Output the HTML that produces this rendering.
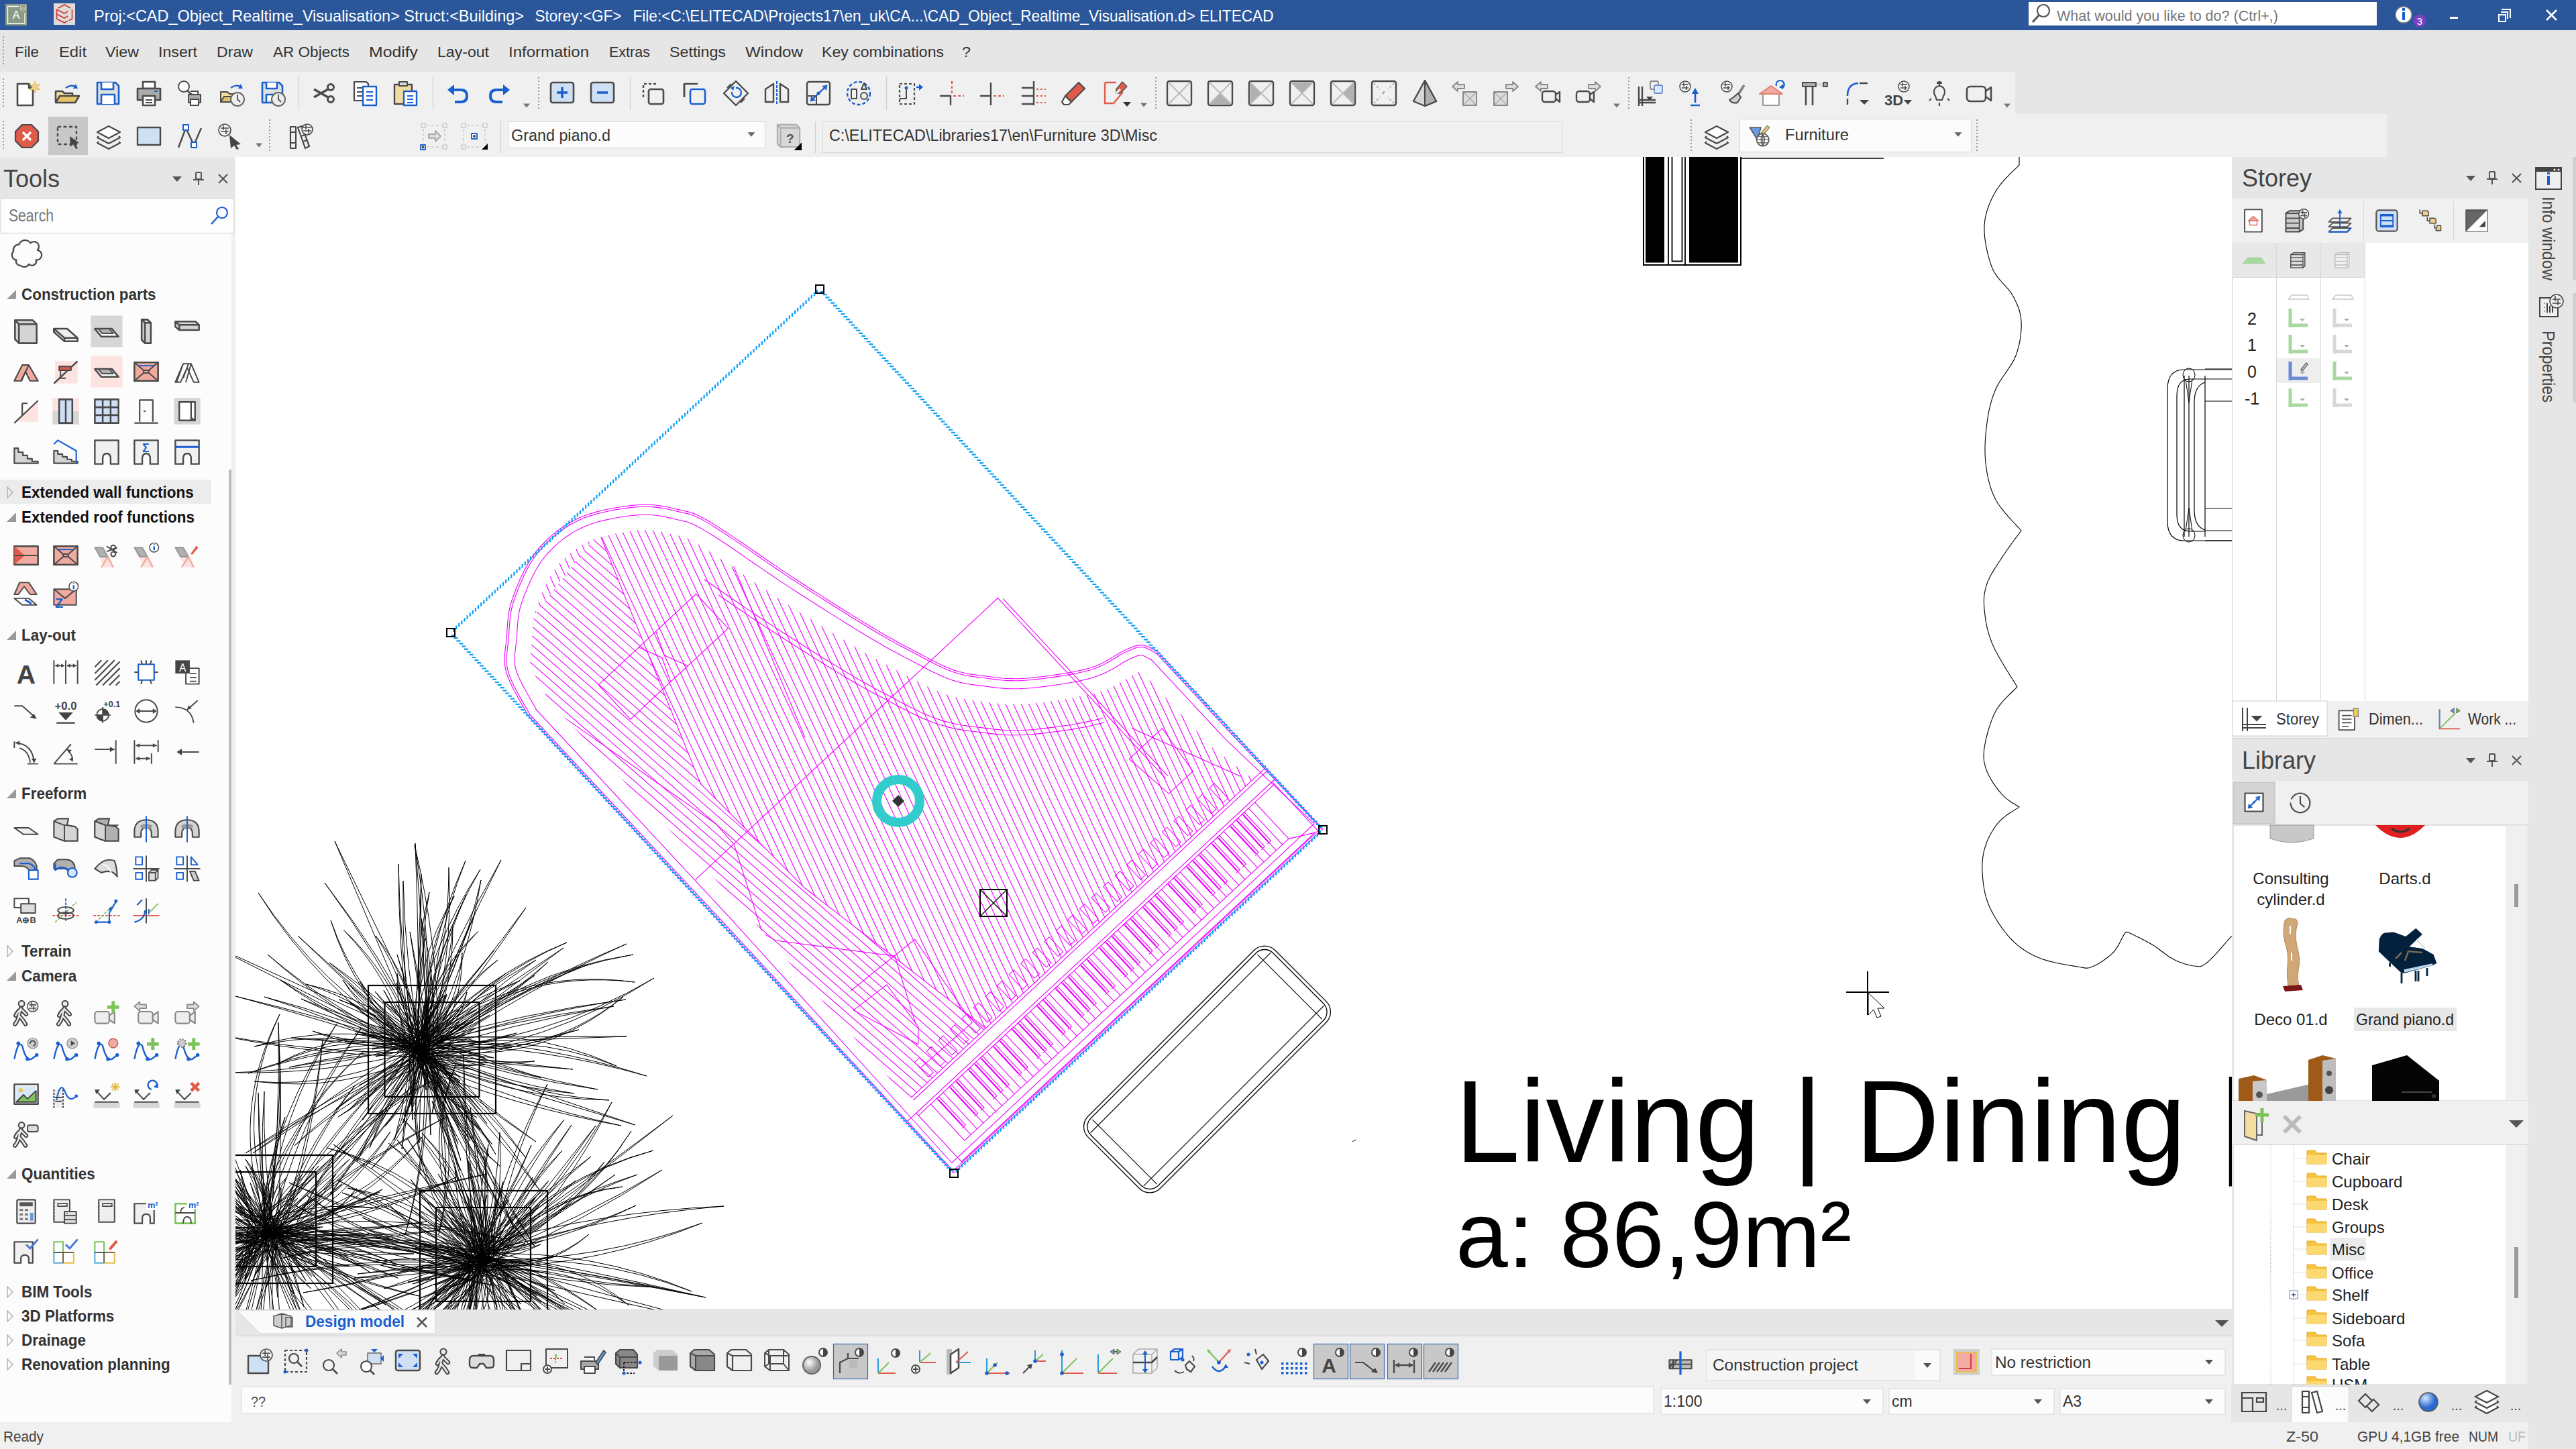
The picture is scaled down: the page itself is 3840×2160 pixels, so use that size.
<!DOCTYPE html>
<html><head><meta charset="utf-8"><title>ELITECAD</title>
<style>html,body{margin:0;padding:0;width:3840px;height:2160px;overflow:hidden;background:#f0f0f0}
svg{display:block;font-family:"Liberation Sans",sans-serif}</style></head>
<body><svg width="3840" height="2160" viewBox="0 0 3840 2160">
<rect x="0.0" y="0.0" width="3840.0" height="45.0" fill="#2b579a" />
<rect x="8.0" y="6.0" width="32.0" height="32.0" fill="#8a9a84" />
<path d="M28 9.5 H11.5 V35 H37 V19" fill="none" stroke="#fff" stroke-width="1.3"/>
<ellipse cx="34.5" cy="9" rx="4" ry="2" fill="none" stroke="#c8d0c0" stroke-width="1"/><path d="M30.5 9 V15 Q34.5 18 38.5 15 V9 M30.5 12 Q34.5 15 38.5 12" fill="none" stroke="#c8d0c0" stroke-width="1"/>
<text x="24.0" y="28.0" font-size="16.0" fill="#fff" text-anchor="middle" >A</text>
<rect x="80.0" y="5.0" width="32.0" height="32.0" fill="#dcdcdc" />
<path d="M87 12 L96 7 L105 12 M84.5 14 V28 L96 34 L101 31 M84.5 14 L96 20 L101 17 M84.5 21 L96 27 L101 24 M107.5 14 V28 L103 30.5" fill="none" stroke="#d9322a" stroke-width="1.6"/>
<text x="140.0" y="32.0" font-size="24.0" fill="#fff" textLength="641.0" lengthAdjust="spacingAndGlyphs" >Proj:&lt;CAD_Object_Realtime_Visualisation&gt; Struct:&lt;Building&gt;</text>
<text x="797.5" y="32.0" font-size="24.0" fill="#fff" textLength="129.0" lengthAdjust="spacingAndGlyphs" >Storey:&lt;GF&gt;</text>
<text x="943.5" y="32.0" font-size="24.0" fill="#fff" textLength="955.0" lengthAdjust="spacingAndGlyphs" >File:&lt;C:\ELITECAD\Projects17\en_uk\CA...\CAD_Object_Realtime_Visualisation.d&gt; ELITECAD</text>
<rect x="3024.0" y="3.0" width="519.0" height="35.0" fill="#fff" />
<circle cx="3046" cy="16" r="9" fill="none" stroke="#555" stroke-width="2.2"/>
<line x1="3039.0" y1="23.0" x2="3030.0" y2="33.0" stroke="#555" stroke-width="3" />
<text x="3066.0" y="31.0" font-size="22.0" fill="#777" textLength="330.0" lengthAdjust="spacingAndGlyphs" >What would you like to do? (Ctrl+,)</text>
<circle cx="3583" cy="22" r="12" fill="#fff" stroke="#888" stroke-width="1.5"/>
<rect x="3581.0" y="18.0" width="4.0" height="12.0" fill="#1a5fd0" />
<rect x="3581.0" y="12.0" width="4.0" height="4.0" fill="#1a5fd0" />
<circle cx="3607" cy="31" r="9.5" fill="#7b3fc4"/>
<text x="3607.0" y="37.0" font-size="15.0" fill="#fff" text-anchor="middle" >3</text>
<rect x="3652.0" y="25.0" width="12.0" height="3.0" fill="#fff" />
<path d="M3728 18 h10 v10 M3725 22 h10 v10 h-10 z M3729 14 h13 v13" fill="none" stroke="#fff" stroke-width="2"/>
<path d="M3796 15 L3811 30 M3811 15 L3796 30" stroke="#fff" stroke-width="2.5"/>
<rect x="0.0" y="45.0" width="3840.0" height="190.0" fill="#e6e6e6" />
<line x1="5" y1="54" x2="5" y2="96" stroke="#9a9a9a" stroke-width="2" stroke-dasharray="2 3"/>
<text x="22.0" y="85.0" font-size="22.0" fill="#333" textLength="36.0" lengthAdjust="spacingAndGlyphs" >File</text>
<text x="88.0" y="85.0" font-size="22.0" fill="#333" textLength="41.0" lengthAdjust="spacingAndGlyphs" >Edit</text>
<text x="157.0" y="85.0" font-size="22.0" fill="#333" textLength="50.0" lengthAdjust="spacingAndGlyphs" >View</text>
<text x="236.0" y="85.0" font-size="22.0" fill="#333" textLength="58.0" lengthAdjust="spacingAndGlyphs" >Insert</text>
<text x="323.0" y="85.0" font-size="22.0" fill="#333" textLength="54.0" lengthAdjust="spacingAndGlyphs" >Draw</text>
<text x="407.0" y="85.0" font-size="22.0" fill="#333" textLength="114.0" lengthAdjust="spacingAndGlyphs" >AR Objects</text>
<text x="550.0" y="85.0" font-size="22.0" fill="#333" textLength="73.0" lengthAdjust="spacingAndGlyphs" >Modify</text>
<text x="652.0" y="85.0" font-size="22.0" fill="#333" textLength="77.0" lengthAdjust="spacingAndGlyphs" >Lay-out</text>
<text x="758.0" y="85.0" font-size="22.0" fill="#333" textLength="120.0" lengthAdjust="spacingAndGlyphs" >Information</text>
<text x="908.0" y="85.0" font-size="22.0" fill="#333" textLength="61.0" lengthAdjust="spacingAndGlyphs" >Extras</text>
<text x="998.0" y="85.0" font-size="22.0" fill="#333" textLength="84.0" lengthAdjust="spacingAndGlyphs" >Settings</text>
<text x="1111.0" y="85.0" font-size="22.0" fill="#333" textLength="86.0" lengthAdjust="spacingAndGlyphs" >Window</text>
<text x="1225.0" y="85.0" font-size="22.0" fill="#333" textLength="182.0" lengthAdjust="spacingAndGlyphs" >Key combinations</text>
<text x="1434.0" y="85.0" font-size="22.0" fill="#333" textLength="13.0" lengthAdjust="spacingAndGlyphs" >?</text>
<rect x="0.0" y="107.0" width="3004.0" height="63.0" fill="#f0f0f0" />
<rect x="0.0" y="170.0" width="3558.0" height="65.0" fill="#f0f0f0" />
<line x1="0.0" y1="170.0" x2="3004.0" y2="170.0" stroke="#f0f0f0" stroke-width="1" />
<rect x="351.0" y="234.0" width="2976.0" height="1718.0" fill="#fff" />
<svg x="351" y="234" width="2976" height="1718" overflow="hidden"><g transform="translate(-351 -234)">
<path d="M2450 234 V395 H2595 V234" fill="#fff" stroke="#000" stroke-width="2"/>
<rect x="2453.0" y="234.0" width="28.0" height="157.5" fill="#000" />
<rect x="2518.0" y="234.0" width="73.0" height="157.5" fill="#000" />
<path d="M2487 234 V395 M2512 234 V395 M2492.5 234 V389.5 H2507.5 V234" fill="none" stroke="#000" stroke-width="1.8"/>
<line x1="2596.0" y1="236.0" x2="2808.0" y2="236.0" stroke="#000" stroke-width="1.5" />
<path d="M3010 234 L3010 246 L3007.2 248.9 L3003.3 252.7 L2998.6 257.2 L2993.6 262.2 L2988.3 267.7 L2983.3 273.4 L2978.8 279.2 L2975.0 285.0 L2971.8 290.8 L2968.8 296.8 L2966.0 303.1 L2963.6 309.5 L2961.5 316.1 L2959.8 322.9 L2958.6 329.9 L2958.0 337.0 L2958.0 344.5 L2958.5 352.5 L2959.6 360.8 L2961.1 369.2 L2962.9 377.6 L2965.1 385.6 L2967.4 393.2 L2970.0 400.0 L2973.0 406.1 L2976.6 411.6 L2980.7 416.7 L2984.9 421.5 L2989.2 426.1 L2993.3 430.6 L2996.9 435.2 L3000.0 440.0 L3002.6 444.8 L3004.9 449.5 L3007.0 454.2 L3008.9 458.8 L3010.4 463.5 L3011.6 468.4 L3012.5 473.6 L3013.0 479.0 L3013.2 484.8 L3013.0 490.9 L3012.5 497.3 L3011.7 503.8 L3010.5 510.4 L3009.0 517.0 L3007.2 523.6 L3005.0 530.0 L3002.2 536.3 L2998.6 542.6 L2994.6 548.8 L2990.3 555.1 L2986.0 561.3 L2981.8 567.5 L2978.1 573.8 L2975.0 580.0 L2972.5 586.2 L2970.3 592.3 L2968.4 598.3 L2966.8 604.4 L2965.3 610.5 L2964.1 616.8 L2963.0 623.3 L2962.0 630.0 L2961.1 637.1 L2960.3 644.4 L2959.7 652.0 L2959.2 659.7 L2959.0 667.4 L2959.0 675.1 L2959.4 682.7 L2960.0 690.0 L2960.9 697.2 L2962.0 704.3 L2963.4 711.4 L2965.0 718.4 L2966.9 725.3 L2969.2 732.0 L2971.9 738.6 L2975.0 745.0 L2978.9 751.5 L2983.8 758.2 L2989.2 764.9 L2994.9 771.4 L3000.5 777.5 L3005.6 782.9 L3009.9 787.5 L3013.0 791.0 L3010.8 794.0 L3007.9 798.0 L3004.3 802.7 L3000.4 808.0 L2996.4 813.6 L2992.3 819.3 L2988.5 824.8 L2985.0 830.0 L2981.8 835.0 L2978.5 840.0 L2975.2 845.0 L2972.0 850.1 L2969.0 855.1 L2966.3 860.1 L2963.9 865.1 L2962.0 870.0 L2960.5 874.8 L2959.3 879.3 L2958.4 883.8 L2957.8 888.2 L2957.5 892.8 L2957.4 897.6 L2957.6 902.6 L2958.0 908.0 L2958.6 913.7 L2959.3 919.7 L2960.2 925.9 L2961.4 932.4 L2963.0 939.0 L2964.9 945.8 L2967.2 952.8 L2970.0 960.0 L2973.7 967.9 L2978.4 976.7 L2983.7 985.9 L2989.2 995.2 L2994.7 1004.2 L2999.8 1012.2 L3004.0 1019.0 L3007.0 1024.0 L3004.4 1026.6 L3000.9 1030.0 L2996.7 1034.0 L2992.1 1038.6 L2987.3 1043.5 L2982.7 1048.8 L2978.5 1054.3 L2975.0 1060.0 L2972.0 1066.1 L2969.2 1072.9 L2966.6 1080.1 L2964.2 1087.6 L2962.2 1095.0 L2960.4 1102.2 L2959.0 1109.0 L2958.0 1115.0 L2957.4 1120.3 L2957.1 1125.2 L2957.1 1129.6 L2957.5 1133.8 L2958.2 1137.8 L2959.2 1141.7 L2960.4 1145.8 L2962.0 1150.0 L2964.0 1154.5 L2966.4 1159.1 L2969.1 1163.9 L2972.2 1168.6 L2975.4 1173.1 L2978.7 1177.4 L2981.9 1181.4 L2985.0 1185.0 L2988.2 1188.2 L2991.7 1191.1 L2995.3 1193.8 L2998.9 1196.2 L3002.4 1198.3 L3005.5 1200.2 L3008.1 1201.7 L3010.0 1203.0 L3007.6 1204.6 L3004.4 1206.6 L3000.5 1209.1 L2996.2 1211.8 L2991.8 1214.8 L2987.5 1218.1 L2983.5 1221.5 L2980.0 1225.0 L2976.9 1228.7 L2973.9 1232.7 L2971.1 1237.0 L2968.4 1241.4 L2966.0 1245.9 L2963.7 1250.6 L2961.7 1255.3 L2960.0 1260.0 L2958.6 1264.7 L2957.3 1269.4 L2956.4 1274.2 L2955.6 1279.1 L2955.1 1284.0 L2954.8 1289.2 L2954.8 1294.5 L2955.0 1300.0 L2955.4 1305.8 L2955.9 1311.8 L2956.6 1318.0 L2957.6 1324.4 L2958.9 1330.8 L2960.5 1337.3 L2962.5 1343.7 L2965.0 1350.0 L2968.0 1356.4 L2971.4 1363.0 L2975.3 1369.7 L2979.5 1376.4 L2984.0 1382.9 L2988.6 1389.0 L2993.3 1394.8 L2998.0 1400.0 L3002.7 1404.7 L3007.5 1408.9 L3012.4 1412.8 L3017.5 1416.3 L3022.8 1419.6 L3028.2 1422.6 L3034.0 1425.4 L3040.0 1428.0 L3046.6 1430.4 L3054.0 1432.6 L3061.8 1434.5 L3069.8 1436.2 L3077.5 1437.7 L3084.9 1439.0 L3091.4 1440.1 L3097.0 1441.0 L3101.4 1441.8 L3104.8 1442.4 L3107.4 1442.9 L3109.6 1443.1 L3111.6 1443.1 L3113.7 1442.8 L3116.1 1442.1 L3119.0 1441.0 L3122.5 1439.4 L3126.4 1437.4 L3130.6 1435.0 L3134.8 1432.2 L3139.0 1429.3 L3143.0 1426.2 L3146.7 1423.1 L3150.0 1420.0 L3152.9 1416.7 L3155.5 1412.9 L3157.9 1408.9 L3160.1 1404.8 L3162.0 1400.9 L3163.9 1397.3 L3165.5 1394.3 L3167.0 1392.0 L3168.3 1390.5 L3169.4 1389.6 L3170.3 1389.3 L3171.1 1389.2 L3171.7 1389.5 L3172.2 1389.8 L3172.6 1390.0 L3173.0 1390.0 L3175.7 1391.4 L3179.4 1393.1 L3183.7 1395.3 L3188.5 1397.6 L3193.6 1400.2 L3198.6 1402.8 L3203.5 1405.4 L3208.0 1408.0 L3212.2 1410.6 L3216.2 1413.5 L3220.3 1416.5 L3224.2 1419.5 L3228.2 1422.5 L3232.1 1425.2 L3236.1 1427.8 L3240.0 1430.0 L3244.0 1431.9 L3248.1 1433.7 L3252.2 1435.3 L3256.3 1436.7 L3260.3 1437.9 L3264.1 1438.8 L3267.7 1439.5 L3271.0 1440.0 L3273.8 1440.3 L3276.2 1440.6 L3278.2 1440.8 L3280.1 1440.6 L3282.1 1440.1 L3284.3 1439.1 L3286.8 1437.4 L3290.0 1435.0 L3294.0 1431.4 L3298.9 1426.5 L3304.2 1420.8 L3309.7 1414.7 L3315.0 1408.6 L3319.9 1403.0 L3324.0 1398.3 L3327.0 1395.0" fill="none" stroke="#000" stroke-width="1.1"/>
<path d="M3327 551 H3256 Q3231 551 3231 580 V777 Q3231 806 3256 806 H3327" fill="none" stroke="#000" stroke-width="1.2"/>
<path d="M3287 565 H3265 Q3245 565 3245 590 V767 Q3245 792 3265 792 H3287" fill="none" stroke="#000" stroke-width="1.2"/>
<line x1="3256.0" y1="560.0" x2="3256.0" y2="800.0" stroke="#000" stroke-width="1.2" />
<line x1="3263.0" y1="560.0" x2="3263.0" y2="800.0" stroke="#000" stroke-width="1.2" />
<line x1="3287.0" y1="560.0" x2="3287.0" y2="800.0" stroke="#000" stroke-width="1.2" />
<path d="M3287 570 Q3271 575 3271 600 V760 Q3271 785 3287 790" fill="none" stroke="#000" stroke-width="1.2"/>
<line x1="3287.0" y1="550.0" x2="3327.0" y2="550.0" stroke="#000" stroke-width="1.2" />
<line x1="3287.0" y1="565.0" x2="3327.0" y2="565.0" stroke="#000" stroke-width="1.2" />
<line x1="3287.0" y1="598.0" x2="3327.0" y2="598.0" stroke="#000" stroke-width="1.2" />
<line x1="3287.0" y1="758.0" x2="3327.0" y2="758.0" stroke="#000" stroke-width="1.2" />
<line x1="3287.0" y1="791.0" x2="3327.0" y2="791.0" stroke="#000" stroke-width="1.2" />
<line x1="3287.0" y1="806.0" x2="3327.0" y2="806.0" stroke="#000" stroke-width="1.2" />
<ellipse cx="3263" cy="559" rx="9" ry="10" fill="none" stroke="#000"/><ellipse cx="3263" cy="798" rx="9" ry="10" fill="none" stroke="#000"/>
<path d="M3258 565 L3263 600 L3268 565 M3258 792 L3263 757 L3268 792" fill="none" stroke="#000"/>
<line x1="2752.0" y1="1479.0" x2="2816.0" y2="1479.0" stroke="#000" stroke-width="2" />
<line x1="2784.0" y1="1448.0" x2="2784.0" y2="1513.0" stroke="#000" stroke-width="2" />
<path d="M2785 1480 L2809 1503 L2799 1503 L2804 1515 L2798 1517 L2793 1505 L2785 1513 Z" fill="#fff" stroke="#000" stroke-width="1"/>
<line x1="2016.0" y1="1702.0" x2="2021.0" y2="1699.0" stroke="#000" stroke-width="1" />
<g transform="translate(1799.5 1594) rotate(-45)" fill="none" stroke="#000" stroke-width="1.3"><rect x="-197" y="-76" width="394" height="152" rx="22"/><rect x="-192" y="-71" width="384" height="142" rx="18"/><path d="M-190 -56 H190 M-190 56 H190 M-174 -68 V68 M174 -68 V68" stroke-width="1.1"/></g>
<text x="2169.0" y="1732.0" font-size="174.0" fill="#000" >Living | Dining |</text>
<text x="2170.0" y="1889.0" font-size="140.0" fill="#000" textLength="590.0" lengthAdjust="spacingAndGlyphs" >a: 86,9m²</text>
<path d="M651 1566Q786 1474 934 1407Q784 1470 647 1558M626 1565Q654 1636 683 1706Q656 1635 631 1563M628 1547Q613 1484 592 1423Q611 1485 623 1549M613 1540Q581 1451 512 1386Q577 1453 606 1544M634 1560Q518 1526 418 1461Q516 1531 629 1571M624 1552Q607 1515 571 1492Q604 1517 619 1556M622 1579Q656 1594 686 1614Q661 1589 631 1568M629 1568Q617 1621 601 1674Q620 1622 634 1569M639 1562Q621 1441 677 1336Q614 1440 624 1559M612 1566Q702 1713 797 1858Q708 1710 624 1559M640 1546Q570 1400 499 1254Q562 1403 625 1552M624 1574Q698 1563 770 1540Q698 1559 623 1567M640 1570Q772 1452 944 1423Q771 1449 638 1565M616 1569Q617 1637 625 1704Q625 1637 631 1570M628 1563Q677 1418 747 1282Q670 1415 615 1557M614 1563Q606 1632 588 1699Q612 1634 627 1567M616 1563Q703 1638 799 1702Q705 1635 620 1558M626 1549Q535 1525 449 1489Q533 1530 622 1558M635 1552Q627 1527 616 1503Q620 1528 621 1555M638 1582Q661 1646 701 1701Q665 1644 647 1577M625 1551Q616 1464 560 1395Q609 1466 611 1557M647 1552Q682 1480 742 1431Q679 1478 641 1547M629 1563Q616 1628 574 1679Q620 1630 637 1567M631 1560Q530 1568 431 1591Q530 1572 632 1566M631 1576Q640 1710 604 1841Q642 1710 637 1576M637 1557Q686 1533 696 1479Q681 1530 628 1550M627 1574Q759 1638 908 1640Q761 1631 631 1561M628 1577Q522 1626 439 1708Q525 1631 635 1586M630 1579Q687 1733 792 1860Q691 1731 640 1574M628 1561Q511 1623 379 1612Q512 1629 631 1572M641 1568Q576 1537 520 1493Q575 1540 638 1573M626 1543Q562 1485 491 1435Q558 1489 618 1552M653 1543Q652 1401 618 1260Q644 1401 637 1544M640 1553Q676 1426 669 1293Q669 1425 627 1551M630 1560Q581 1546 529 1541Q580 1550 628 1569M613 1559Q578 1596 535 1618Q580 1598 616 1564M628 1549Q646 1457 713 1388Q642 1455 619 1545M624 1581Q745 1572 863 1535Q744 1567 623 1572M607 1572Q593 1593 576 1611Q597 1598 615 1582M610 1581Q610 1613 616 1646Q615 1614 620 1582M624 1558Q585 1553 548 1541Q584 1558 621 1569M646 1557Q651 1463 628 1369Q643 1463 631 1557M610 1566Q611 1618 615 1670Q615 1618 617 1567M638 1559Q675 1475 675 1381Q668 1473 624 1555M631 1547Q612 1520 590 1496Q606 1524 619 1554M637 1544Q650 1434 695 1334Q646 1433 630 1542M626 1549Q464 1477 303 1403Q461 1483 620 1561M629 1572Q651 1529 666 1483Q648 1528 624 1570M641 1556Q668 1557 694 1553Q667 1551 640 1545M615 1564Q720 1661 805 1775Q726 1656 626 1554M619 1569Q488 1637 366 1719Q491 1642 624 1579M631 1570Q695 1448 717 1312Q687 1446 617 1565M629 1545Q554 1521 511 1461Q551 1525 622 1553M625 1549Q647 1415 716 1296Q641 1413 613 1545M623 1565Q762 1442 946 1464Q761 1439 621 1559M633 1548Q643 1521 636 1492Q639 1521 624 1547M634 1573Q678 1650 729 1722Q685 1645 647 1564M619 1573Q692 1637 739 1721Q694 1636 622 1570M626 1565Q681 1546 730 1513Q680 1543 623 1558M626 1554Q488 1595 345 1599Q489 1602 627 1566M644 1581Q709 1704 766 1831Q715 1701 656 1575M629 1572Q604 1444 601 1313Q598 1444 618 1573M626 1566Q663 1539 705 1524Q659 1532 619 1552M618 1555Q476 1469 385 1331Q473 1472 612 1561M622 1568Q608 1605 583 1635Q610 1606 627 1570M639 1565Q751 1488 876 1438Q750 1486 636 1560M604 1558Q582 1521 549 1498Q580 1523 600 1564M637 1559Q612 1513 591 1465Q605 1516 622 1565M639 1553Q676 1544 716 1554Q676 1540 638 1545M631 1554Q657 1536 668 1507Q655 1535 626 1551M613 1574Q655 1591 703 1594Q657 1587 616 1566M625 1557Q572 1641 532 1732Q577 1644 634 1563M640 1549Q716 1454 784 1353Q712 1451 632 1543M615 1539Q596 1415 594 1288Q594 1415 610 1540M619 1555Q491 1554 370 1600Q492 1558 620 1561M618 1575Q636 1599 651 1624Q643 1596 632 1569M619 1564Q500 1508 399 1423Q498 1511 616 1569M628 1561Q637 1525 647 1490Q633 1524 619 1559M634 1561Q780 1512 933 1490Q780 1509 633 1554M622 1572Q624 1605 649 1631Q626 1604 626 1571M627 1554Q580 1538 530 1538Q579 1544 624 1567M622 1584Q575 1641 551 1711Q578 1643 628 1587M633 1565Q637 1526 639 1486Q634 1526 626 1564M637 1544Q686 1479 737 1416Q684 1478 633 1541M615 1569Q730 1618 856 1630Q732 1611 619 1556M623 1562Q624 1667 553 1743Q629 1669 633 1566M628 1542Q567 1423 484 1316Q564 1424 623 1545M615 1542Q598 1498 592 1451Q592 1500 602 1546M641 1583Q653 1620 644 1660Q658 1619 650 1581M626 1560Q668 1532 711 1505Q666 1528 621 1553M638 1574Q656 1600 686 1611Q659 1596 643 1567M647 1564Q670 1550 684 1523Q669 1548 645 1560M639 1565Q632 1411 619 1257Q625 1411 624 1566M639 1565Q738 1487 840 1413Q735 1482 631 1554M636 1574Q682 1559 724 1578Q683 1555 637 1566M626 1557Q554 1489 456 1467Q551 1495 620 1569M644 1562Q690 1501 689 1420Q684 1499 634 1557M613 1583Q558 1687 491 1782Q561 1689 619 1588M622 1565Q649 1541 674 1516Q645 1537 614 1557M643 1567Q764 1606 891 1624Q765 1601 645 1556M621 1580Q663 1652 687 1730Q666 1651 628 1578M643 1565Q679 1554 710 1532Q677 1549 640 1556M628 1560Q644 1520 666 1482Q639 1517 619 1555M621 1543Q565 1509 518 1465Q560 1515 611 1554M622 1564Q635 1594 656 1621Q641 1591 633 1559M630 1568Q605 1543 580 1517Q602 1546 624 1575M637 1568Q718 1512 797 1454Q715 1507 630 1558M613 1571Q660 1631 716 1685Q665 1628 624 1564M623 1554Q642 1631 711 1666Q644 1629 627 1551M623 1559Q628 1431 628 1303Q625 1431 617 1559M628 1578Q741 1584 854 1594Q742 1581 629 1571M627 1570Q685 1701 654 1840Q691 1700 639 1568M608 1569Q532 1717 408 1825Q537 1721 618 1576M647 1554Q619 1441 640 1330Q612 1441 633 1554M620 1569Q453 1570 289 1535Q453 1573 620 1575M635 1572Q699 1558 763 1561Q699 1552 635 1561M623 1561Q640 1626 642 1692Q643 1625 629 1560M608 1549Q534 1559 466 1537Q534 1564 607 1559M615 1567Q556 1607 501 1653Q558 1610 619 1573M621 1567Q574 1614 540 1670Q578 1617 628 1573M624 1567Q629 1620 602 1664Q631 1620 628 1568M629 1541Q569 1514 536 1463Q564 1519 618 1551M626 1579Q672 1593 723 1587Q672 1590 627 1574M613 1557Q493 1635 377 1719Q497 1640 620 1568M634 1566Q673 1606 700 1657Q675 1605 637 1563M633 1569Q713 1592 797 1582Q714 1588 634 1561M641 1585Q794 1631 947 1677Q796 1626 645 1574M629 1575Q622 1621 618 1668Q630 1622 645 1576M626 1562Q643 1505 643 1445Q639 1504 619 1561M632 1556Q666 1536 686 1503Q660 1531 621 1546M632 1568Q682 1619 726 1675Q684 1617 635 1565M648 1557Q740 1507 817 1434Q738 1503 643 1549M626 1567Q629 1596 635 1625Q634 1595 636 1565M650 1568Q728 1589 807 1607Q730 1582 654 1554M652 1558Q811 1560 964 1604Q811 1555 653 1550M612 1551Q565 1509 505 1490Q564 1511 609 1555M614 1587Q764 1649 926 1678Q766 1644 619 1576M632 1555Q518 1529 413 1586Q518 1535 633 1566M625 1567Q513 1517 394 1486Q511 1522 622 1577M647 1555Q790 1550 934 1545Q790 1546 647 1546M639 1556Q628 1472 611 1389Q625 1473 635 1557M619 1557Q605 1634 599 1713Q610 1635 629 1559M631 1564Q533 1488 493 1372Q530 1491 625 1569M634 1570Q781 1534 919 1589Q781 1526 635 1554M617 1559Q591 1543 564 1530Q588 1550 610 1573M624 1561Q712 1636 784 1726Q716 1632 632 1553M619 1568Q511 1680 443 1821Q514 1682 625 1572M648 1575Q693 1570 736 1577Q693 1563 649 1563M635 1549Q671 1455 708 1361Q667 1453 628 1546M631 1561Q533 1552 434 1547Q533 1555 631 1568M620 1573Q662 1670 746 1739Q666 1668 627 1568M637 1554Q628 1518 636 1484Q625 1518 631 1553M621 1561Q566 1604 519 1656Q569 1607 626 1567M628 1564Q684 1684 746 1801Q686 1683 632 1562M636 1551Q594 1517 559 1478Q590 1520 629 1557M634 1568Q539 1481 444 1395Q537 1483 630 1572M603 1559Q579 1536 556 1511Q577 1539 598 1565M635 1556Q596 1522 572 1476Q594 1523 631 1559M627 1561Q655 1532 674 1497Q650 1528 617 1553M640 1574Q653 1602 661 1633Q655 1601 644 1572M623 1565Q650 1657 686 1745Q656 1655 636 1561M631 1541Q641 1509 663 1483Q635 1507 619 1536M640 1562Q641 1416 694 1283Q635 1415 627 1559M612 1551Q587 1566 560 1575Q588 1571 614 1561M640 1559Q691 1499 754 1451Q687 1493 631 1548M620 1585Q677 1646 734 1706Q682 1642 631 1578M640 1559Q724 1456 845 1405Q722 1454 636 1553M639 1588Q662 1597 686 1605Q665 1593 645 1580M624 1561Q795 1597 929 1486Q794 1593 622 1554M624 1561Q489 1518 351 1485Q488 1522 622 1567M614 1574Q762 1525 915 1500Q761 1520 611 1564M636 1561Q680 1646 723 1732Q682 1645 639 1559M619 1571Q624 1485 633 1399Q620 1484 610 1570M647 1559Q716 1486 799 1431Q711 1480 638 1547M625 1556Q607 1604 615 1656Q613 1605 637 1558M632 1565Q667 1545 698 1520Q665 1543 629 1560M609 1553Q495 1526 379 1560Q495 1533 609 1567M621 1564Q588 1550 555 1564Q588 1557 622 1577M615 1555Q668 1603 717 1656Q671 1600 620 1549M633 1551Q698 1497 775 1462Q694 1492 626 1540M616 1555Q570 1622 504 1665Q572 1625 621 1562M626 1566Q580 1605 536 1648Q581 1607 630 1570M629 1556Q537 1711 388 1811Q543 1716 640 1566M617 1572Q633 1534 652 1497Q628 1532 606 1568M632 1576Q816 1559 975 1458Q814 1553 629 1564" fill="none" stroke="#000" stroke-width="1"/>
<circle cx="628" cy="1563" r="9" fill="#000"/>
<rect x="549.0" y="1469.0" width="190.0" height="191.0" fill="none" stroke="#000" stroke-width="2.2" />
<rect x="573.5" y="1494.0" width="141.0" height="141.0" fill="none" stroke="#000" stroke-width="2.2" />
<path d="M417 1859Q481 1835 544 1842Q482 1828 418 1844M383 1836Q315 1862 246 1883Q316 1866 386 1844M392 1836Q362 1820 331 1807Q360 1825 388 1844M406 1820Q346 1662 417 1512Q341 1661 396 1819M403 1832Q410 1803 435 1786Q404 1798 391 1823M396 1851Q333 1887 276 1931Q337 1892 404 1862M399 1830Q405 1804 402 1778Q397 1803 384 1828M415 1846Q582 1811 748 1846Q582 1804 415 1831M392 1829Q358 1793 321 1760Q353 1798 383 1838M405 1842Q571 1847 729 1895Q572 1841 407 1830M405 1862Q424 1894 439 1929Q428 1892 413 1858M396 1839Q559 1788 726 1750Q558 1784 394 1831M402 1835Q358 1806 310 1787Q355 1812 395 1846M398 1840Q369 2001 321 2157Q374 2002 408 1843M410 1841Q391 1734 394 1627Q386 1734 399 1841M385 1844Q310 1944 230 2040Q311 1946 388 1847M415 1847Q485 1833 532 1771Q484 1830 412 1842M374 1855Q359 1875 333 1876Q363 1882 382 1869M398 1830Q362 1763 323 1697Q356 1766 385 1837M392 1830Q272 1831 154 1812Q271 1834 391 1836M401 1825Q263 1798 123 1832Q263 1805 401 1838M385 1835Q297 1824 207 1827Q296 1829 384 1846M387 1851Q335 1887 274 1909Q336 1889 390 1855M400 1841Q331 1835 261 1825Q330 1840 399 1850M384 1846Q310 1824 234 1821Q310 1830 383 1856M404 1852Q409 1887 396 1921Q413 1887 411 1852M413 1838Q433 1875 456 1909Q435 1874 416 1836M382 1823Q340 1676 265 1543Q337 1677 377 1826M415 1851Q506 1873 593 1905Q508 1868 418 1841M391 1830Q311 1832 231 1835Q311 1838 390 1842M403 1826Q438 1782 475 1738Q437 1780 399 1824M403 1844Q440 1674 539 1532Q434 1671 392 1839M393 1819Q351 1795 313 1768Q348 1800 386 1827M401 1840Q441 1835 481 1829Q441 1830 400 1831M413 1832Q397 1783 366 1738Q390 1785 397 1837M413 1856Q464 1812 501 1750Q459 1806 403 1845M387 1842Q353 1877 311 1901Q358 1884 396 1855M398 1834Q357 1802 315 1772Q354 1806 391 1843M396 1828Q283 1933 178 2047Q285 1935 400 1833M377 1842Q278 1947 182 2056Q280 1949 380 1845M411 1841Q487 1855 552 1897Q489 1850 415 1832M406 1846Q414 1789 451 1751Q407 1785 394 1838M392 1845Q321 1845 250 1852Q321 1850 393 1853M386 1835Q317 1855 245 1855Q317 1860 387 1845M395 1844Q432 1975 504 2090Q439 1972 409 1838M388 1851Q348 1850 308 1850Q349 1852 389 1855M418 1838Q493 1897 575 1945Q496 1893 423 1829M406 1826Q507 1691 653 1605Q502 1686 397 1816M389 1834Q248 1892 134 1995Q252 1898 397 1847M409 1834Q403 1789 388 1745Q396 1790 395 1836M413 1841Q423 1683 415 1524Q418 1683 401 1840M389 1843Q426 1703 416 1560Q423 1703 382 1843M370 1827Q366 1940 299 2020Q371 1944 381 1833M390 1836Q322 1980 251 2123Q326 1982 398 1840M409 1841Q521 1757 601 1641Q519 1755 405 1836M385 1838Q286 1772 168 1767Q285 1775 383 1844M381 1837Q350 1905 306 1962Q354 1907 388 1842M407 1818Q373 1813 342 1803Q370 1817 402 1827M379 1850Q329 1926 269 1994Q333 1930 386 1856M394 1836Q270 1881 149 1936Q272 1886 399 1847M407 1862Q511 1874 617 1869Q511 1868 408 1850M393 1830Q370 1789 358 1744Q365 1791 384 1834M384 1834Q321 1995 240 2147Q323 1996 388 1836M381 1849Q305 1921 262 2018Q310 1925 390 1856M404 1853Q503 1914 578 2001Q507 1909 413 1843M391 1850Q342 1827 291 1829Q342 1834 390 1864M390 1837Q360 1849 329 1860Q360 1852 392 1842M393 1834Q413 1787 408 1737Q408 1786 385 1833M393 1844Q374 1931 350 2018Q377 1932 399 1845M387 1822Q426 1674 543 1566Q424 1672 382 1819M393 1823Q346 1746 285 1678Q342 1748 387 1828M397 1828Q377 1908 336 1979Q382 1911 408 1833M380 1850Q330 1848 290 1876Q332 1854 384 1862M395 1830Q322 1760 258 1682Q317 1764 386 1838M400 1844Q490 1821 570 1773Q488 1816 397 1835M403 1839Q477 1842 550 1840Q477 1835 403 1826M410 1840Q448 1860 489 1851Q448 1854 412 1827M399 1819Q416 1661 502 1526Q411 1659 388 1815M399 1857Q525 1908 639 1978Q529 1901 407 1844M394 1830Q352 1776 304 1727Q347 1780 383 1839M396 1839Q320 1931 286 2046Q324 1933 402 1842M392 1847Q440 1970 509 2084Q447 1967 406 1840M409 1828Q434 1886 453 1948Q436 1885 414 1826M410 1837Q506 1714 624 1612Q502 1709 402 1828M407 1837Q306 1723 191 1623Q301 1728 398 1846M374 1854Q365 1928 312 1974Q369 1930 382 1859M407 1842Q474 1855 534 1887Q475 1850 410 1833M401 1839Q526 1740 667 1664Q525 1737 398 1835M404 1834Q386 1799 373 1763Q383 1800 398 1836M386 1855Q319 1917 276 1997Q323 1920 395 1862M387 1842Q429 1814 470 1786Q426 1811 382 1835M397 1853Q290 1872 197 1924Q292 1878 402 1864M410 1857Q425 1878 450 1889Q428 1874 416 1850M411 1837Q366 1790 336 1735Q360 1794 400 1844M408 1847Q495 1902 580 1962Q496 1901 410 1843M416 1843Q518 1789 582 1687Q514 1784 407 1833M400 1818Q367 1801 328 1794Q364 1806 394 1827M412 1858Q448 1723 530 1617Q444 1721 405 1854M387 1851Q408 1875 423 1901Q412 1873 394 1848M387 1826Q312 1773 252 1704Q308 1778 378 1836M399 1848Q425 1890 464 1921Q427 1888 403 1844M395 1841Q434 1952 499 2051Q438 1951 402 1838M398 1836Q264 1855 129 1863Q265 1861 399 1847M407 1854Q459 1884 521 1887Q462 1877 413 1839M400 1866Q440 1952 521 2007Q445 1948 410 1858M403 1830Q429 1872 465 1903Q431 1869 407 1825M392 1830Q491 1845 585 1881Q492 1842 394 1825M401 1842Q428 1861 461 1873Q431 1856 407 1831M390 1841Q427 1851 452 1877Q428 1849 393 1838M410 1830Q312 1700 186 1596Q310 1703 405 1834M408 1833Q401 1869 380 1901Q404 1870 414 1835M404 1854Q458 1812 510 1765Q455 1806 397 1843M396 1834Q350 1794 313 1747Q349 1795 392 1837M402 1849Q435 1839 468 1826Q434 1831 399 1833M390 1842Q369 1938 311 2018Q373 1940 399 1846M395 1863Q435 1835 477 1830Q434 1830 394 1853M398 1844Q517 1841 636 1821Q517 1838 397 1839M402 1837Q567 1888 737 1916Q568 1885 404 1831M406 1828Q427 1809 444 1786Q422 1805 397 1820M397 1846Q521 1935 611 2057Q523 1932 401 1841M399 1838Q547 1821 680 1755Q546 1817 396 1831M406 1832Q339 1930 255 2013Q344 1933 415 1840M361 1838Q303 1862 242 1860Q304 1866 361 1845M414 1849Q534 1853 654 1834Q534 1848 414 1837M401 1837Q512 1896 614 1972Q515 1893 405 1830M395 1824Q387 1870 365 1909Q392 1872 405 1828M400 1851Q422 1815 419 1771Q417 1813 391 1848M403 1817Q399 1768 366 1728Q392 1771 387 1822M383 1841Q309 1984 218 2116Q314 1987 393 1847M383 1847Q367 1875 365 1909Q372 1877 393 1851M379 1833Q308 1873 229 1892Q309 1877 382 1841M402 1838Q387 1734 385 1629Q385 1734 397 1838M380 1832Q358 1819 335 1810Q356 1824 375 1842M407 1845Q473 1712 575 1608Q470 1710 401 1840M413 1837Q514 1854 616 1866Q515 1851 413 1831M391 1830Q472 1794 563 1801Q471 1790 389 1820M401 1842Q465 1790 521 1728Q460 1784 391 1830M397 1846Q401 1930 406 2014Q405 1930 407 1846M410 1855Q375 1999 310 2134Q377 2000 414 1856M400 1845Q421 1870 439 1898Q425 1868 408 1840M390 1837Q288 1914 176 1977Q289 1916 392 1841M403 1835Q399 1748 425 1665Q394 1747 392 1834M423 1832Q468 1696 481 1550Q465 1695 417 1830M393 1838Q294 1903 183 1866Q295 1907 394 1845M400 1839Q402 1786 374 1740Q400 1787 396 1840M400 1841Q539 1806 629 1695Q536 1801 394 1830M395 1854Q310 1921 206 1955Q313 1926 400 1863M377 1860Q317 1910 267 1971Q321 1914 385 1868M390 1826Q301 1841 212 1844Q302 1845 391 1835M392 1847Q392 1927 386 2007Q397 1928 401 1848M396 1854Q432 1824 464 1788Q431 1822 393 1849M393 1852Q503 1906 625 1932Q504 1903 395 1845M388 1831Q304 1761 243 1669Q302 1763 384 1835M371 1837Q230 1846 110 1924Q232 1853 375 1851M399 1840Q354 1780 332 1708Q347 1783 385 1847M390 1834Q419 1987 417 2142Q426 1987 404 1833M403 1822Q407 1785 428 1754Q400 1783 390 1817M407 1832Q497 1955 595 2072Q501 1952 415 1824M396 1847Q482 1814 566 1777Q481 1811 394 1842M415 1855Q501 1839 586 1848Q501 1836 415 1848M414 1848Q557 1883 701 1908Q557 1879 416 1840M409 1839Q344 1771 303 1689Q341 1773 403 1842M391 1833Q234 1776 89 1692Q231 1781 386 1844M409 1826Q316 1733 280 1611Q310 1736 396 1832M394 1842Q410 1887 414 1934Q417 1885 408 1839" fill="none" stroke="#000" stroke-width="1"/>
<circle cx="397" cy="1839" r="9" fill="#000"/>
<rect x="307.0" y="1722.0" width="189.0" height="191.0" fill="none" stroke="#000" stroke-width="2.2" />
<rect x="330.0" y="1747.0" width="141.0" height="141.0" fill="none" stroke="#000" stroke-width="2.2" />
<path d="M723 1885Q769 1821 818 1760Q763 1816 712 1876M737 1858Q727 1790 696 1726Q719 1791 722 1860M714 1890Q736 2000 801 2093Q743 1997 728 1885M707 1897Q768 1973 851 2029Q773 1968 718 1888M711 1877Q621 1919 528 1956Q623 1925 716 1889M705 1876Q668 2039 630 2202Q675 2041 720 1880M729 1877Q716 1791 728 1706Q710 1790 717 1876M711 1868Q666 1863 622 1853Q664 1867 709 1876M727 1909Q798 1943 850 1996Q802 1938 735 1900M726 1864Q698 1844 673 1820Q694 1846 720 1869M721 1870Q661 1781 592 1699Q655 1785 709 1878M723 1876Q771 1907 827 1924Q773 1904 725 1869M732 1890Q622 1817 503 1759Q620 1821 728 1898M726 1863Q707 1799 698 1733Q701 1800 713 1865M721 1869Q896 1813 1079 1798Q894 1806 718 1856M729 1887Q763 1887 797 1885Q763 1883 730 1877M706 1877Q691 2036 707 2196Q696 2036 715 1878M709 1861Q737 1843 755 1818Q732 1840 698 1855M726 1898Q632 1973 548 2057Q634 1975 730 1901M735 1871Q765 1827 798 1786Q759 1822 723 1861M722 1890Q806 2025 894 2158Q809 2023 726 1887M729 1884Q732 1836 720 1788Q728 1836 721 1884M716 1884Q845 1915 978 1919Q846 1911 717 1876M702 1866Q579 1905 452 1927Q579 1907 702 1870M720 1865Q633 1746 487 1711Q630 1751 713 1874M738 1894Q850 1883 938 1946Q852 1875 742 1880M728 1890Q893 1886 1047 1823Q892 1880 726 1878M712 1877Q737 1800 721 1723Q733 1800 704 1877M723 1877Q819 1950 934 1983Q820 1947 726 1870M722 1874Q622 1812 510 1778Q619 1819 715 1888M715 1893Q884 1932 1054 1970Q886 1925 719 1879M729 1854Q768 1815 807 1776Q766 1814 725 1851M717 1869Q569 1833 419 1876Q568 1838 717 1879M719 1870Q697 1983 695 2098Q700 1983 724 1870M709 1883Q704 1996 650 2094Q710 1998 722 1887M721 1874Q885 1898 1047 1933Q886 1895 723 1866M730 1898Q771 1916 807 1942Q775 1910 738 1886M735 1890Q774 1928 815 1964Q777 1924 743 1882M713 1884Q697 1909 669 1919Q700 1913 720 1893M733 1881Q786 1774 852 1677Q782 1772 726 1876M737 1889Q794 1926 852 1962Q797 1922 742 1881M735 1877Q737 1824 740 1772Q734 1824 729 1876M727 1883Q880 1964 1041 2026Q881 1960 730 1877M714 1885Q671 1891 628 1876Q670 1896 713 1896M722 1882Q689 1916 653 1948Q690 1917 726 1885M723 1870Q689 1753 600 1667Q683 1757 711 1877M735 1873Q835 1823 901 1732Q831 1818 727 1863M705 1863Q656 1813 612 1758Q652 1816 698 1869M728 1873Q769 1762 841 1669Q763 1759 717 1867M724 1895Q777 1882 829 1873Q776 1878 724 1888M723 1875Q621 1741 680 1585Q616 1742 713 1876M725 1879Q632 1964 541 2052Q637 1970 736 1890M715 1883Q622 1961 507 2003Q625 1966 721 1893M705 1880Q633 1872 560 1880Q633 1874 705 1885M743 1874Q771 1828 807 1789Q770 1826 739 1870M715 1866Q567 1864 438 1796Q565 1871 711 1881M703 1876Q674 1934 623 1970Q676 1936 707 1880M704 1879Q660 1899 615 1914Q661 1903 706 1886M707 1881Q638 1904 567 1886Q638 1907 707 1887M722 1874Q671 1863 619 1861Q670 1868 720 1885M738 1867Q865 1807 941 1686Q864 1805 735 1864M711 1885Q759 1905 800 1934Q761 1902 714 1880M741 1876Q775 1871 806 1855Q774 1867 738 1868M728 1871Q714 1826 726 1781Q711 1825 721 1871M722 1874Q688 1810 678 1739Q680 1812 707 1879M714 1880Q820 1823 917 1751Q819 1821 712 1876M716 1901Q842 1924 906 2024Q843 1922 718 1898M730 1868Q829 1756 974 1715Q828 1754 727 1864M723 1871Q647 1894 572 1921Q649 1901 726 1884M727 1879Q691 1869 655 1855Q689 1873 723 1889M721 1876Q767 1867 810 1849Q765 1861 717 1864M701 1864Q692 2036 729 2208Q699 2036 715 1863M722 1864Q704 1913 673 1953Q710 1917 735 1872M728 1868Q629 1896 528 1905Q630 1903 730 1882M718 1860Q683 1989 683 2124Q689 1990 730 1861M712 1887Q540 1868 374 1909Q541 1871 712 1893M734 1863Q803 1789 881 1724Q799 1785 726 1855M711 1884Q760 1902 801 1932Q762 1899 715 1877M727 1873Q669 1874 614 1860Q669 1879 725 1884M729 1874Q824 1903 905 1964Q825 1901 731 1869M720 1878Q766 1893 815 1898Q767 1891 721 1874M711 1889Q702 1917 691 1942Q709 1919 724 1895M730 1881Q667 1790 607 1697Q664 1792 724 1884M719 1904Q727 1927 741 1948Q734 1925 734 1899M721 1875Q687 1900 648 1916Q688 1903 725 1883M728 1869Q759 1870 783 1853Q758 1867 725 1863M713 1872Q702 1836 673 1815Q699 1839 705 1877M733 1859Q750 1775 745 1688Q742 1774 719 1857M731 1883Q693 1869 660 1846Q691 1873 727 1890M726 1896Q781 1923 828 1959Q785 1917 734 1885M709 1898Q668 1919 624 1936Q669 1922 712 1903M713 1878Q745 1856 779 1836Q744 1854 710 1873M710 1871Q785 1997 822 2138Q790 1995 722 1866M712 1881Q677 1833 631 1798Q674 1836 706 1887M735 1867Q758 1735 816 1616Q752 1733 723 1862M736 1865Q691 1753 644 1641Q683 1755 721 1870M729 1865Q719 1758 701 1651Q714 1758 720 1866M710 1884Q641 1989 565 2088Q647 1993 721 1893M721 1859Q667 1768 579 1704Q661 1773 709 1869M736 1884Q797 1899 842 1944Q798 1897 739 1879M726 1879Q827 1795 950 1751Q824 1790 720 1868M726 1877Q759 1816 794 1755Q756 1814 718 1873M722 1877Q887 1902 1052 1934Q888 1900 723 1873M707 1881Q631 1850 551 1834Q630 1856 704 1892M718 1887Q656 1914 612 1965Q659 1918 725 1895M716 1871Q685 1840 653 1810Q683 1842 713 1874M710 1871Q687 1893 663 1914Q689 1896 714 1876M701 1879Q649 1938 590 1989Q651 1941 706 1885M742 1868Q816 1783 928 1769Q815 1781 739 1863M716 1863Q713 1831 686 1809Q709 1833 708 1867M718 1867Q710 1824 697 1783Q705 1825 707 1869M709 1881Q662 1904 637 1952Q664 1906 713 1885M703 1877Q573 1867 448 1825Q571 1874 700 1893M719 1877Q576 1865 457 1782Q574 1869 716 1887M704 1877Q664 1895 622 1888Q665 1899 705 1886M746 1859Q743 1809 750 1761Q736 1807 732 1855M731 1877Q712 1831 667 1805Q706 1836 719 1886M705 1874Q567 1821 431 1763Q565 1825 701 1882M716 1877Q717 2008 768 2129Q722 2007 726 1875M726 1878Q629 1886 533 1899Q630 1889 727 1886M724 1884Q728 1940 703 1991Q733 1940 734 1886M725 1872Q681 1744 646 1614Q678 1745 718 1874M724 1857Q678 1819 628 1785Q675 1822 717 1863M700 1868Q626 2022 471 2069Q631 2028 709 1880M728 1866Q729 1818 748 1775Q726 1817 723 1865M729 1877Q763 1917 780 1967Q765 1915 734 1874M740 1864Q683 1863 627 1857Q682 1869 737 1878M729 1880Q885 1869 1031 1925Q885 1864 730 1869M730 1878Q708 1769 629 1689Q704 1772 721 1882M728 1880Q765 1838 804 1797Q761 1833 720 1871M719 1877Q634 1855 548 1838Q633 1861 716 1890M726 1880Q625 1790 618 1657Q621 1792 718 1884M713 1880Q621 1954 511 1993Q624 1958 718 1889M707 1870Q758 1792 792 1707Q756 1791 702 1868M726 1918Q773 1969 850 1983Q776 1966 732 1911M722 1894Q838 1962 964 2010Q841 1956 728 1883M704 1886Q591 1984 466 2063Q596 1990 713 1899M710 1868Q677 1901 642 1930Q682 1907 718 1881M721 1879Q629 1852 540 1815Q627 1857 718 1889M714 1861Q585 1837 454 1860Q585 1839 713 1866M697 1881Q610 1928 516 1959Q612 1933 701 1891M717 1868Q678 1940 638 2012Q684 1944 728 1875M714 1879Q729 1831 759 1788Q726 1829 709 1877M719 1875Q667 1838 614 1803Q664 1842 713 1883M732 1881Q850 1998 921 2149Q854 1995 740 1876M715 1870Q679 1912 662 1966Q684 1915 725 1877M718 1876Q863 1773 1003 1663Q861 1770 714 1871M708 1874Q654 2010 649 2158Q660 2012 720 1877M735 1866Q799 1816 858 1760Q793 1810 724 1854M729 1886Q755 1899 763 1928Q759 1896 738 1879M718 1867Q614 1778 497 1706Q609 1784 709 1879M728 1875Q720 1807 699 1742Q717 1807 721 1875M706 1854Q713 1817 693 1788Q710 1818 698 1857M729 1867Q844 1848 948 1797Q843 1845 727 1861M720 1890Q742 1927 750 1969Q749 1925 734 1886M704 1883Q687 1909 668 1932Q693 1914 716 1894M726 1881Q667 1897 608 1911Q669 1903 730 1893M729 1872Q774 1787 838 1715Q770 1784 720 1865M699 1889Q576 1837 446 1848Q575 1840 698 1895M725 1892Q747 1921 777 1944Q750 1919 730 1888M729 1898Q810 1790 888 1678Q805 1785 718 1889M724 1846Q713 1824 705 1802Q709 1825 714 1848M731 1891Q842 1784 912 1643Q836 1779 719 1881M714 1864Q686 1837 648 1822Q685 1839 711 1868M718 1871Q635 1789 518 1771Q631 1796 711 1885M712 1875Q742 1934 743 1998Q745 1934 718 1874M720 1872Q693 1808 653 1750Q690 1809 715 1875M733 1886Q813 1896 878 1840Q813 1893 731 1880M711 1859Q631 1847 577 1793Q629 1850 707 1864M738 1877Q868 1822 987 1744Q866 1817 734 1868M720 1872Q694 1723 691 1572Q690 1724 712 1873M731 1879Q796 2021 893 2142Q801 2018 740 1874M714 1882Q704 1918 700 1955Q709 1919 725 1885M708 1876Q646 1936 589 2000Q649 1939 713 1882M716 1873Q676 2006 630 2138Q679 2007 721 1874" fill="none" stroke="#000" stroke-width="1"/>
<circle cx="720" cy="1878" r="9" fill="#000"/>
<rect x="626.0" y="1775.0" width="190.0" height="200.0" fill="none" stroke="#000" stroke-width="2.2" />
<rect x="650.0" y="1800.0" width="141.0" height="140.0" fill="none" stroke="#000" stroke-width="2.2" />
<g transform="matrix(0.7320 -0.6814 0.6812 0.7321 672 943)" fill="none" stroke="#ee00ff" stroke-width="1.1">
<path d="M0.0 1100.0 L0.0 600.0 L0.0 170.0 L1.1 165.7 L2.5 160.0 L4.0 153.1 L5.8 145.5 L7.8 137.4 L9.9 129.1 L12.2 120.9 L14.7 113.1 L17.3 106.0 L20.0 100.0 L22.9 94.9 L26.0 90.3 L29.3 86.2 L32.8 82.4 L36.4 78.9 L40.2 75.5 L44.0 72.2 L48.0 69.0 L52.0 65.6 L56.0 62.0 L60.0 58.3 L63.9 54.5 L67.9 50.8 L71.9 47.1 L76.0 43.4 L80.3 39.7 L84.9 36.1 L89.9 32.7 L95.2 29.3 L101.0 26.0 L107.3 22.7 L114.2 19.3 L121.4 15.9 L129.0 12.5 L136.9 9.3 L144.9 6.3 L153.0 3.6 L161.1 1.2 L169.1 -0.7 L177.0 -2.0 L184.8 -2.9 L192.6 -3.4 L200.5 -3.7 L208.5 -3.5 L216.4 -3.1 L224.4 -2.2 L232.4 -1.0 L240.3 0.6 L248.2 2.6 L256.0 5.0 L263.9 7.9 L272.1 11.5 L280.4 15.6 L288.7 20.1 L296.9 24.9 L304.9 30.0 L312.6 35.1 L319.9 40.2 L326.8 45.2 L333.0 50.0 L338.6 54.7 L343.8 59.4 L348.5 64.2 L352.9 69.0 L356.9 73.9 L360.7 78.7 L364.2 83.6 L367.6 88.4 L370.8 93.2 L374.0 98.0 L376.9 102.3 L379.4 105.9 L381.6 109.1 L383.6 112.2 L385.4 115.4 L387.2 119.2 L389.1 123.7 L391.1 129.3 L393.4 136.3 L396.0 145.0 L398.9 155.6 L402.0 167.9 L405.3 181.7 L408.7 196.6 L412.2 212.2 L415.8 228.2 L419.3 244.4 L422.9 260.3 L426.5 275.6 L430.0 290.0 L433.5 304.0 L437.1 318.3 L440.8 332.6 L444.6 346.8 L448.2 360.8 L451.9 374.4 L455.4 387.5 L458.8 399.9 L462.0 411.5 L465.0 422.0 L467.7 431.4 L470.2 439.8 L472.5 447.4 L474.7 454.2 L476.8 460.5 L478.8 466.4 L480.7 472.2 L482.7 477.9 L484.8 483.8 L487.0 490.0 L489.2 496.4 L491.5 502.8 L493.7 509.2 L495.9 515.6 L498.1 521.8 L500.4 527.9 L502.7 533.8 L505.1 539.5 L507.5 544.9 L510.0 550.0 L512.5 554.7 L515.1 559.1 L517.6 563.1 L520.2 566.9 L522.8 570.5 L525.6 574.0 L528.4 577.6 L531.4 581.2 L534.6 585.0 L538.0 589.0 L541.5 593.2 L544.9 597.3 L548.4 601.5 L552.0 605.8 L555.8 610.1 L559.8 614.4 L564.2 618.9 L568.9 623.5 L574.2 628.2 L580.0 633.0 L586.6 638.2 L593.9 643.8 L601.9 649.6 L610.3 655.7 L619.0 661.7 L627.8 667.6 L636.4 673.2 L644.8 678.4 L652.7 683.1 L660.0 687.0 L666.8 690.2 L673.6 692.8 L680.1 695.0 L686.4 696.7 L692.5 698.1 L698.3 699.3 L703.8 700.4 L708.9 701.5 L713.7 702.7 L718.0 704.0 L721.8 705.3 L725.2 706.5 L728.1 707.6 L730.7 708.6 L733.0 709.6 L735.0 710.6 L736.9 711.7 L738.6 712.9 L740.3 714.3 L742.0 716.0 L743.6 718.0 L745.1 720.4 L746.3 723.1 L747.5 725.9 L748.5 728.8 L749.4 731.6 L750.2 734.2 L750.9 736.5 L751.5 738.5 L752.0 740.0 L752.0 900.0 L752.0 1100.0 Z"/>
<path d="M1.7 1097.5 L3.0 600.0 L3.0 170.0 L4.0 166.4 L5.4 160.6 L6.9 153.8 L8.7 146.2 L10.7 138.1 L12.8 129.8 L15.1 121.7 L17.5 114.0 L20.0 107.2 L22.7 101.4 L25.5 96.5 L28.4 92.1 L31.6 88.1 L35.0 84.5 L38.5 81.1 L42.2 77.8 L46.0 74.5 L49.9 71.3 L53.9 67.8 L58.0 64.2 L62.1 60.5 L66.0 56.7 L69.9 53.0 L73.9 49.3 L78.0 45.6 L82.2 42.1 L86.7 38.6 L91.5 35.1 L96.7 31.8 L102.4 28.6 L108.7 25.4 L115.5 22.0 L122.7 18.6 L130.2 15.3 L138.0 12.1 L145.9 9.1 L153.9 6.4 L161.9 4.1 L169.7 2.3 L177.4 1.0 L185.1 0.1 L192.8 -0.5 L200.6 -0.7 L208.4 -0.5 L216.2 -0.1 L224.0 0.8 L231.8 2.0 L239.6 3.5 L247.4 5.5 L255.0 7.8 L262.8 10.7 L270.8 14.2 L279.0 18.3 L287.2 22.7 L295.3 27.5 L303.3 32.5 L310.9 37.6 L318.2 42.6 L325.0 47.6 L331.1 52.3 L336.7 56.9 L341.7 61.6 L346.4 66.3 L350.6 71.0 L354.6 75.8 L358.3 80.5 L361.8 85.3 L365.1 90.1 L368.3 94.9 L371.5 99.7 L374.4 104.0 L377.0 107.6 L379.1 110.7 L381.0 113.7 L382.8 116.8 L384.5 120.4 L386.3 124.8 L388.3 130.3 L390.5 137.2 L393.1 145.8 L396.0 156.4 L399.1 168.6 L402.4 182.4 L405.8 197.2 L409.3 212.8 L412.8 228.9 L416.4 245.0 L420.0 260.9 L423.6 276.3 L427.1 290.7 L430.6 304.7 L434.2 319.0 L437.9 333.3 L441.7 347.6 L445.4 361.6 L449.0 375.2 L452.5 388.3 L455.9 400.7 L459.1 412.3 L462.1 422.8 L464.8 432.3 L467.3 440.7 L469.7 448.2 L471.8 455.1 L473.9 461.4 L475.9 467.4 L477.9 473.2 L479.9 478.9 L482.0 484.8 L484.2 491.0 L486.4 497.4 L488.6 503.8 L490.8 510.2 L493.1 516.6 L495.3 522.8 L497.6 529.0 L499.9 534.9 L502.3 540.7 L504.8 546.2 L507.3 551.4 L509.9 556.2 L512.5 560.6 L515.1 564.7 L517.7 568.6 L520.4 572.3 L523.2 575.9 L526.1 579.5 L529.1 583.1 L532.3 586.9 L535.7 590.9 L539.2 595.1 L542.6 599.2 L546.1 603.4 L549.7 607.7 L553.5 612.1 L557.6 616.5 L562.1 621.0 L566.9 625.7 L572.2 630.4 L578.1 635.3 L584.7 640.5 L592.1 646.2 L600.1 652.1 L608.6 658.1 L617.3 664.2 L626.1 670.1 L634.8 675.7 L643.2 681.0 L651.2 685.7 L658.6 689.7 L665.7 693.0 L672.5 695.7 L679.2 697.9 L685.7 699.6 L691.9 701.1 L697.7 702.3 L703.2 703.4 L708.3 704.4 L712.9 705.6 L717.1 706.9 L720.8 708.2 L724.2 709.4 L727.1 710.4 L729.6 711.4 L731.7 712.3 L733.6 713.2 L735.3 714.2 L736.8 715.3 L738.3 716.5 L739.8 718.0 L741.1 719.7 L742.4 721.8 L743.6 724.3 L744.7 727.0 L745.7 729.7 L746.5 732.4 L747.3 735.0 L748.0 737.4 L748.6 739.5 L749.0 740.0 L749.0 900.0 L751.2 1097.1 Z"/>
<path d="M8.3 1087.5 L15.0 600.0 L15.0 170.0 L15.7 169.3 L17.1 163.4 L18.6 156.5 L20.4 149.0 L22.3 141.0 L24.4 133.0 L26.6 125.1 L28.9 117.9 L31.1 111.7 L33.4 106.8 L35.6 102.8 L38.1 99.2 L40.7 95.9 L43.6 92.8 L46.7 89.8 L50.0 86.8 L53.7 83.7 L57.6 80.4 L61.8 76.9 L66.1 73.1 L70.3 69.2 L74.3 65.4 L78.1 61.7 L82.0 58.2 L85.8 54.7 L89.8 51.4 L93.9 48.2 L98.2 45.1 L102.9 42.1 L108.1 39.2 L114.1 36.1 L120.7 32.8 L127.7 29.6 L134.9 26.3 L142.4 23.3 L149.9 20.4 L157.5 17.9 L164.9 15.7 L172.1 14.0 L179.1 12.8 L186.2 12.0 L193.4 11.5 L200.6 11.3 L207.9 11.4 L215.2 11.9 L222.5 12.7 L229.7 13.8 L237.0 15.2 L244.1 17.1 L251.2 19.2 L258.3 21.9 L265.8 25.1 L273.5 28.9 L281.3 33.2 L289.1 37.8 L296.8 42.6 L304.2 47.5 L311.2 52.4 L317.8 57.2 L323.6 61.7 L328.8 66.0 L333.4 70.2 L337.7 74.5 L341.6 78.9 L345.2 83.3 L348.7 87.7 L352.0 92.3 L355.2 96.9 L358.4 101.6 L361.5 106.4 L364.6 110.8 L367.1 114.4 L369.1 117.4 L370.7 119.9 L372.1 122.4 L373.5 125.3 L375.1 129.1 L376.9 134.2 L379.1 140.8 L381.6 149.1 L384.4 159.4 L387.4 171.5 L390.7 185.1 L394.1 199.9 L397.5 215.5 L401.1 231.5 L404.7 247.7 L408.3 263.6 L411.9 279.0 L415.4 293.6 L419.0 307.7 L422.6 322.0 L426.3 336.3 L430.0 350.6 L433.8 364.7 L437.4 378.3 L440.9 391.5 L444.4 403.9 L447.6 415.5 L450.6 426.1 L453.3 435.6 L455.9 444.2 L458.2 451.8 L460.4 458.8 L462.5 465.2 L464.6 471.3 L466.6 477.1 L468.6 482.9 L470.7 488.8 L472.8 495.0 L475.1 501.3 L477.3 507.7 L479.5 514.2 L481.8 520.6 L484.0 527.0 L486.4 533.2 L488.8 539.4 L491.3 545.4 L493.9 551.3 L496.6 556.8 L499.4 562.0 L502.2 566.8 L505.0 571.3 L507.9 575.5 L510.8 579.5 L513.8 583.3 L516.8 587.1 L519.9 590.8 L523.2 594.7 L526.5 598.6 L529.9 602.7 L533.3 606.9 L536.9 611.2 L540.6 615.6 L544.6 620.1 L548.9 624.8 L553.6 629.6 L558.8 634.5 L564.4 639.5 L570.6 644.7 L577.4 650.0 L584.9 655.8 L593.1 661.8 L601.7 667.9 L610.5 674.1 L619.5 680.1 L628.4 685.9 L637.0 691.2 L645.3 696.1 L653.2 700.4 L660.9 704.0 L668.5 707.0 L675.8 709.3 L682.7 711.2 L689.3 712.8 L695.3 714.0 L700.8 715.1 L705.6 716.1 L709.7 717.1 L713.3 718.3 L716.9 719.5 L720.2 720.7 L722.9 721.6 L725.1 722.5 L726.7 723.2 L727.9 723.8 L728.7 724.3 L729.4 724.8 L730.2 725.4 L730.8 726.0 L731.3 726.6 L731.9 727.6 L732.6 729.2 L733.5 731.2 L734.3 733.5 L735.1 736.0 L735.8 738.4 L736.5 740.8 L737.2 743.2 L737.0 740.0 L737.0 900.0 L748.1 1085.5 Z"/>
<defs><clipPath id="sb"><path d="M21.0 1068.4 L38.0 600.0 L38.0 170.1 L38.0 174.8 L39.5 168.5 L41.1 161.7 L42.8 154.2 L44.6 146.6 L46.6 138.9 L48.6 131.7 L50.6 125.4 L52.4 120.4 L53.9 117.2 L55.2 115.0 L56.6 112.9 L58.2 110.9 L60.1 108.9 L62.4 106.6 L65.2 104.2 L68.5 101.3 L72.4 98.0 L76.8 94.3 L81.5 90.1 L86.0 86.0 L90.1 82.1 L93.9 78.5 L97.5 75.1 L100.9 72.1 L104.2 69.3 L107.6 66.7 L111.0 64.2 L114.7 61.9 L119.1 59.4 L124.5 56.6 L130.7 53.5 L137.2 50.5 L143.9 47.5 L150.8 44.7 L157.6 42.1 L164.3 39.8 L170.7 38.0 L176.7 36.6 L182.4 35.6 L188.3 34.9 L194.5 34.5 L200.8 34.3 L207.0 34.4 L213.3 34.8 L219.5 35.5 L225.7 36.4 L231.8 37.7 L237.9 39.2 L243.8 41.0 L249.7 43.2 L256.0 46.0 L262.9 49.3 L270.0 53.2 L277.2 57.4 L284.3 61.9 L291.2 66.5 L297.8 71.1 L304.0 75.6 L309.3 79.7 L313.7 83.3 L317.5 86.8 L320.9 90.3 L324.2 93.9 L327.3 97.7 L330.3 101.6 L333.3 105.6 L336.2 109.9 L339.2 114.3 L342.4 119.2 L345.6 123.8 L348.2 127.5 L350.0 130.1 L351.0 131.8 L351.7 133.0 L352.5 134.6 L353.6 137.3 L355.2 141.6 L357.1 147.6 L359.5 155.5 L362.2 165.2 L365.1 176.9 L368.3 190.3 L371.6 205.0 L375.1 220.5 L378.7 236.5 L382.3 252.7 L385.9 268.8 L389.5 284.4 L393.1 299.1 L396.7 313.3 L400.3 327.7 L404.1 342.1 L407.8 356.5 L411.5 370.6 L415.2 384.3 L418.8 397.5 L422.2 410.0 L425.4 421.7 L428.5 432.4 L431.3 442.1 L433.8 450.8 L436.2 458.6 L438.5 465.8 L440.7 472.5 L442.8 478.7 L444.8 484.7 L446.9 490.5 L449.0 496.5 L451.1 502.6 L453.3 508.9 L455.5 515.3 L457.8 521.7 L460.1 528.3 L462.4 534.9 L464.9 541.5 L467.5 548.0 L470.2 554.5 L473.1 561.0 L476.2 567.3 L479.3 573.2 L482.5 578.7 L485.8 583.9 L489.1 588.8 L492.4 593.3 L495.7 597.6 L499.0 601.7 L502.3 605.6 L505.6 609.5 L508.9 613.4 L512.2 617.4 L515.6 621.5 L519.2 625.9 L523.2 630.6 L527.5 635.5 L532.3 640.6 L537.5 645.9 L543.2 651.4 L549.4 657.0 L556.1 662.6 L563.3 668.2 L571.2 674.2 L579.6 680.4 L588.4 686.7 L597.5 693.1 L606.8 699.3 L616.0 705.3 L625.1 710.9 L634.0 716.1 L642.8 720.9 L651.8 725.1 L660.7 728.6 L669.2 731.4 L677.1 733.5 L684.3 735.2 L690.7 736.6 L696.2 737.7 L700.5 738.6 L703.6 739.3 L706.1 740.1 L709.3 741.2 L712.5 742.3 L714.9 743.2 L716.4 743.8 L717.1 744.1 L716.9 744.0 L716.2 743.6 L715.3 742.9 L714.6 742.3 L713.7 741.3 L712.4 739.6 L711.6 738.5 L711.6 738.5 L712.0 739.4 L712.5 740.9 L713.1 742.7 L713.7 744.9 L714.4 747.4 L715.4 750.4 L714.0 740.1 L714.0 900.0 L742.2 1063.3 Z"/></clipPath><clipPath id="sbv"><rect x="-50" y="-50" width="900" height="1025"/></clipPath></defs>
<g clip-path="url(#sbv)"><g clip-path="url(#sb)">
<path d="M1587.8 -159.0L969.7 1743.1M1577.8 -162.3L959.7 1739.8M1567.8 -165.5L949.8 1736.6M1557.8 -168.8L939.8 1733.3M1547.8 -172.0L929.8 1730.1M1537.8 -175.3L919.8 1726.9M1527.8 -178.5L909.8 1723.6M1517.9 -181.7L899.8 1720.4M1507.9 -185.0L889.8 1717.1M1497.9 -188.2L879.9 1713.9M1487.9 -191.5L869.9 1710.6M1477.9 -194.7L859.9 1707.4M1467.9 -198.0L849.9 1704.1M1457.9 -201.2L839.9 1700.9M1448.0 -204.5L829.9 1697.7M1438.0 -207.7L819.9 1694.4M1428.0 -211.0L810.0 1691.2M1418.0 -214.2L800.0 1687.9M1408.0 -217.4L790.0 1684.7M1398.0 -220.7L780.0 1681.4M1388.0 -223.9L770.0 1678.2M1378.1 -227.2L760.0 1674.9M1368.1 -230.4L750.0 1671.7M1358.1 -233.7L740.1 1668.4M1348.1 -236.9L730.1 1665.2M1338.1 -240.2L720.1 1662.0M1328.1 -243.4L710.1 1658.7M1318.1 -246.6L700.1 1655.5M1308.2 -249.9L690.1 1652.2M1298.2 -253.1L680.1 1649.0M1288.2 -256.4L670.1 1645.7M1278.2 -259.6L660.2 1642.5M1268.2 -262.9L650.2 1639.2M1258.2 -266.1L640.2 1636.0M1248.2 -269.4L630.2 1632.8M1238.3 -272.6L620.2 1629.5M1228.3 -275.8L610.2 1626.3M1218.3 -279.1L600.2 1623.0M1208.3 -282.3L590.3 1619.8M1198.3 -285.6L580.3 1616.5M1188.3 -288.8L570.3 1613.3M1178.3 -292.1L560.3 1610.0M1168.3 -295.3L550.3 1606.8M1158.4 -298.6L540.3 1603.6M1148.4 -301.8L530.3 1600.3M1138.4 -305.0L520.4 1597.1M1128.4 -308.3L510.4 1593.8M1118.4 -311.5L500.4 1590.6M1108.4 -314.8L490.4 1587.3M1098.4 -318.0L480.4 1584.1M1088.5 -321.3L470.4 1580.8M1078.5 -324.5L460.4 1577.6M1068.5 -327.8L450.5 1574.4M1058.5 -331.0L440.5 1571.1M1048.5 -334.2L430.5 1567.9M1038.5 -337.5L420.5 1564.6M1028.5 -340.7L410.5 1561.4M1018.6 -344.0L400.5 1558.1M1008.6 -347.2L390.5 1554.9M998.6 -350.5L380.6 1551.6M988.6 -353.7L370.6 1548.4M978.6 -357.0L360.6 1545.2M968.6 -360.2L350.6 1541.9M958.6 -363.5L340.6 1538.7M948.7 -366.7L330.6 1535.4M938.7 -369.9L320.6 1532.2M928.7 -373.2L310.6 1528.9M918.7 -376.4L300.7 1525.7M908.7 -379.7L290.7 1522.4M898.7 -382.9L280.7 1519.2M888.7 -386.2L270.7 1516.0M878.8 -389.4L260.7 1512.7M868.8 -392.7L250.7 1509.5M858.8 -395.9L240.7 1506.2M848.8 -399.1L230.8 1503.0M838.8 -402.4L220.8 1499.7M828.8 -405.6L210.8 1496.5M818.8 -408.9L200.8 1493.2M808.9 -412.1L190.8 1490.0M798.9 -415.4L180.8 1486.7M788.9 -418.6L170.8 1483.5M778.9 -421.9L160.9 1480.3M768.9 -425.1L150.9 1477.0M758.9 -428.3L140.9 1473.8M748.9 -431.6L130.9 1470.5M738.9 -434.8L120.9 1467.3M729.0 -438.1L110.9 1464.0M719.0 -441.3L100.9 1460.8M709.0 -444.6L91.0 1457.5M699.0 -447.8L81.0 1454.3M689.0 -451.1L71.0 1451.1M679.0 -454.3L61.0 1447.8M669.0 -457.5L51.0 1444.6M659.1 -460.8L41.0 1441.3M649.1 -464.0L31.0 1438.1M639.1 -467.3L21.1 1434.8M629.1 -470.5L11.1 1431.6M619.1 -473.8L1.1 1428.3M609.1 -477.0L-8.9 1425.1M599.1 -480.3L-18.9 1421.9M589.2 -483.5L-28.9 1418.6M579.2 -486.7L-38.9 1415.4M569.2 -490.0L-48.9 1412.1M559.2 -493.2L-58.8 1408.9M549.2 -496.5L-68.8 1405.6M539.2 -499.7L-78.8 1402.4M529.2 -503.0L-88.8 1399.1M519.3 -506.2L-98.8 1395.9M509.3 -509.5L-108.8 1392.7M499.3 -512.7L-118.8 1389.4M489.3 -516.0L-128.7 1386.2M479.3 -519.2L-138.7 1382.9M469.3 -522.4L-148.7 1379.7M459.3 -525.7L-158.7 1376.4M449.4 -528.9L-168.7 1373.2M439.4 -532.2L-178.7 1369.9M429.4 -535.4L-188.7 1366.7M419.4 -538.7L-198.6 1363.5M409.4 -541.9L-208.6 1360.2M399.4 -545.2L-218.6 1357.0M389.4 -548.4L-228.6 1353.7M379.4 -551.6L-238.6 1350.5M369.5 -554.9L-248.6 1347.2M359.5 -558.1L-258.6 1344.0M349.5 -561.4L-268.5 1340.7M339.5 -564.6L-278.5 1337.5M329.5 -567.9L-288.5 1334.2M319.5 -571.1L-298.5 1331.0M309.5 -574.4L-308.5 1327.8M299.6 -577.6L-318.5 1324.5M289.6 -580.8L-328.5 1321.3M279.6 -584.1L-338.4 1318.0M269.6 -587.3L-348.4 1314.8M259.6 -590.6L-358.4 1311.5M249.6 -593.8L-368.4 1308.3M239.6 -597.1L-378.4 1305.0M229.7 -600.3L-388.4 1301.8M219.7 -603.6L-398.4 1298.6M209.7 -606.8L-408.3 1295.3M199.7 -610.0L-418.3 1292.1M189.7 -613.3L-428.3 1288.8M179.7 -616.5L-438.3 1285.6M169.7 -619.8L-448.3 1282.3M159.8 -623.0L-458.3 1279.1M149.8 -626.3L-468.3 1275.8M139.8 -629.5L-478.3 1272.6M129.8 -632.8L-488.2 1269.4M119.8 -636.0L-498.2 1266.1M109.8 -639.2L-508.2 1262.9M99.8 -642.5L-518.2 1259.6M89.9 -645.7L-528.2 1256.4M79.9 -649.0L-538.2 1253.1M69.9 -652.2L-548.2 1249.9M59.9 -655.5L-558.1 1246.6M49.9 -658.7L-568.1 1243.4M39.9 -662.0L-578.1 1240.2M29.9 -665.2L-588.1 1236.9M19.9 -668.4L-598.1 1233.7M10.0 -671.7L-608.1 1230.4M-0.0 -674.9L-618.1 1227.2M-10.0 -678.2L-628.0 1223.9M-20.0 -681.4L-638.0 1220.7M-30.0 -684.7L-648.0 1217.4M-40.0 -687.9L-658.0 1214.2M-50.0 -691.2L-668.0 1211.0M-59.9 -694.4L-678.0 1207.7M-69.9 -697.7L-688.0 1204.5M-79.9 -700.9L-697.9 1201.2M-89.9 -704.1L-707.9 1198.0M-99.9 -707.4L-717.9 1194.7M-109.9 -710.6L-727.9 1191.5M-119.9 -713.9L-737.9 1188.2M-129.8 -717.1L-747.9 1185.0M-139.8 -720.4L-757.9 1181.7M-149.8 -723.6L-767.8 1178.5M-159.8 -726.9L-777.8 1175.3M-169.8 -730.1L-787.8 1172.0M-179.8 -733.3L-797.8 1168.8M-189.8 -736.6L-807.8 1165.5M-199.7 -739.8L-817.8 1162.3"/>
<path d="M20 80 L264 40 L119 419 L127 639 L182 975 L20 975 Z" fill="#fff" stroke="none"/>
<clipPath id="bs"><path d="M20 80 L264 40 L119 419 L127 639 L182 975 L20 975 Z"/></clipPath>
<g clip-path="url(#bs)"><path d="M880.9 -482.3L1089.9 1506.7M870.4 -481.2L1079.5 1507.8M860.0 -480.1L1069.0 1508.9M849.5 -479.0L1058.6 1510.0M839.1 -477.9L1048.2 1511.1M828.7 -476.8L1037.7 1512.2M818.2 -475.7L1027.3 1513.3M807.8 -474.6L1016.8 1514.4M797.3 -473.5L1006.4 1515.5M786.9 -472.4L995.9 1516.6M776.4 -471.4L985.5 1517.7M766.0 -470.3L975.1 1518.8M755.6 -469.2L964.6 1519.9M745.1 -468.1L954.2 1521.0M734.7 -467.0L943.7 1522.1M724.2 -465.9L933.3 1523.2M713.8 -464.8L922.8 1524.3M703.3 -463.7L912.4 1525.4M692.9 -462.6L902.0 1526.5M682.5 -461.5L891.5 1527.6M672.0 -460.4L881.1 1528.7M661.6 -459.3L870.6 1529.8M651.1 -458.2L860.2 1530.9M640.7 -457.1L849.7 1532.0M630.3 -456.0L839.3 1533.1M619.8 -454.9L828.9 1534.2M609.4 -453.8L818.4 1535.3M598.9 -452.7L808.0 1536.4M588.5 -451.6L797.5 1537.4M578.0 -450.5L787.1 1538.5M567.6 -449.4L776.7 1539.6M557.2 -448.3L766.2 1540.7M546.7 -447.2L755.8 1541.8M536.3 -446.1L745.3 1542.9M525.8 -445.0L734.9 1544.0M515.4 -443.9L724.4 1545.1M504.9 -442.8L714.0 1546.2M494.5 -441.7L703.6 1547.3M484.1 -440.6L693.1 1548.4M473.6 -439.5L682.7 1549.5M463.2 -438.4L672.2 1550.6M452.7 -437.3L661.8 1551.7M442.3 -436.2L651.3 1552.8M431.8 -435.1L640.9 1553.9M421.4 -434.0L630.5 1555.0M411.0 -432.9L620.0 1556.1M400.5 -431.8L609.6 1557.2M390.1 -430.7L599.1 1558.3M379.6 -429.6L588.7 1559.4M369.2 -428.5L578.2 1560.5M358.7 -427.4L567.8 1561.6M348.3 -426.4L557.4 1562.7M337.9 -425.3L546.9 1563.8M327.4 -424.2L536.5 1564.9M317.0 -423.1L526.0 1566.0M306.5 -422.0L515.6 1567.1M296.1 -420.9L505.1 1568.2M285.6 -419.8L494.7 1569.3M275.2 -418.7L484.3 1570.4M264.8 -417.6L473.8 1571.5M254.3 -416.5L463.4 1572.6M243.9 -415.4L452.9 1573.7M233.4 -414.3L442.5 1574.8M223.0 -413.2L432.1 1575.9M212.6 -412.1L421.6 1577.0M202.1 -411.0L411.2 1578.1M191.7 -409.9L400.7 1579.2M181.2 -408.8L390.3 1580.3M170.8 -407.7L379.8 1581.4M160.3 -406.6L369.4 1582.4M149.9 -405.5L359.0 1583.5M139.5 -404.4L348.5 1584.6M129.0 -403.3L338.1 1585.7M118.6 -402.2L327.6 1586.8M108.1 -401.1L317.2 1587.9M97.7 -400.0L306.7 1589.0M87.2 -398.9L296.3 1590.1M76.8 -397.8L285.9 1591.2M66.4 -396.7L275.4 1592.3M55.9 -395.6L265.0 1593.4M45.5 -394.5L254.5 1594.5M35.0 -393.4L244.1 1595.6M24.6 -392.3L233.6 1596.7M14.1 -391.2L223.2 1597.8M3.7 -390.1L212.8 1598.9M-6.7 -389.0L202.3 1600.0M-17.2 -387.9L191.9 1601.1M-27.6 -386.8L181.4 1602.2M-38.1 -385.7L171.0 1603.3M-48.5 -384.6L160.5 1604.4M-59.0 -383.5L150.1 1605.5M-69.4 -382.4L139.7 1606.6M-79.8 -381.4L129.2 1607.7M-90.3 -380.3L118.8 1608.8M-100.7 -379.2L108.3 1609.9M-111.2 -378.1L97.9 1611.0M-121.6 -377.0L87.4 1612.1M-132.1 -375.9L77.0 1613.2M-142.5 -374.8L66.6 1614.3M-152.9 -373.7L56.1 1615.4M-163.4 -372.6L45.7 1616.5M-173.8 -371.5L35.2 1617.6M-184.3 -370.4L24.8 1618.7M-194.7 -369.3L14.4 1619.8M-205.1 -368.2L3.9 1620.9M-215.6 -367.1L-6.5 1622.0M-226.0 -366.0L-17.0 1623.1M-236.5 -364.9L-27.4 1624.2M-246.9 -363.8L-37.9 1625.3M-257.4 -362.7L-48.3 1626.4M-267.8 -361.6L-58.7 1627.4M-278.2 -360.5L-69.2 1628.5M-288.7 -359.4L-79.6 1629.6M-299.1 -358.3L-90.1 1630.7M-309.6 -357.2L-100.5 1631.8M-320.0 -356.1L-111.0 1632.9M-330.5 -355.0L-121.4 1634.0M-340.9 -353.9L-131.8 1635.1M-351.3 -352.8L-142.3 1636.2M-361.8 -351.7L-152.7 1637.3M-372.2 -350.6L-163.2 1638.4M-382.7 -349.5L-173.6 1639.5M-393.1 -348.4L-184.1 1640.6M-403.6 -347.3L-194.5 1641.7M-414.0 -346.2L-204.9 1642.8M-424.4 -345.1L-215.4 1643.9M-434.9 -344.0L-225.8 1645.0M-445.3 -342.9L-236.3 1646.1M-455.8 -341.8L-246.7 1647.2M-466.2 -340.7L-257.2 1648.3M-476.7 -339.6L-267.6 1649.4M-487.1 -338.5L-278.0 1650.5M-497.5 -337.4L-288.5 1651.6M-508.0 -336.4L-298.9 1652.7M-518.4 -335.3L-309.4 1653.8M-528.9 -334.2L-319.8 1654.9M-539.3 -333.1L-330.3 1656.0M-549.7 -332.0L-340.7 1657.1M-560.2 -330.9L-351.1 1658.2M-570.6 -329.8L-361.6 1659.3M-581.1 -328.7L-372.0 1660.4M-591.5 -327.6L-382.5 1661.5M-602.0 -326.5L-392.9 1662.6M-612.4 -325.4L-403.3 1663.7M-622.8 -324.3L-413.8 1664.8M-633.3 -323.2L-424.2 1665.9M-643.7 -322.1L-434.7 1667.0M-654.2 -321.0L-445.1 1668.1M-664.6 -319.9L-455.6 1669.2M-675.1 -318.8L-466.0 1670.3M-685.5 -317.7L-476.4 1671.4M-695.9 -316.6L-486.9 1672.4M-706.4 -315.5L-497.3 1673.5M-716.8 -314.4L-507.8 1674.6M-727.3 -313.3L-518.2 1675.7M-737.7 -312.2L-528.7 1676.8M-748.2 -311.1L-539.1 1677.9M-758.6 -310.0L-549.5 1679.0M-769.0 -308.9L-560.0 1680.1M-779.5 -307.8L-570.4 1681.2"/></g>
<path d="M264 40 L119 419 L127 639 L182 975" />
<path d="M36 201 L95 478 L94 519 L35 644 L42 666 L156 804 L110 899"/>
</g></g>
<path d="M376 215 L280 474"/>
<path d="M330.3 199.2 L333.6 213.6 L337.0 229.0 L340.6 245.0 L344.2 261.2 L347.9 277.5 L351.6 293.4 L355.2 308.4 L358.9 322.9 L362.6 337.4 L366.3 351.9 L370.1 366.4 L373.8 380.6 L377.5 394.4 L381.1 407.7 L384.6 420.4 L387.9 432.2 L391.0 443.1 L393.8 453.1 L396.5 462.0 L399.0 470.2 L401.4 477.8 L403.7 484.7 L405.9 491.3 L408.0 497.5 L410.1 503.5 L412.2 509.4 L414.3 515.5 L416.5 521.6 L418.7 528.0 L420.9 534.6 L423.3 541.3 L425.8 548.3 L428.5 555.4 L431.3 562.6 L434.4 570.0 L437.8 577.6 L441.5 585.1 L445.3 592.2 L449.2 598.9 L453.2 605.3 L457.2 611.2 L461.2 616.7 L465.1 621.8 L468.8 626.4 L472.4 630.7 L475.8 634.7 L479.0 638.5 L482.2 642.3 L485.5 646.4 L489.4 651.0 L493.7 656.1 L498.6 661.6 L504.0 667.5 L510.1 673.7 L516.7 680.0 L524.0 686.5 L531.6 692.9 L539.5 699.1 L547.8 705.4 L556.7 711.9 L565.9 718.6 L575.5 725.2 L585.3 731.8 L595.1 738.2 L605.0 744.3 L614.8 750.1 L625.2 755.7"/>
<path d="M330.2 230.5 L333.8 246.5 L337.4 262.8 L341.1 279.0 L344.8 295.0 L348.4 310.1 L352.1 324.6 L355.8 339.1 L359.5 353.7 L363.3 368.1 L367.1 382.4 L370.8 396.2 L374.4 409.6 L377.8 422.2 L381.1 434.1 L384.2 445.0 L387.1 455.0 L389.8 464.1 L392.3 472.3 L394.7 479.9 L397.0 486.9 L399.2 493.5 L401.4 499.8 L403.5 505.8 L405.6 511.8 L407.7 517.8 L409.9 523.9 L412.1 530.3 L414.3 536.9 L416.7 543.7 L419.2 550.7 L421.9 557.9 L424.8 565.2 L428.0 572.8 L431.4 580.5 L435.2 588.3 L439.2 595.6 L443.2 602.5 L447.3 609.1 L451.5 615.2 L455.6 620.9 L459.6 626.1 L463.4 630.8 L467.0 635.2 L470.4 639.2 L473.7 643.0 L476.8 646.8 L480.1 650.8 L484.0 655.5 L488.4 660.6 L493.4 666.3 L498.9 672.3 L505.1 678.7 L512.0 685.2 L519.4 691.8 L527.2 698.3 L535.2 704.6 L543.6 711.0 L552.6 717.6 L561.9 724.3 L571.6 731.0 L581.4 737.7 L591.4 744.1 L601.4 750.3 L611.4 756.2 L622.0 761.9"/>
<path d="M30 975 H752 M30 980 H752 M20 997 H745 M20 1002 H745"/>
<path d="M45.0 1002V1076M57.7 1002V1076M70.4 1002V1076M83.1 1002V1076M95.8 1002V1076M108.5 1002V1076M121.2 1002V1076M133.8 1002V1076M146.5 1002V1076M159.2 1002V1076M171.9 1002V1076M184.6 1002V1076M197.3 1002V1076M210.0 1002V1076M222.7 1002V1076M235.4 1002V1076M248.1 1002V1076M260.8 1002V1076M273.5 1002V1076M286.2 1002V1076M298.8 1002V1076M311.5 1002V1076M324.2 1002V1076M336.9 1002V1076M349.6 1002V1076M362.3 1002V1076M375.0 1002V1076M387.7 1002V1076M400.4 1002V1076M413.1 1002V1076M425.8 1002V1076M438.5 1002V1076M451.2 1002V1076M463.8 1002V1076M476.5 1002V1076M489.2 1002V1076M501.9 1002V1076M514.6 1002V1076M527.3 1002V1076M540.0 1002V1076M552.7 1002V1076M565.4 1002V1076M578.1 1002V1076M590.8 1002V1076M603.5 1002V1076M616.2 1002V1076M628.8 1002V1076M641.5 1002V1076M654.2 1002V1076M666.9 1002V1076M679.6 1002V1076M692.3 1002V1076M705.0 1002V1076M45.0 1076H705.0"/>
<path d="M57.7 1004V1058M83.1 1004V1058M95.8 1004V1058M121.2 1004V1058M133.8 1004V1058M146.5 1004V1058M171.9 1004V1058M184.6 1004V1058M210.0 1004V1058M222.7 1004V1058M235.4 1004V1058M260.8 1004V1058M273.5 1004V1058M298.8 1004V1058M311.5 1004V1058M324.2 1004V1058M349.6 1004V1058M362.3 1004V1058M387.7 1004V1058M400.4 1004V1058M413.1 1004V1058M438.5 1004V1058M451.2 1004V1058M476.5 1004V1058M489.2 1004V1058M501.9 1004V1058M527.3 1004V1058M540.0 1004V1058M565.4 1004V1058M578.1 1004V1058M590.8 1004V1058M616.2 1004V1058M628.8 1004V1058M654.2 1004V1058M666.9 1004V1058M679.6 1004V1058" stroke-width="2.2"/>
<path d="M54.7 1002H61.7 V1060 H54.7M80.1 1002H87.1 V1060 H80.1M92.8 1002H99.8 V1060 H92.8M118.2 1002H125.2 V1060 H118.2M130.8 1002H137.8 V1060 H130.8M143.5 1002H150.5 V1060 H143.5M168.9 1002H175.9 V1060 H168.9M181.6 1002H188.6 V1060 H181.6M207.0 1002H214.0 V1060 H207.0M219.7 1002H226.7 V1060 H219.7M232.4 1002H239.4 V1060 H232.4M257.8 1002H264.8 V1060 H257.8M270.5 1002H277.5 V1060 H270.5M295.8 1002H302.8 V1060 H295.8M308.5 1002H315.5 V1060 H308.5M321.2 1002H328.2 V1060 H321.2M346.6 1002H353.6 V1060 H346.6M359.3 1002H366.3 V1060 H359.3M384.7 1002H391.7 V1060 H384.7M397.4 1002H404.4 V1060 H397.4M410.1 1002H417.1 V1060 H410.1M435.5 1002H442.5 V1060 H435.5M448.2 1002H455.2 V1060 H448.2M473.5 1002H480.5 V1060 H473.5M486.2 1002H493.2 V1060 H486.2M498.9 1002H505.9 V1060 H498.9M524.3 1002H531.3 V1060 H524.3M537.0 1002H544.0 V1060 H537.0M562.4 1002H569.4 V1060 H562.4M575.1 1002H582.1 V1060 H575.1M587.8 1002H594.8 V1060 H587.8M613.2 1002H620.2 V1060 H613.2M625.8 1002H632.8 V1060 H625.8M651.2 1002H658.2 V1060 H651.2M663.9 1002H670.9 V1060 H663.9M676.6 1002H683.6 V1060 H676.6"/>
<path d="M70.0 940 h10 v30 h-10 zM94.0 940 h10 v30 h-10 zM118.0 940 h10 v30 h-10 zM142.0 940 h10 v30 h-10 zM166.0 940 h10 v30 h-10 zM190.0 940 h10 v30 h-10 zM214.0 940 h10 v30 h-10 zM238.0 940 h10 v30 h-10 zM262.0 940 h10 v30 h-10 zM286.0 940 h10 v30 h-10 zM310.0 940 h10 v30 h-10 zM334.0 940 h10 v30 h-10 zM358.0 940 h10 v30 h-10 zM382.0 940 h10 v30 h-10 zM406.0 940 h10 v30 h-10 zM430.0 940 h10 v30 h-10 zM454.0 940 h10 v30 h-10 zM478.0 940 h10 v30 h-10 zM502.0 940 h10 v30 h-10 zM526.0 940 h10 v30 h-10 zM550.0 940 h10 v30 h-10 zM574.0 940 h10 v30 h-10 zM598.0 940 h10 v30 h-10 zM622.0 940 h10 v30 h-10 zM646.0 940 h10 v30 h-10 zM670.0 940 h10 v30 h-10 z" stroke-width="1"/>
<path d="M0 997 H20 V1100 M752 997 H745 V1100 M705 1076 L740 1096 M20 1096 H740"/>
<path d="M16 518 H632 V885 M637 524 V885"/>
<path d="M108 207 H307 V277 H108 Z M190 207 L205 242 L190 277 M225 207 L210 242 L225 277"/>
<path d="M612 827 H679 L669 905 H620 Z M646 796 L716 959"/>
<path d="M56 821 L118 827 L110 905 L92 924 Z M73 797 L195 806 L173 955 L72 952"/>
</g>
<path d="M676.1 936.4v5.5M680.2 932.6v5.5M684.3 928.8v5.5M688.4 925.0v5.5M692.5 921.1v5.5M696.6 917.3v5.5M700.7 913.5v5.5M704.8 909.7v5.5M708.9 905.9v5.5M713.0 902.0v5.5M717.1 898.2v5.5M721.3 894.4v5.5M725.4 890.6v5.5M729.5 886.8v5.5M733.6 882.9v5.5M737.7 879.1v5.5M741.8 875.3v5.5M745.9 871.5v5.5M750.0 867.7v5.5M754.1 863.8v5.5M758.2 860.0v5.5M762.3 856.2v5.5M766.4 852.4v5.5M770.5 848.5v5.5M774.6 844.7v5.5M778.7 840.9v5.5M782.8 837.1v5.5M786.9 833.3v5.5M791.0 829.4v5.5M795.1 825.6v5.5M799.2 821.8v5.5M803.3 818.0v5.5M807.4 814.2v5.5M811.6 810.3v5.5M815.7 806.5v5.5M819.8 802.7v5.5M823.9 798.9v5.5M828.0 795.1v5.5M832.1 791.2v5.5M836.2 787.4v5.5M840.3 783.6v5.5M844.4 779.8v5.5M848.5 776.0v5.5M852.6 772.1v5.5M856.7 768.3v5.5M860.8 764.5v5.5M864.9 760.7v5.5M869.0 756.8v5.5M873.1 753.0v5.5M877.2 749.2v5.5M881.3 745.4v5.5M885.4 741.6v5.5M889.5 737.7v5.5M893.6 733.9v5.5M897.7 730.1v5.5M901.9 726.3v5.5M906.0 722.5v5.5M910.1 718.6v5.5M914.2 714.8v5.5M918.3 711.0v5.5M922.4 707.2v5.5M926.5 703.4v5.5M930.6 699.5v5.5M934.7 695.7v5.5M938.8 691.9v5.5M942.9 688.1v5.5M947.0 684.2v5.5M951.1 680.4v5.5M955.2 676.6v5.5M959.3 672.8v5.5M963.4 669.0v5.5M967.5 665.1v5.5M971.6 661.3v5.5M975.7 657.5v5.5M979.8 653.7v5.5M983.9 649.9v5.5M988.0 646.0v5.5M992.1 642.2v5.5M996.3 638.4v5.5M1000.4 634.6v5.5M1004.5 630.8v5.5M1008.6 626.9v5.5M1012.7 623.1v5.5M1016.8 619.3v5.5M1020.9 615.5v5.5M1025.0 611.7v5.5M1029.1 607.8v5.5M1033.2 604.0v5.5M1037.3 600.2v5.5M1041.4 596.4v5.5M1045.5 592.5v5.5M1049.6 588.7v5.5M1053.7 584.9v5.5M1057.8 581.1v5.5M1061.9 577.3v5.5M1066.0 573.4v5.5M1070.1 569.6v5.5M1074.2 565.8v5.5M1078.3 562.0v5.5M1082.4 558.2v5.5M1086.6 554.3v5.5M1090.7 550.5v5.5M1094.8 546.7v5.5M1098.9 542.9v5.5M1103.0 539.1v5.5M1107.1 535.2v5.5M1111.2 531.4v5.5M1115.3 527.6v5.5M1119.4 523.8v5.5M1123.5 520.0v5.5M1127.6 516.1v5.5M1131.7 512.3v5.5M1135.8 508.5v5.5M1139.9 504.7v5.5M1144.0 500.8v5.5M1148.1 497.0v5.5M1152.2 493.2v5.5M1156.3 489.4v5.5M1160.4 485.6v5.5M1164.5 481.7v5.5M1168.6 477.9v5.5M1172.7 474.1v5.5M1176.9 470.3v5.5M1181.0 466.5v5.5M1185.1 462.6v5.5M1189.2 458.8v5.5M1193.3 455.0v5.5M1197.4 451.2v5.5M1201.5 447.4v5.5M1205.6 443.5v5.5M1209.7 439.7v5.5M1213.8 435.9v5.5M1217.9 432.1v5.5M1222.8 435.1h6M1226.7 439.2h6M1230.5 443.3h6M1234.3 447.4h6M1238.1 451.6h6M1242.0 455.7h6M1245.8 459.8h6M1249.6 463.9h6M1253.4 468.0h6M1257.3 472.1h6M1261.1 476.2h6M1264.9 480.3h6M1268.7 484.5h6M1272.6 488.6h6M1276.4 492.7h6M1280.2 496.8h6M1284.1 500.9h6M1287.9 505.0h6M1291.7 509.1h6M1295.5 513.2h6M1299.4 517.4h6M1303.2 521.5h6M1307.0 525.6h6M1310.8 529.7h6M1314.7 533.8h6M1318.5 537.9h6M1322.3 542.0h6M1326.1 546.1h6M1330.0 550.3h6M1333.8 554.4h6M1337.6 558.5h6M1341.4 562.6h6M1345.3 566.7h6M1349.1 570.8h6M1352.9 574.9h6M1356.8 579.0h6M1360.6 583.2h6M1364.4 587.3h6M1368.2 591.4h6M1372.1 595.5h6M1375.9 599.6h6M1379.7 603.7h6M1383.5 607.8h6M1387.4 611.9h6M1391.2 616.1h6M1395.0 620.2h6M1398.8 624.3h6M1402.7 628.4h6M1406.5 632.5h6M1410.3 636.6h6M1414.2 640.7h6M1418.0 644.8h6M1421.8 648.9h6M1425.6 653.1h6M1429.5 657.2h6M1433.3 661.3h6M1437.1 665.4h6M1440.9 669.5h6M1444.8 673.6h6M1448.6 677.7h6M1452.4 681.8h6M1456.2 686.0h6M1460.1 690.1h6M1463.9 694.2h6M1467.7 698.3h6M1471.6 702.4h6M1475.4 706.5h6M1479.2 710.6h6M1483.0 714.7h6M1486.9 718.9h6M1490.7 723.0h6M1494.5 727.1h6M1498.3 731.2h6M1502.2 735.3h6M1506.0 739.4h6M1509.8 743.5h6M1513.6 747.6h6M1517.5 751.8h6M1521.3 755.9h6M1525.1 760.0h6M1528.9 764.1h6M1532.8 768.2h6M1536.6 772.3h6M1540.4 776.4h6M1544.3 780.5h6M1548.1 784.7h6M1551.9 788.8h6M1555.7 792.9h6M1559.6 797.0h6M1563.4 801.1h6M1567.2 805.2h6M1571.0 809.3h6M1574.9 813.4h6M1578.7 817.6h6M1582.5 821.7h6M1586.3 825.8h6M1590.2 829.9h6M1594.0 834.0h6M1597.8 838.1h6M1601.7 842.2h6M1605.5 846.3h6M1609.3 850.4h6M1613.1 854.6h6M1617.0 858.7h6M1620.8 862.8h6M1624.6 866.9h6M1628.4 871.0h6M1632.3 875.1h6M1636.1 879.2h6M1639.9 883.3h6M1643.7 887.5h6M1647.6 891.6h6M1651.4 895.7h6M1655.2 899.8h6M1659.1 903.9h6M1662.9 908.0h6M1666.7 912.1h6M1670.5 916.2h6M1674.4 920.4h6M1678.2 924.5h6M1682.0 928.6h6M1685.8 932.7h6M1689.7 936.8h6M1693.5 940.9h6M1697.3 945.0h6M1701.1 949.1h6M1705.0 953.3h6M1708.8 957.4h6M1712.6 961.5h6M1716.4 965.6h6M1720.3 969.7h6M1724.1 973.8h6M1727.9 977.9h6M1731.8 982.0h6M1735.6 986.2h6M1739.4 990.3h6M1743.2 994.4h6M1747.1 998.5h6M1750.9 1002.6h6M1754.7 1006.7h6M1758.5 1010.8h6M1762.4 1014.9h6M1766.2 1019.1h6M1770.0 1023.2h6M1773.8 1027.3h6M1777.7 1031.4h6M1781.5 1035.5h6M1785.3 1039.6h6M1789.2 1043.7h6M1793.0 1047.8h6M1796.8 1051.9h6M1800.6 1056.1h6M1804.5 1060.2h6M1808.3 1064.3h6M1812.1 1068.4h6M1815.9 1072.5h6M1819.8 1076.6h6M1823.6 1080.7h6M1827.4 1084.8h6M1831.2 1089.0h6M1835.1 1093.1h6M1838.9 1097.2h6M1842.7 1101.3h6M1846.6 1105.4h6M1850.4 1109.5h6M1854.2 1113.6h6M1858.0 1117.7h6M1861.9 1121.9h6M1865.7 1126.0h6M1869.5 1130.1h6M1873.3 1134.2h6M1877.2 1138.3h6M1881.0 1142.4h6M1884.8 1146.5h6M1888.6 1150.6h6M1892.5 1154.8h6M1896.3 1158.9h6M1900.1 1163.0h6M1903.9 1167.1h6M1907.8 1171.2h6M1911.6 1175.3h6M1915.4 1179.4h6M1919.3 1183.5h6M1923.1 1187.7h6M1926.9 1191.8h6M1930.7 1195.9h6M1934.6 1200.0h6M1938.4 1204.1h6M1942.2 1208.2h6M1946.0 1212.3h6M1949.9 1216.4h6M1953.7 1220.6h6M1957.5 1224.7h6M1961.3 1228.8h6M1965.2 1232.9h6M1967.9 1238.1v5.5M1963.8 1241.9v5.5M1959.7 1245.7v5.5M1955.6 1249.5v5.5M1951.5 1253.4v5.5M1947.4 1257.2v5.5M1943.3 1261.0v5.5M1939.2 1264.8v5.5M1935.1 1268.6v5.5M1931.0 1272.5v5.5M1926.9 1276.3v5.5M1922.7 1280.1v5.5M1918.6 1283.9v5.5M1914.5 1287.7v5.5M1910.4 1291.6v5.5M1906.3 1295.4v5.5M1902.2 1299.2v5.5M1898.1 1303.0v5.5M1894.0 1306.8v5.5M1889.9 1310.7v5.5M1885.8 1314.5v5.5M1881.7 1318.3v5.5M1877.6 1322.1v5.5M1873.5 1326.0v5.5M1869.4 1329.8v5.5M1865.3 1333.6v5.5M1861.2 1337.4v5.5M1857.1 1341.2v5.5M1853.0 1345.1v5.5M1848.9 1348.9v5.5M1844.8 1352.7v5.5M1840.7 1356.5v5.5M1836.6 1360.3v5.5M1832.4 1364.2v5.5M1828.3 1368.0v5.5M1824.2 1371.8v5.5M1820.1 1375.6v5.5M1816.0 1379.4v5.5M1811.9 1383.3v5.5M1807.8 1387.1v5.5M1803.7 1390.9v5.5M1799.6 1394.7v5.5M1795.5 1398.5v5.5M1791.4 1402.4v5.5M1787.3 1406.2v5.5M1783.2 1410.0v5.5M1779.1 1413.8v5.5M1775.0 1417.7v5.5M1770.9 1421.5v5.5M1766.8 1425.3v5.5M1762.7 1429.1v5.5M1758.6 1432.9v5.5M1754.5 1436.8v5.5M1750.4 1440.6v5.5M1746.3 1444.4v5.5M1742.1 1448.2v5.5M1738.0 1452.0v5.5M1733.9 1455.9v5.5M1729.8 1459.7v5.5M1725.7 1463.5v5.5M1721.6 1467.3v5.5M1717.5 1471.1v5.5M1713.4 1475.0v5.5M1709.3 1478.8v5.5M1705.2 1482.6v5.5M1701.1 1486.4v5.5M1697.0 1490.2v5.5M1692.9 1494.1v5.5M1688.8 1497.9v5.5M1684.7 1501.7v5.5M1680.6 1505.5v5.5M1676.5 1509.4v5.5M1672.4 1513.2v5.5M1668.3 1517.0v5.5M1664.2 1520.8v5.5M1660.1 1524.6v5.5M1656.0 1528.5v5.5M1651.9 1532.3v5.5M1647.7 1536.1v5.5M1643.6 1539.9v5.5M1639.5 1543.7v5.5M1635.4 1547.6v5.5M1631.3 1551.4v5.5M1627.2 1555.2v5.5M1623.1 1559.0v5.5M1619.0 1562.8v5.5M1614.9 1566.7v5.5M1610.8 1570.5v5.5M1606.7 1574.3v5.5M1602.6 1578.1v5.5M1598.5 1582.0v5.5M1594.4 1585.8v5.5M1590.3 1589.6v5.5M1586.2 1593.4v5.5M1582.1 1597.2v5.5M1578.0 1601.1v5.5M1573.9 1604.9v5.5M1569.8 1608.7v5.5M1565.7 1612.5v5.5M1561.6 1616.3v5.5M1557.4 1620.2v5.5M1553.3 1624.0v5.5M1549.2 1627.8v5.5M1545.1 1631.6v5.5M1541.0 1635.4v5.5M1536.9 1639.3v5.5M1532.8 1643.1v5.5M1528.7 1646.9v5.5M1524.6 1650.7v5.5M1520.5 1654.5v5.5M1516.4 1658.4v5.5M1512.3 1662.2v5.5M1508.2 1666.0v5.5M1504.1 1669.8v5.5M1500.0 1673.7v5.5M1495.9 1677.5v5.5M1491.8 1681.3v5.5M1487.7 1685.1v5.5M1483.6 1688.9v5.5M1479.5 1692.8v5.5M1475.4 1696.6v5.5M1471.3 1700.4v5.5M1467.1 1704.2v5.5M1463.0 1708.0v5.5M1458.9 1711.9v5.5M1454.8 1715.7v5.5M1450.7 1719.5v5.5M1446.6 1723.3v5.5M1442.5 1727.1v5.5M1438.4 1731.0v5.5M1434.3 1734.8v5.5M1430.2 1738.6v5.5M1426.1 1742.4v5.5M1415.2 1744.9h6M1411.3 1740.8h6M1407.5 1736.7h6M1403.7 1732.6h6M1399.9 1728.4h6M1396.0 1724.3h6M1392.2 1720.2h6M1388.4 1716.1h6M1384.6 1712.0h6M1380.7 1707.9h6M1376.9 1703.8h6M1373.1 1699.7h6M1369.3 1695.5h6M1365.4 1691.4h6M1361.6 1687.3h6M1357.8 1683.2h6M1353.9 1679.1h6M1350.1 1675.0h6M1346.3 1670.9h6M1342.5 1666.8h6M1338.6 1662.6h6M1334.8 1658.5h6M1331.0 1654.4h6M1327.2 1650.3h6M1323.3 1646.2h6M1319.5 1642.1h6M1315.7 1638.0h6M1311.9 1633.9h6M1308.0 1629.7h6M1304.2 1625.6h6M1300.4 1621.5h6M1296.6 1617.4h6M1292.7 1613.3h6M1288.9 1609.2h6M1285.1 1605.1h6M1281.2 1601.0h6M1277.4 1596.8h6M1273.6 1592.7h6M1269.8 1588.6h6M1265.9 1584.5h6M1262.1 1580.4h6M1258.3 1576.3h6M1254.5 1572.2h6M1250.6 1568.1h6M1246.8 1563.9h6M1243.0 1559.8h6M1239.2 1555.7h6M1235.3 1551.6h6M1231.5 1547.5h6M1227.7 1543.4h6M1223.8 1539.3h6M1220.0 1535.2h6M1216.2 1531.1h6M1212.4 1526.9h6M1208.5 1522.8h6M1204.7 1518.7h6M1200.9 1514.6h6M1197.1 1510.5h6M1193.2 1506.4h6M1189.4 1502.3h6M1185.6 1498.2h6M1181.8 1494.0h6M1177.9 1489.9h6M1174.1 1485.8h6M1170.3 1481.7h6M1166.4 1477.6h6M1162.6 1473.5h6M1158.8 1469.4h6M1155.0 1465.3h6M1151.1 1461.1h6M1147.3 1457.0h6M1143.5 1452.9h6M1139.7 1448.8h6M1135.8 1444.7h6M1132.0 1440.6h6M1128.2 1436.5h6M1124.4 1432.4h6M1120.5 1428.2h6M1116.7 1424.1h6M1112.9 1420.0h6M1109.1 1415.9h6M1105.2 1411.8h6M1101.4 1407.7h6M1097.6 1403.6h6M1093.7 1399.5h6M1089.9 1395.3h6M1086.1 1391.2h6M1082.3 1387.1h6M1078.4 1383.0h6M1074.6 1378.9h6M1070.8 1374.8h6M1067.0 1370.7h6M1063.1 1366.6h6M1059.3 1362.4h6M1055.5 1358.3h6M1051.7 1354.2h6M1047.8 1350.1h6M1044.0 1346.0h6M1040.2 1341.9h6M1036.3 1337.8h6M1032.5 1333.7h6M1028.7 1329.6h6M1024.9 1325.4h6M1021.0 1321.3h6M1017.2 1317.2h6M1013.4 1313.1h6M1009.6 1309.0h6M1005.7 1304.9h6M1001.9 1300.8h6M998.1 1296.7h6M994.3 1292.5h6M990.4 1288.4h6M986.6 1284.3h6M982.8 1280.2h6M978.9 1276.1h6M975.1 1272.0h6M971.3 1267.9h6M967.5 1263.8h6M963.6 1259.6h6M959.8 1255.5h6M956.0 1251.4h6M952.2 1247.3h6M948.3 1243.2h6M944.5 1239.1h6M940.7 1235.0h6M936.9 1230.9h6M933.0 1226.7h6M929.2 1222.6h6M925.4 1218.5h6M921.6 1214.4h6M917.7 1210.3h6M913.9 1206.2h6M910.1 1202.1h6M906.2 1198.0h6M902.4 1193.8h6M898.6 1189.7h6M894.8 1185.6h6M890.9 1181.5h6M887.1 1177.4h6M883.3 1173.3h6M879.5 1169.2h6M875.6 1165.1h6M871.8 1160.9h6M868.0 1156.8h6M864.2 1152.7h6M860.3 1148.6h6M856.5 1144.5h6M852.7 1140.4h6M848.8 1136.3h6M845.0 1132.2h6M841.2 1128.1h6M837.4 1123.9h6M833.5 1119.8h6M829.7 1115.7h6M825.9 1111.6h6M822.1 1107.5h6M818.2 1103.4h6M814.4 1099.3h6M810.6 1095.2h6M806.8 1091.0h6M802.9 1086.9h6M799.1 1082.8h6M795.3 1078.7h6M791.4 1074.6h6M787.6 1070.5h6M783.8 1066.4h6M780.0 1062.3h6M776.1 1058.1h6M772.3 1054.0h6M768.5 1049.9h6M764.7 1045.8h6M760.8 1041.7h6M757.0 1037.6h6M753.2 1033.5h6M749.4 1029.4h6M745.5 1025.2h6M741.7 1021.1h6M737.9 1017.0h6M734.1 1012.9h6M730.2 1008.8h6M726.4 1004.7h6M722.6 1000.6h6M718.7 996.5h6M714.9 992.3h6M711.1 988.2h6M707.3 984.1h6M703.4 980.0h6M699.6 975.9h6M695.8 971.8h6M692.0 967.7h6M688.1 963.6h6M684.3 959.4h6M680.5 955.3h6M676.7 951.2h6M672.8 947.1h6" fill="none" stroke="#08a0fa" stroke-width="2.2"/>
<rect x="666.0" y="937.0" width="12.0" height="12.0" fill="none" stroke="#000" stroke-width="2" />
<rect x="1216.0" y="425.0" width="12.0" height="12.0" fill="none" stroke="#000" stroke-width="2" />
<rect x="1966.0" y="1231.0" width="12.0" height="12.0" fill="none" stroke="#000" stroke-width="2" />
<rect x="1416.0" y="1743.0" width="12.0" height="12.0" fill="none" stroke="#000" stroke-width="2" />
<circle cx="1339" cy="1194" r="32" fill="none" stroke="#33cccc" stroke-width="14"/>
<path d="M1339 1185 L1348 1194 L1339 1203 L1330 1194 Z" fill="#333"/>
<rect x="1461" y="1326" width="40" height="40" fill="none" stroke="#000" stroke-width="2"/><path d="M1461 1326 L1501 1366 M1501 1326 L1461 1366" stroke="#000" stroke-width="1.3"/>
</g></svg>
<rect x="0.0" y="235.0" width="351.0" height="1885.0" fill="#fcfcfc" />
<rect x="345.0" y="234.0" width="6.0" height="1886.0" fill="#f0f0f0" />
<rect x="0.0" y="235.0" width="350.0" height="60.0" fill="#e6e6e6" />
<text x="5.0" y="279.0" font-size="36.0" fill="#444" >Tools</text>
<path d="M257 263 h14 l-7 8 z" fill="#555"/>
<path d="M292 257 h8 M292 257 v10 h8 v-10 M288 268 h16 M296 268 v8" fill="none" stroke="#555" stroke-width="2"/>
<path d="M326 260 l13 13 M339 260 l-13 13" stroke="#555" stroke-width="2.2"/>
<rect x="1.0" y="295.5" width="348.0" height="52.0" fill="#fdfdfd" stroke="#d8d8d8" stroke-width="1.2" />
<text x="13.0" y="330.0" font-size="25.0" fill="#777" textLength="67.0" lengthAdjust="spacingAndGlyphs" >Search</text>
<circle cx="331" cy="317" r="8" fill="none" stroke="#1a5fd0" stroke-width="2.2"/><line x1="325" y1="323" x2="315" y2="334" stroke="#1a5fd0" stroke-width="2.5"/>
<rect x="341.0" y="700.0" width="4.0" height="1364.0" fill="#bdbdbd" />
<rect x="0.0" y="715.0" width="315.0" height="36.0" fill="#ececec" />
<path d="M10 446 L24 432 L24 446 Z" fill="#999"/>
<text x="32.0" y="447.0" font-size="23.0" fill="#333" font-weight="bold" textLength="200.6" lengthAdjust="spacingAndGlyphs" >Construction parts</text>
<path d="M11 726 L19 734 L11 742 Z" fill="none" stroke="#aaa" stroke-width="1.3"/>
<text x="32.0" y="742.0" font-size="23.0" fill="#111" font-weight="bold" textLength="256.7" lengthAdjust="spacingAndGlyphs" >Extended wall functions</text>
<path d="M10 778 L24 764 L24 778 Z" fill="#999"/>
<text x="32.0" y="779.0" font-size="23.0" fill="#111" font-weight="bold" textLength="257.9" lengthAdjust="spacingAndGlyphs" >Extended roof functions</text>
<path d="M10 954 L24 940 L24 954 Z" fill="#999"/>
<text x="32.0" y="955.0" font-size="23.0" fill="#333" font-weight="bold" textLength="81.0" lengthAdjust="spacingAndGlyphs" >Lay-out</text>
<path d="M10 1190 L24 1176 L24 1190 Z" fill="#999"/>
<text x="32.0" y="1191.0" font-size="23.0" fill="#333" font-weight="bold" textLength="97.2" lengthAdjust="spacingAndGlyphs" >Freeform</text>
<path d="M11 1410 L19 1418 L11 1426 Z" fill="none" stroke="#aaa" stroke-width="1.3"/>
<text x="32.0" y="1426.0" font-size="23.0" fill="#333" font-weight="bold" textLength="74.4" lengthAdjust="spacingAndGlyphs" >Terrain</text>
<path d="M10 1462 L24 1448 L24 1462 Z" fill="#999"/>
<text x="32.0" y="1463.0" font-size="23.0" fill="#333" font-weight="bold" textLength="82.3" lengthAdjust="spacingAndGlyphs" >Camera</text>
<path d="M10 1757 L24 1743 L24 1757 Z" fill="#999"/>
<text x="32.0" y="1758.0" font-size="23.0" fill="#333" font-weight="bold" textLength="109.6" lengthAdjust="spacingAndGlyphs" >Quantities</text>
<path d="M11 1918 L19 1926 L11 1934 Z" fill="none" stroke="#aaa" stroke-width="1.3"/>
<text x="32.0" y="1934.0" font-size="23.0" fill="#333" font-weight="bold" textLength="105.5" lengthAdjust="spacingAndGlyphs" >BIM Tools</text>
<path d="M11 1954 L19 1962 L11 1970 Z" fill="none" stroke="#aaa" stroke-width="1.3"/>
<text x="32.0" y="1970.0" font-size="23.0" fill="#333" font-weight="bold" textLength="138.3" lengthAdjust="spacingAndGlyphs" >3D Platforms</text>
<path d="M11 1990 L19 1998 L11 2006 Z" fill="none" stroke="#aaa" stroke-width="1.3"/>
<text x="32.0" y="2006.0" font-size="23.0" fill="#333" font-weight="bold" textLength="96.0" lengthAdjust="spacingAndGlyphs" >Drainage</text>
<path d="M11 2026 L19 2034 L11 2042 Z" fill="none" stroke="#aaa" stroke-width="1.3"/>
<text x="32.0" y="2042.0" font-size="23.0" fill="#333" font-weight="bold" textLength="221.7" lengthAdjust="spacingAndGlyphs" >Renovation planning</text>
<rect x="351.0" y="1952.0" width="2976.0" height="168.0" fill="#f0f0f0" />
<rect x="351.0" y="1952.0" width="2976.0" height="40.0" fill="#e6e6e6" />
<line x1="351.0" y1="1952.5" x2="3327.0" y2="1952.5" stroke="#cfcfcf" stroke-width="1" />
<line x1="351.0" y1="1991.5" x2="3327.0" y2="1991.5" stroke="#cfcfcf" stroke-width="1" />
<path d="M353 1953 L388 1988 L649 1988 L649 1953 Z" fill="#fafafa" stroke="#cfcfcf" stroke-width="1"/>
<path d="M408 1962 l12 -4 l14 4 v14 l-14 4 l-12 -4 z M420 1958 v22 M426 1964 h10 v14 h-10 z" fill="#ccc" stroke="#555" stroke-width="1.5"/>
<text x="455.0" y="1978.0" font-size="24.0" fill="#1a5fd0" font-weight="bold" textLength="148.0" lengthAdjust="spacingAndGlyphs" >Design model</text>
<path d="M622 1964 l14 14 M636 1964 l-14 14" stroke="#555" stroke-width="2.5"/>
<path d="M3302 1968 h20 l-10 10 z" fill="#555"/>
<rect x="360.0" y="2067.0" width="2105.0" height="40.0" fill="#fcfcfc" stroke="#d8d8d8" stroke-width="1" />
<text x="374.0" y="2097.0" font-size="22.0" fill="#555" textLength="22.0" lengthAdjust="spacingAndGlyphs" >??</text>
<rect x="2544.0" y="2012.0" width="348.0" height="46.0" fill="#f5f5f5" stroke="#d8d8d8" stroke-width="1" />
<text x="2553.0" y="2043.0" font-size="23.0" fill="#333" textLength="217.0" lengthAdjust="spacingAndGlyphs" >Construction project</text>
<path d="M2862 2032 h12 l-6 7 z" fill="#555"/>
<rect x="2855.0" y="2013.0" width="36.0" height="44.0" fill="#fafafa" />
<path d="M2867 2032 h12 l-6 7 z" fill="#555"/>
<rect x="2969.0" y="2011.0" width="348.0" height="39.0" fill="#fcfcfc" stroke="#d8d8d8" stroke-width="1" />
<text x="2974.0" y="2038.5" font-size="23.0" fill="#333" textLength="143.0" lengthAdjust="spacingAndGlyphs" >No restriction</text>
<path d="M3287 2027 h12 l-6 7 z" fill="#555"/>
<rect x="2476.0" y="2070.0" width="331.0" height="38.0" fill="#fcfcfc" stroke="#d8d8d8" stroke-width="1" />
<text x="2480.0" y="2097.0" font-size="23.0" fill="#333" >1:100</text>
<path d="M2777 2086 h12 l-6 7 z" fill="#555"/>
<rect x="2816.0" y="2070.0" width="246.0" height="38.0" fill="#fcfcfc" stroke="#d8d8d8" stroke-width="1" />
<text x="2820.0" y="2097.0" font-size="23.0" fill="#333" >cm</text>
<path d="M3032 2086 h12 l-6 7 z" fill="#555"/>
<rect x="3071.0" y="2070.0" width="246.0" height="38.0" fill="#fcfcfc" stroke="#d8d8d8" stroke-width="1" />
<text x="3075.0" y="2097.0" font-size="23.0" fill="#333" >A3</text>
<path d="M3287 2086 h12 l-6 7 z" fill="#555"/>
<rect x="3327.0" y="234.0" width="442.0" height="866.0" fill="#fff" />
<line x1="3327.5" y1="234.0" x2="3327.5" y2="2120.0" stroke="#cfcfcf" stroke-width="1" />
<rect x="3327.0" y="234.0" width="442.0" height="62.0" fill="#e6e6e6" />
<text x="3342.0" y="278.0" font-size="36.0" fill="#444" >Storey</text>
<path d="M3676 262 h14 l-7 8 z" fill="#555"/>
<path d="M3711 256 h8 M3711 256 v10 h8 v-10 M3707 267 h16 M3715 267 v8" fill="none" stroke="#555" stroke-width="2"/>
<path d="M3745 259 l13 13 M3758 259 l-13 13" stroke="#555" stroke-width="2.2"/>
<rect x="3327.0" y="296.0" width="442.0" height="66.0" fill="#f0f0f0" />
<rect x="3327.0" y="362.0" width="198.0" height="51.0" fill="#e8e8e8" />
<line x1="3393.5" y1="362.0" x2="3393.5" y2="1045.0" stroke="#d8d8d8" stroke-width="1" />
<line x1="3459.5" y1="362.0" x2="3459.5" y2="1045.0" stroke="#d8d8d8" stroke-width="1" />
<line x1="3525.5" y1="362.0" x2="3525.5" y2="1045.0" stroke="#d8d8d8" stroke-width="1" />
<line x1="3327.0" y1="413.5" x2="3525.0" y2="413.5" stroke="#d8d8d8" stroke-width="1" />
<rect x="3394.0" y="534.0" width="64.0" height="37.0" fill="#eeeeee" />
<text x="3357.0" y="484.0" font-size="25.0" fill="#222" text-anchor="middle" >2</text>
<text x="3357.0" y="523.0" font-size="25.0" fill="#222" text-anchor="middle" >1</text>
<text x="3357.0" y="563.0" font-size="25.0" fill="#222" text-anchor="middle" >0</text>
<text x="3357.0" y="603.0" font-size="25.0" fill="#222" text-anchor="middle" >-1</text>
<rect x="3327.0" y="1045.0" width="442.0" height="55.0" fill="#f0f0f0" />
<rect x="3328.0" y="1045.0" width="141.0" height="52.0" fill="#fff" stroke="#d0d0d0" stroke-width="1" />
<text x="3393.0" y="1080.0" font-size="24.0" fill="#333" textLength="64.0" lengthAdjust="spacingAndGlyphs" >Storey</text>
<text x="3531.0" y="1080.0" font-size="24.0" fill="#333" textLength="81.0" lengthAdjust="spacingAndGlyphs" >Dimen...</text>
<text x="3679.0" y="1080.0" font-size="24.0" fill="#333" textLength="72.0" lengthAdjust="spacingAndGlyphs" >Work ...</text>
<rect x="3327.0" y="1100.0" width="442.0" height="1020.0" fill="#f0f0f0" />
<line x1="3327.0" y1="1100.5" x2="3769.0" y2="1100.5" stroke="#d0d0d0" stroke-width="1" />
<rect x="3327.0" y="1102.0" width="442.0" height="62.0" fill="#e6e6e6" />
<text x="3342.0" y="1146.0" font-size="36.0" fill="#444" >Library</text>
<path d="M3676 1130 h14 l-7 8 z" fill="#555"/>
<path d="M3711 1124 h8 M3711 1124 v10 h8 v-10 M3707 1135 h16 M3715 1135 v8" fill="none" stroke="#555" stroke-width="2"/>
<path d="M3745 1127 l13 13 M3758 1127 l-13 13" stroke="#555" stroke-width="2.2"/>
<rect x="3329.0" y="1166.0" width="62.0" height="62.0" fill="#d4d4d4" stroke="#bdbdbd" stroke-width="1" />
<rect x="3329.0" y="1230.0" width="439.0" height="411.0" fill="#fff" stroke="#c8c8c8" stroke-width="1" />
<rect x="3735.0" y="1231.0" width="33.0" height="409.0" fill="#f0f0f0" />
<rect x="3748.0" y="1318.0" width="6.0" height="34.0" fill="#9a9a9a" />
<text x="3415.0" y="1318.0" font-size="24.0" fill="#222" text-anchor="middle" >Consulting</text>
<text x="3415.0" y="1349.0" font-size="24.0" fill="#222" text-anchor="middle" >cylinder.d</text>
<text x="3585.0" y="1318.0" font-size="24.0" fill="#222" text-anchor="middle" >Darts.d</text>
<text x="3415.0" y="1528.0" font-size="24.0" fill="#222" text-anchor="middle" >Deco 01.d</text>
<rect x="3509.0" y="1502.0" width="153.0" height="35.0" fill="#e8e8e8" />
<text x="3585.0" y="1528.0" font-size="24.0" fill="#222" text-anchor="middle" textLength="146.0" lengthAdjust="spacingAndGlyphs" >Grand piano.d</text>
<rect x="3329.0" y="1641.0" width="439.0" height="65.0" fill="#f0f0f0" />
<path d="M3740 1670 h22 l-11 11 z" fill="#555"/>
<rect x="3329.0" y="1706.0" width="439.0" height="358.0" fill="#fff" stroke="#c8c8c8" stroke-width="1" />
<rect x="3735.0" y="1707.0" width="33.0" height="356.0" fill="#f0f0f0" />
<rect x="3748.0" y="1859.0" width="6.0" height="76.0" fill="#9a9a9a" />
<line x1="3385" y1="1706" x2="3385" y2="2064" stroke="#999" stroke-dasharray="1 2"/>
<line x1="3419" y1="1706" x2="3419" y2="2064" stroke="#999" stroke-dasharray="1 2"/>
<rect x="3473.0" y="1845.0" width="54.0" height="34.0" fill="#ebebeb" />
<svg x="3329" y="1706" width="439" height="358" overflow="hidden"><g transform="translate(-3329 -1706)">
<line x1="3419" y1="1727" x2="3439" y2="1727" stroke="#999" stroke-dasharray="1 2"/>
<path d="M3439 1715 h12 l3 4 h14 v16 h-29 z" fill="#f8c440" stroke="#e0a820" stroke-width="1"/>
<rect x="3439" y="1722" width="29" height="13" fill="#fcd870"/>
<text x="3476.0" y="1736.0" font-size="24.0" fill="#222" >Chair</text>
<line x1="3419" y1="1761" x2="3439" y2="1761" stroke="#999" stroke-dasharray="1 2"/>
<path d="M3439 1749 h12 l3 4 h14 v16 h-29 z" fill="#f8c440" stroke="#e0a820" stroke-width="1"/>
<rect x="3439" y="1756" width="29" height="13" fill="#fcd870"/>
<text x="3476.0" y="1770.0" font-size="24.0" fill="#222" >Cupboard</text>
<line x1="3419" y1="1795" x2="3439" y2="1795" stroke="#999" stroke-dasharray="1 2"/>
<path d="M3439 1783 h12 l3 4 h14 v16 h-29 z" fill="#f8c440" stroke="#e0a820" stroke-width="1"/>
<rect x="3439" y="1790" width="29" height="13" fill="#fcd870"/>
<text x="3476.0" y="1804.0" font-size="24.0" fill="#222" >Desk</text>
<line x1="3419" y1="1829" x2="3439" y2="1829" stroke="#999" stroke-dasharray="1 2"/>
<path d="M3439 1817 h12 l3 4 h14 v16 h-29 z" fill="#f8c440" stroke="#e0a820" stroke-width="1"/>
<rect x="3439" y="1824" width="29" height="13" fill="#fcd870"/>
<text x="3476.0" y="1838.0" font-size="24.0" fill="#222" >Groups</text>
<line x1="3419" y1="1862" x2="3439" y2="1862" stroke="#999" stroke-dasharray="1 2"/>
<path d="M3439 1850 h12 l3 4 h14 v16 h-29 z" fill="#f8c440" stroke="#e0a820" stroke-width="1"/>
<rect x="3439" y="1857" width="29" height="13" fill="#fcd870"/>
<text x="3476.0" y="1871.0" font-size="24.0" fill="#222" >Misc</text>
<line x1="3419" y1="1897" x2="3439" y2="1897" stroke="#999" stroke-dasharray="1 2"/>
<path d="M3439 1885 h12 l3 4 h14 v16 h-29 z" fill="#f8c440" stroke="#e0a820" stroke-width="1"/>
<rect x="3439" y="1892" width="29" height="13" fill="#fcd870"/>
<text x="3476.0" y="1906.0" font-size="24.0" fill="#222" >Office</text>
<line x1="3419" y1="1930" x2="3439" y2="1930" stroke="#999" stroke-dasharray="1 2"/>
<path d="M3439 1918 h12 l3 4 h14 v16 h-29 z" fill="#f8c440" stroke="#e0a820" stroke-width="1"/>
<rect x="3439" y="1925" width="29" height="13" fill="#fcd870"/>
<text x="3476.0" y="1939.0" font-size="24.0" fill="#222" >Shelf</text>
<line x1="3419" y1="1965" x2="3439" y2="1965" stroke="#999" stroke-dasharray="1 2"/>
<path d="M3439 1953 h12 l3 4 h14 v16 h-29 z" fill="#f8c440" stroke="#e0a820" stroke-width="1"/>
<rect x="3439" y="1960" width="29" height="13" fill="#fcd870"/>
<text x="3476.0" y="1974.0" font-size="24.0" fill="#222" >Sideboard</text>
<line x1="3419" y1="1998" x2="3439" y2="1998" stroke="#999" stroke-dasharray="1 2"/>
<path d="M3439 1986 h12 l3 4 h14 v16 h-29 z" fill="#f8c440" stroke="#e0a820" stroke-width="1"/>
<rect x="3439" y="1993" width="29" height="13" fill="#fcd870"/>
<text x="3476.0" y="2007.0" font-size="24.0" fill="#222" >Sofa</text>
<line x1="3419" y1="2033" x2="3439" y2="2033" stroke="#999" stroke-dasharray="1 2"/>
<path d="M3439 2021 h12 l3 4 h14 v16 h-29 z" fill="#f8c440" stroke="#e0a820" stroke-width="1"/>
<rect x="3439" y="2028" width="29" height="13" fill="#fcd870"/>
<text x="3476.0" y="2042.0" font-size="24.0" fill="#222" >Table</text>
<line x1="3419" y1="2064" x2="3439" y2="2064" stroke="#999" stroke-dasharray="1 2"/>
<path d="M3439 2052 h12 l3 4 h14 v16 h-29 z" fill="#f8c440" stroke="#e0a820" stroke-width="1"/>
<rect x="3439" y="2059" width="29" height="13" fill="#fcd870"/>
<text x="3476.0" y="2073.0" font-size="24.0" fill="#222" >USM</text>
</g></svg>
<rect x="3413.0" y="1924.0" width="12.0" height="12.0" fill="#fff" stroke="#7a8cae" stroke-width="1" />
<path d="M3416 1930 h6 M3419 1927 v6" stroke="#1a3f8a" stroke-width="1.3"/>
<rect x="3326.0" y="2064.0" width="443.0" height="56.0" fill="#e6e6e6" />
<rect x="3415.5" y="2066.5" width="86.0" height="54.0" fill="#fcfcfc" stroke="#d0d0d0" stroke-width="1" />
<text x="3401.0" y="2102.0" font-size="20.0" fill="#444" text-anchor="middle" >...</text>
<text x="3489.0" y="2102.0" font-size="20.0" fill="#444" text-anchor="middle" >...</text>
<text x="3575.0" y="2102.0" font-size="20.0" fill="#444" text-anchor="middle" >...</text>
<text x="3662.0" y="2102.0" font-size="20.0" fill="#444" text-anchor="middle" >...</text>
<text x="3750.0" y="2102.0" font-size="20.0" fill="#444" text-anchor="middle" >...</text>
<rect x="3769.0" y="234.0" width="71.0" height="1926.0" fill="#e6e6e6" />
<rect x="3835.0" y="234.0" width="5.0" height="183.0" fill="#d0d0d0" />
<rect x="3835.0" y="437.0" width="5.0" height="163.0" fill="#d0d0d0" />
<rect x="3780.0" y="250.0" width="38.0" height="32.0" fill="#eee" stroke="#444" stroke-width="2" />
<rect x="3780.0" y="250.0" width="38.0" height="6.0" fill="#444" />
<circle cx="3808" cy="253" r="1.5" fill="#fff"/><circle cx="3814" cy="253" r="1.5" fill="#fff"/>
<rect x="3797.0" y="262.0" width="4.0" height="14.0" fill="#1a5fd0" />
<rect x="3797.0" y="257.0" width="4.0" height="3.0" fill="#1a5fd0" />
<text x="3790" y="293" font-size="26" fill="#444" transform="rotate(90 3790 293)" textLength="125" lengthAdjust="spacingAndGlyphs">Info window</text>
<rect x="3786.0" y="444.0" width="27.0" height="28.0" fill="#eee" stroke="#444" stroke-width="2" />
<path d="M3792 452 h1 M3792 458 h1 M3792 464 h1 M3797 452 v14 M3801 456 v10 M3805 456 v10" stroke="#444" stroke-width="2"/>
<circle cx="3811" cy="449" r="10" fill="#eee" stroke="#444" stroke-width="1.5"/><path d="M3805 446 h12 M3805 452 h12 M3809 441 v8 M3813 447 v8" stroke="#444" stroke-width="1.5"/>
<text x="3790" y="493" font-size="26" fill="#444" transform="rotate(90 3790 493)" textLength="107" lengthAdjust="spacingAndGlyphs">Properties</text>
<rect x="0.0" y="2120.0" width="3769.0" height="40.0" fill="#f0f0f0" />
<text x="5.0" y="2149.0" font-size="22.0" fill="#444" textLength="60.0" lengthAdjust="spacingAndGlyphs" >Ready</text>
<text x="3432.0" y="2149.0" font-size="22.0" fill="#444" text-anchor="middle" textLength="48.0" lengthAdjust="spacingAndGlyphs" >Z-50</text>
<text x="3514.0" y="2149.0" font-size="22.0" fill="#444" textLength="152.0" lengthAdjust="spacingAndGlyphs" >GPU 4,1GB free</text>
<text x="3680.0" y="2149.0" font-size="22.0" fill="#444" textLength="44.0" lengthAdjust="spacingAndGlyphs" >NUM</text>
<text x="3739.0" y="2149.0" font-size="22.0" fill="#bbb" textLength="26.0" lengthAdjust="spacingAndGlyphs" >UF</text>
<line x1="5.0" y1="117.0" x2="5.0" y2="162.0" stroke="#9a9a9a" stroke-width="2" stroke-dasharray="2 3"/>
<line x1="5.0" y1="180.0" x2="5.0" y2="225.0" stroke="#9a9a9a" stroke-width="2" stroke-dasharray="2 3"/>
<rect x="72.0" y="174.0" width="59.0" height="57.0" fill="#c8c8c8" />
<g transform="translate(21.0 119.0) scale(1.000)" fill="none" stroke="#4a4a4a" stroke-width="2.6" stroke-linejoin="round"><path d="M5 6 H22 L28 12 V38 H5 Z M22 6 V12 H28" fill="#fff"/><path d="M31 2 L33 8 L39 6 L35 11 L39 15 L33 14 L31 20 L29 14 L23 15 L27 11 L23 6 L29 8 Z" fill="#efd08a" stroke="#e0c060" stroke-width="1"/></g>
<g transform="translate(80.0 119.0) scale(1.000)" fill="none" stroke="#4a4a4a" stroke-width="2.6" stroke-linejoin="round"><path d="M3 17 H13 L16 20 H28 V32 H3 Z" fill="#f5dda0"/><path d="M3 34 L9 24 H38 L32 34 Z" fill="#e8c468"/><path d="M18 12 Q26 6 34 11" stroke="#1a5fd0" stroke-width="2.4"/><path d="M33 6 L36 13 L29 13 Z" fill="#1a5fd0" stroke="none"/></g>
<g transform="translate(141.0 119.0) scale(1.000)" fill="none" stroke="#4a4a4a" stroke-width="2.6" stroke-linejoin="round"><path d="M4 4 H31 L36 9 V36 H4 Z" fill="#e0e0e0" stroke="#1a5fd0"/><path d="M10 4 V14 H28 V4" stroke="#1a5fd0" fill="#fff"/><path d="M10 36 V22 H30 V36" fill="#fff" stroke="#1a5fd0"/></g>
<g transform="translate(202.0 119.0) scale(1.000)" fill="none" stroke="#4a4a4a" stroke-width="2.6" stroke-linejoin="round"><path d="M11 3 H29 V13 H11 Z" fill="#fff"/><path d="M3 13 H37 V30 H3 Z" fill="#aaa" rx="3"/><path d="M11 24 H29 V38 H11 Z" fill="#fff"/><path d="M15 30 H25 M15 34 H25" stroke-width="2"/><path d="M28 17 H33" stroke="#1a5fd0" stroke-width="2"/></g>
<g transform="translate(263.0 119.0) scale(1.000)" fill="none" stroke="#4a4a4a" stroke-width="2.6" stroke-linejoin="round"><circle cx="11" cy="10" r="8" fill="#fff" stroke-width="2"/><path d="M16 16 L24 23" stroke-width="2.6"/><path d="M18 22 H36 V34 H18 Z" fill="#aaa" stroke-width="2"/><path d="M21 17 H32 V22 M21 29 H33 V38 H21 Z" fill="#fff" stroke-width="2"/></g>
<g transform="translate(326.0 119.0) scale(1.000)" fill="none" stroke="#4a4a4a" stroke-width="2.6" stroke-linejoin="round"><path d="M3 18 H13 L16 21 H26 V33 H3 Z" fill="#f5dda0" stroke-width="2"/><path d="M3 33 L8 25 H28 L24 33 Z" fill="#e8c468" stroke-width="2"/><path d="M18 12 Q26 6 34 11" stroke="#1a5fd0" stroke-width="2.2"/><path d="M33 6 L36 13 L29 13 Z" fill="#1a5fd0" stroke="none"/><circle cx="28" cy="29" r="10" fill="#eee" stroke="#666" stroke-width="2"/><path d="M28 22 V29 L32 33" stroke="#555" stroke-width="2"/></g>
<g transform="translate(387.0 119.0) scale(1.000)" fill="none" stroke="#4a4a4a" stroke-width="2.6" stroke-linejoin="round"><path d="M4 4 H29 L34 9 V34 H4 Z" fill="#e0e0e0" stroke="#1a5fd0"/><path d="M10 4 V13 H26 V4" stroke="#1a5fd0" fill="#fff"/><path d="M10 34 V22 H24" fill="#fff" stroke="#1a5fd0"/><circle cx="28" cy="29" r="10" fill="#eee" stroke="#666" stroke-width="2"/><path d="M28 22 V29 L32 33" stroke="#555" stroke-width="2"/></g>
<g transform="translate(463.0 119.0) scale(1.000)" fill="none" stroke="#4a4a4a" stroke-width="2.6" stroke-linejoin="round"><circle cx="30" cy="11" r="4.5" stroke-width="3"/><circle cx="30" cy="29" r="4.5" stroke-width="3"/><path d="M5 14 L26 26 M5 26 L26 14" stroke-width="3.5"/></g>
<g transform="translate(525.0 119.0) scale(1.000)" fill="none" stroke="#4a4a4a" stroke-width="2.6" stroke-linejoin="round"><path d="M3 3 H21 L24 6 V31 H3 Z" fill="#fff" stroke-width="2.2"/><path d="M7 12 H15 M7 18 H15 M7 24 H15" stroke-width="2"/><path d="M16 10 H36 V38 H16 Z" fill="#fff" stroke="#1a5fd0" stroke-width="2.4"/><path d="M21 18 H31 M21 24 H31 M21 30 H31" stroke="#1a5fd0" stroke-width="2"/></g>
<g transform="translate(585.0 119.0) scale(1.000)" fill="none" stroke="#4a4a4a" stroke-width="2.6" stroke-linejoin="round"><path d="M3 7 H29 V36 H3 Z" fill="#f0dca0" stroke-width="2.4"/><path d="M10 3 H22 V9 H10 Z" fill="#ddd" stroke-width="2"/><path d="M17 17 H36 V38 H17 Z" fill="#fff" stroke="#1a5fd0" stroke-width="2.4"/><path d="M22 24 H31 M22 29 H31 M22 34 H31" stroke="#1a5fd0" stroke-width="2"/></g>
<g transform="translate(664.0 119.0) scale(1.000)" fill="none" stroke="#4a4a4a" stroke-width="2.6" stroke-linejoin="round"><path d="M11 15 H23 Q32 15 32 24 Q32 33 23 33 H14" stroke="#1a5fd0" stroke-width="4"/><path d="M3 15 L13 7 V23 Z" fill="#1a5fd0" stroke="none"/></g>
<g transform="translate(723.0 119.0) scale(1.000)" fill="none" stroke="#4a4a4a" stroke-width="2.6" stroke-linejoin="round"><path d="M29 15 H17 Q8 15 8 24 Q8 33 17 33 H26" stroke="#1a5fd0" stroke-width="4"/><path d="M37 15 L27 7 V23 Z" fill="#1a5fd0" stroke="none"/></g>
<g transform="translate(818.0 119.0) scale(1.000)" fill="none" stroke="#4a4a4a" stroke-width="2.6" stroke-linejoin="round"><rect x="3" y="4" width="34" height="30" rx="3" fill="#cfe0f5"/><path d="M20 11 V27 M12 19 H28" stroke="#1a5fd0" stroke-width="3.5"/></g>
<g transform="translate(878.0 119.0) scale(1.000)" fill="none" stroke="#4a4a4a" stroke-width="2.6" stroke-linejoin="round"><rect x="3" y="4" width="34" height="30" rx="3" fill="#cfe0f5"/><path d="M12 19 H28" stroke="#1a5fd0" stroke-width="3.5"/></g>
<g transform="translate(955.0 119.0) scale(1.000)" fill="none" stroke="#4a4a4a" stroke-width="2.6" stroke-linejoin="round"><path d="M4 26 V6 H24" stroke-dasharray="4 3" stroke-width="2.4"/><rect x="12" y="14" width="22" height="22" rx="3" fill="none"/></g>
<g transform="translate(1016.0 119.0) scale(1.000)" fill="none" stroke="#4a4a4a" stroke-width="2.6" stroke-linejoin="round"><path d="M4 26 V6 H24" stroke-width="2.4"/><path d="M4 26 Q4 6 4 6"/><rect x="13" y="14" width="22" height="22" rx="3" stroke="#1a5fd0"/></g>
<g transform="translate(1077.0 119.0) scale(1.000)" fill="none" stroke="#4a4a4a" stroke-width="2.6" stroke-linejoin="round"><path d="M20 2 L38 20 L20 38 L2 20 Z" stroke-width="2.4"/><path d="M7 12 L13 6 M27 34 L33 28" stroke-width="2"/><path d="M14 18 A7 7 0 1 0 20 12" stroke="#1a5fd0" stroke-width="2.4"/><path d="M12 12 L18 9 L16 16 Z" fill="#1a5fd0" stroke="none"/></g>
<g transform="translate(1138.0 119.0) scale(1.000)" fill="none" stroke="#4a4a4a" stroke-width="2.6" stroke-linejoin="round"><path d="M3 33 V14 L15 6 V33 Z M25 33 V6 L37 14 V33 Z" stroke-width="2.4"/><path d="M20 2 V38" stroke="#1a5fd0" stroke-width="2" stroke-dasharray="4 2"/></g>
<g transform="translate(1200.0 119.0) scale(1.000)" fill="none" stroke="#4a4a4a" stroke-width="2.6" stroke-linejoin="round"><rect x="3" y="3" width="34" height="34" rx="3" stroke-width="2.4"/><path d="M3 24 H17 V37" stroke-width="2"/><path d="M8 32 L33 8" stroke="#1a5fd0" stroke-width="2.4"/><path d="M33 8 L25 9 L32 16 Z M8 32 L9 24 L16 31 Z" fill="#1a5fd0" stroke="none"/><circle cx="20" cy="20" r="2.5" fill="#1a5fd0" stroke="none"/></g>
<g transform="translate(1260.0 119.0) scale(1.000)" fill="none" stroke="#4a4a4a" stroke-width="2.6" stroke-linejoin="round"><circle cx="20" cy="20" r="17" stroke="#1a5fd0" stroke-width="2.4" stroke-dasharray="5 3"/><rect x="9" y="14" width="8" height="14" stroke-width="2"/><path d="M24 14 L28 5 L32 14 Z" stroke-width="2"/><circle cx="28" cy="24" r="5" stroke-width="2"/></g>
<g transform="translate(1337.0 119.0) scale(1.000)" fill="none" stroke="#4a4a4a" stroke-width="2.6" stroke-linejoin="round"><rect x="4" y="6" width="22" height="30" stroke-dasharray="4 3" stroke-width="2.2"/><path d="M4 28 H14 V12" stroke-width="2"/><circle cx="14" cy="12" r="2.5" fill="#1a5fd0" stroke="none"/><path d="M29 11 H36" stroke="#1a5fd0" stroke-width="2.4"/><path d="M39 11 L33 6 V16 Z" fill="#1a5fd0" stroke="none"/></g>
<g transform="translate(1399.0 119.0) scale(1.000)" fill="none" stroke="#4a4a4a" stroke-width="2.6" stroke-linejoin="round"><path d="M2 24 H18 V38" stroke-width="2.4"/><path d="M22 24 H38 M20 2 V20" stroke="#e05a4a" stroke-width="2" stroke-dasharray="4 3"/></g>
<g transform="translate(1459.0 119.0) scale(1.000)" fill="none" stroke="#4a4a4a" stroke-width="2.6" stroke-linejoin="round"><path d="M2 24 H18 M18 4 V38" stroke-width="2.4"/><path d="M22 24 H38" stroke="#e05a4a" stroke-width="2" stroke-dasharray="4 3"/></g>
<g transform="translate(1521.0 119.0) scale(1.000)" fill="none" stroke="#4a4a4a" stroke-width="2.6" stroke-linejoin="round"><path d="M2 12 H20 M2 24 H20 M2 36 H20 M20 2 V38" stroke-width="2.4"/><path d="M24 14 H38 M24 24 H38 M24 34 H38" stroke="#e05a4a" stroke-width="2" stroke-dasharray="3 3"/></g>
<g transform="translate(1580.0 119.0) scale(1.000)" fill="none" stroke="#4a4a4a" stroke-width="2.6" stroke-linejoin="round"><path d="M28 4 L37 13 L17 33 L8 24 Z" fill="#e05a4a" stroke-width="2.2"/><path d="M8 24 L17 33 L13 37 L6 37 L3 33 Z" fill="#fff" stroke-width="2.2"/></g>
<g transform="translate(1644.0 119.0) scale(1.000)" fill="none" stroke="#4a4a4a" stroke-width="2.6" stroke-linejoin="round"><path d="M3 4 H20 M3 4 V35 H16 L30 18" stroke="#e05a4a" stroke-width="2.4"/><path d="M29 3 L36 10 L26 20 L20 20 L20 14 Z" fill="#e05a4a" stroke="#555" stroke-width="1.5"/><path d="M20 20 L26 14" stroke="#fff"/></g>
<g transform="translate(1738.0 119.0) scale(1.000)" fill="none" stroke="#4a4a4a" stroke-width="2.6" stroke-linejoin="round"><rect x="2" y="2" width="36" height="36" rx="3" stroke-width="2.4"/><path d="M4 4 L36 36 M36 4 L4 36" stroke="#bbb" stroke-width="2"/></g>
<g transform="translate(1799.0 119.0) scale(1.000)" fill="none" stroke="#4a4a4a" stroke-width="2.6" stroke-linejoin="round"><rect x="2" y="2" width="36" height="36" rx="3" stroke-width="2.4"/><path d="M20 20 L36 36 H4 Z" fill="#b0b0b0" stroke="none"/><path d="M4 4 L36 36 M36 4 L4 36" stroke="#bbb" stroke-width="2"/></g>
<g transform="translate(1860.0 119.0) scale(1.000)" fill="none" stroke="#4a4a4a" stroke-width="2.6" stroke-linejoin="round"><rect x="2" y="2" width="36" height="36" rx="3" stroke-width="2.4"/><path d="M20 20 L4 36 V4 Z" fill="#b0b0b0" stroke="none"/><path d="M4 4 L36 36 M36 4 L4 36" stroke="#bbb" stroke-width="2"/></g>
<g transform="translate(1921.0 119.0) scale(1.000)" fill="none" stroke="#4a4a4a" stroke-width="2.6" stroke-linejoin="round"><rect x="2" y="2" width="36" height="36" rx="3" stroke-width="2.4"/><path d="M20 20 L4 4 H36 Z" fill="#b0b0b0" stroke="none"/><path d="M4 4 L36 36 M36 4 L4 36" stroke="#bbb" stroke-width="2"/></g>
<g transform="translate(1982.0 119.0) scale(1.000)" fill="none" stroke="#4a4a4a" stroke-width="2.6" stroke-linejoin="round"><rect x="2" y="2" width="36" height="36" rx="3" stroke-width="2.4"/><path d="M20 20 L36 4 V36 Z" fill="#b0b0b0" stroke="none"/><path d="M4 4 L36 36 M36 4 L4 36" stroke="#bbb" stroke-width="2"/></g>
<g transform="translate(2043.0 119.0) scale(1.000)" fill="none" stroke="#4a4a4a" stroke-width="2.6" stroke-linejoin="round"><rect x="2" y="2" width="36" height="36" rx="3" stroke-width="2.4"/><path d="M5 5 L14 14 M35 5 L26 14 M5 35 L14 26 M35 35 L26 26 M17 20 H23 M20 17 V23" stroke="#aaa" stroke-width="2" stroke-dasharray="3 3"/></g>
<g transform="translate(2104.0 119.0) scale(1.000)" fill="none" stroke="#4a4a4a" stroke-width="2.6" stroke-linejoin="round"><path d="M20 1 L37 32 L20 39 L3 32 Z" fill="#d8d8d8" stroke-width="2.4"/><path d="M20 1 V39 M20 1 L37 32 L20 39 Z" fill="#b0b0b0" stroke-width="2.2"/></g>
<g transform="translate(2163.0 119.0) scale(1.000)" fill="none" stroke="#4a4a4a" stroke-width="2.6" stroke-linejoin="round"><path d="M2 10 L10 3 V7 H20 V13 H10 V17 Z" fill="#ddd" stroke="#888" stroke-width="1.8"/><rect x="18" y="18" width="20" height="20" fill="#ddd" stroke="#888" stroke-width="2"/><path d="M19 19 L37 37 M37 19 L19 37" stroke="#aaa" stroke-width="1.5"/></g>
<g transform="translate(2225.0 119.0) scale(1.000)" fill="none" stroke="#4a4a4a" stroke-width="2.6" stroke-linejoin="round"><path d="M38 10 L30 3 V7 H20 V13 H30 V17 Z" fill="#ddd" stroke="#888" stroke-width="1.8"/><rect x="2" y="18" width="20" height="20" fill="#ddd" stroke="#888" stroke-width="2"/><path d="M3 19 L21 37 M21 19 L3 37" stroke="#aaa" stroke-width="1.5"/></g>
<g transform="translate(2287.0 119.0) scale(1.000)" fill="none" stroke="#4a4a4a" stroke-width="2.6" stroke-linejoin="round"><path d="M2 10 L10 3 V7 H20 V13 H10 V17 Z" fill="#ddd" stroke="#888" stroke-width="1.8"/><rect x="12" y="17" width="20" height="16" rx="4" stroke-width="2.4"/><path d="M32 22 L38 18 V33 L32 28" stroke-width="2.4"/></g>
<g transform="translate(2348.0 119.0) scale(1.000)" fill="none" stroke="#4a4a4a" stroke-width="2.6" stroke-linejoin="round"><path d="M38 10 L30 3 V7 H20 V13 H30 V17 Z" fill="#ddd" stroke="#888" stroke-width="1.8"/><rect x="2" y="17" width="20" height="16" rx="4" stroke-width="2.4"/><path d="M22 22 L28 18 V33 L22 28" stroke-width="2.4"/></g>
<g transform="translate(2440.0 119.0) scale(1.000)" fill="none" stroke="#4a4a4a" stroke-width="2.6" stroke-linejoin="round"><path d="M3 10 V39 M8 10 V39 M3 30 H28 M3 34 H28" stroke-width="2.4"/><path d="M14 25 H24 L19 31 Z" fill="#444" stroke="none"/><rect x="20" y="2" width="12" height="12" rx="2" fill="#eee" stroke="#888" stroke-width="1.8"/><rect x="26" y="8" width="12" height="12" rx="2" fill="#dde8f8" stroke="#6a8fd0" stroke-width="1.8"/></g>
<g transform="translate(2500.0 119.0) scale(1.000)" fill="none" stroke="#4a4a4a" stroke-width="2.6" stroke-linejoin="round"><circle cx="12" cy="10" r="8" stroke-width="1.5"/><path d="M7 7 H17 M7 12 H17 M10 4 V10 M14 9 V15" stroke-width="1.5"/><path d="M27 16 V34 M20 38 H34" stroke="#1a5fd0" stroke-width="2.6"/><path d="M27 12 L22 21 H32 Z" fill="#1a5fd0" stroke="none"/></g>
<g transform="translate(2564.0 119.0) scale(1.000)" fill="none" stroke="#4a4a4a" stroke-width="2.6" stroke-linejoin="round"><circle cx="10" cy="10" r="8" stroke-width="1.5"/><path d="M5 7 H15 M5 12 H15 M8 4 V10 M12 9 V15" stroke-width="1.5"/><path d="M36 8 L27 22" stroke="#888" stroke-width="4"/><path d="M20 26 L27 20 L31 26 L26 34 Q18 36 14 30 Z" fill="#ccc" stroke-width="2"/></g>
<g transform="translate(2621.0 119.0) scale(1.000)" fill="none" stroke="#4a4a4a" stroke-width="2.6" stroke-linejoin="round"><path d="M7 20 V38 H31 V20" fill="#fff" stroke="#999" stroke-width="2"/><path d="M2 21 L19 9 L36 21 Z" fill="#f0aaa0" stroke="#e08070" stroke-width="2"/><path d="M27 9 A6 6 0 1 1 36 12" stroke="#1a5fd0" stroke-width="2.2"/><path d="M38 6 L37 14 L31 11 Z" fill="#1a5fd0" stroke="none"/></g>
<g transform="translate(2685.0 119.0) scale(1.000)" fill="none" stroke="#4a4a4a" stroke-width="2.6" stroke-linejoin="round"><rect x="2" y="4" width="20" height="6" fill="#aaa" stroke-width="2"/><path d="M7 10 V38 M17 10 V38" stroke-width="2.6"/><rect x="24" y="5" width="8" height="4" fill="#ddd" stroke="none"/><rect x="33" y="4" width="6" height="6" fill="#aaa" stroke-width="1.8"/></g>
<g transform="translate(2748.0 119.0) scale(1.000)" fill="none" stroke="#4a4a4a" stroke-width="2.6" stroke-linejoin="round"><path d="M6 24 Q6 6 22 5" stroke="#1a5fd0" stroke-width="2.6"/><path d="M24 5 H36 M6 28 V37" stroke-width="2.4"/><path d="M24 30 H38 L31 37 Z" fill="#444" stroke="none"/></g>
<g transform="translate(2810.0 119.0) scale(1.000)" fill="none" stroke="#4a4a4a" stroke-width="2.6" stroke-linejoin="round"><circle cx="28" cy="10" r="8" stroke-width="1.5"/><path d="M23 7 H33 M23 12 H33 M26 4 V10 M30 9 V15" stroke-width="1.5"/><text x="-1" y="38" font-size="22" font-weight="bold" fill="#444" stroke="none">3D</text><path d="M28 30 H40 L34 37 Z" fill="#444" stroke="none"/></g>
<g transform="translate(2871.0 119.0) scale(1.000)" fill="none" stroke="#4a4a4a" stroke-width="2.6" stroke-linejoin="round"><path d="M16 6 A4 4 0 0 1 24 6 Z" fill="#444" stroke="none"/><path d="M20 6 V10 M14 24 A8 9 0 1 1 26 24 L24 30 H16 Z" stroke-width="2.2"/><path d="M8 28 L5 31 M32 28 L35 31 M20 34 V39" stroke-width="2.2"/></g>
<g transform="translate(2930.0 119.0) scale(1.000)" fill="none" stroke="#4a4a4a" stroke-width="2.6" stroke-linejoin="round"><rect x="2" y="10" width="28" height="22" rx="5" stroke-width="2.6"/><path d="M30 17 L38 11 V31 L30 25" stroke-width="2.6"/></g>
<g transform="translate(20.0 183.0) scale(1.000)" fill="none" stroke="#4a4a4a" stroke-width="2.6" stroke-linejoin="round"><path d="M13 3 H27 L37 13 V27 L27 37 H13 L3 27 V13 Z" fill="#e05a4a" stroke-width="2.2"/><path d="M14 14 L26 26 M26 14 L14 26" stroke="#fff" stroke-width="3.5"/></g>
<g transform="translate(82.0 183.0) scale(1.000)" fill="none" stroke="#4a4a4a" stroke-width="2.6" stroke-linejoin="round"><rect x="4" y="6" width="28" height="26" stroke-dasharray="5 3.5" stroke-width="2.4"/><path d="M22 20 L36 30 L30 31 L34 38 L31 39 L27 32 L23 36 Z" fill="#444" stroke="none"/></g>
<g transform="translate(142.0 183.0) scale(1.000)" fill="none" stroke="#4a4a4a" stroke-width="2.6" stroke-linejoin="round"><path d="M3 14 L20 5 L37 14 L20 23 Z" fill="#fff" stroke-width="2.2"/><path d="M5 20 L3 22 L20 31 L37 22 L35 20 M5 28 L3 30 L20 39 L37 30 L35 28" stroke-width="2.2"/></g>
<g transform="translate(202.0 183.0) scale(1.000)" fill="none" stroke="#4a4a4a" stroke-width="2.6" stroke-linejoin="round"><rect x="3" y="7" width="34" height="26" fill="#cfe0f5" stroke-width="2.4"/></g>
<g transform="translate(263.0 183.0) scale(1.000)" fill="none" stroke="#4a4a4a" stroke-width="2.6" stroke-linejoin="round"><path d="M3 37 L14 8 L26 33 L37 8" stroke-width="2.4"/><rect x="10" y="3" width="8" height="8" stroke="#1a5fd0" stroke-width="2" fill="#fff"/><rect x="22" y="29" width="8" height="8" stroke="#1a5fd0" stroke-width="2" fill="#fff"/></g>
<g transform="translate(323.0 183.0) scale(1.000)" fill="none" stroke="#4a4a4a" stroke-width="2.6" stroke-linejoin="round"><circle cx="12" cy="11" r="9" stroke-width="1.6"/><path d="M6 8 H18 M6 13 H18 M10 4 V11 M14 10 V17" stroke-width="1.6"/><path d="M19 18 L36 32 L29 33 L33 39 L30 40 L26 34 L21 38 Z" fill="#444" stroke="none"/></g>
<g transform="translate(429.0 183.0) scale(1.000)" fill="none" stroke="#4a4a4a" stroke-width="2.6" stroke-linejoin="round"><path d="M4 6 H12 V38 H4 Z M4 14 H12 M4 30 H12" stroke-width="2.2"/><path d="M15 7 L21 5 L32 35 L26 38 Z M20 20 L25 18 M23 28 L28 26" stroke-width="2.2"/><circle cx="29" cy="10" r="8" fill="#f0f0f0" stroke-width="1.6"/><path d="M23 7 H35 M23 12 H35 M27 3 V10 M31 9 V16" stroke-width="1.6"/></g>
<g transform="translate(627.0 183.0) scale(1.000)" fill="none" stroke="#4a4a4a" stroke-width="2.6" stroke-linejoin="round"><g stroke="#ccc" stroke-width="1.6"><rect x="1" y="1" width="6" height="6"/><rect x="33" y="1" width="6" height="6"/><rect x="33" y="33" width="6" height="6"/><path d="M9 4 H31 M4 9 V31 M36 9 V31 M9 36 H31" stroke-dasharray="4 3"/></g><path d="M12 17 H22 V12 L30 20 L22 28 V23 H12 Z" fill="#ddd" stroke="#999" stroke-width="1.6"/><rect x="0" y="33" width="7" height="7" fill="#fff" stroke="#1a5fd0" stroke-width="1.8"/><circle cx="3.5" cy="36.5" r="2" fill="#444" stroke="none"/></g>
<g transform="translate(687.0 183.0) scale(1.000)" fill="none" stroke="#4a4a4a" stroke-width="2.6" stroke-linejoin="round"><g stroke="#ccc" stroke-width="1.6"><rect x="1" y="1" width="6" height="6"/><rect x="33" y="1" width="6" height="6"/><rect x="1" y="33" width="6" height="6"/><path d="M9 4 H31 M4 9 V31 M36 9 V31 M9 36 H31" stroke-dasharray="4 3"/></g><rect x="16" y="16" width="8" height="8" fill="#fff" stroke="#1a5fd0" stroke-width="1.8"/><circle cx="20" cy="20" r="2" fill="#444" stroke="none"/><path d="M31 40 L40 31 V40 Z" fill="#000" stroke="none"/></g>
<g transform="translate(2539.0 183.0) scale(1.000)" fill="none" stroke="#4a4a4a" stroke-width="2.6" stroke-linejoin="round"><path d="M3 14 L20 5 L37 14 L20 23 Z" fill="#fff" stroke-width="2.2"/><path d="M5 20 L3 22 L20 31 L37 22 L35 20 M5 28 L3 30 L20 39 L37 30 L35 28" stroke-width="2.2"/></g>
<g transform="translate(1157.0 184.0) scale(0.950)" fill="none" stroke="#4a4a4a" stroke-width="2.6" stroke-linejoin="round"><path d="M2 2 H32 L37 7 V37 H7 L2 32 Z" fill="#d8d8d8" stroke="#adadad" stroke-width="2.2"/><path d="M2 2 L7 7 H37 M7 7 V37" stroke="#adadad" stroke-width="2.2"/><text x="22" y="30" font-size="20" font-weight="bold" fill="#555" stroke="none" text-anchor="middle">?</text><path d="M28 42 L40 30 V42 Z" fill="#000" stroke="none"/></g>
<line x1="445.5" y1="114.0" x2="445.5" y2="164.0" stroke="#d0d0d0" stroke-width="1.2" />
<line x1="645.5" y1="114.0" x2="645.5" y2="164.0" stroke="#d0d0d0" stroke-width="1.2" />
<line x1="939.5" y1="114.0" x2="939.5" y2="164.0" stroke="#d0d0d0" stroke-width="1.2" />
<line x1="1321.5" y1="114.0" x2="1321.5" y2="164.0" stroke="#d0d0d0" stroke-width="1.2" />
<line x1="803.0" y1="115.0" x2="803.0" y2="163.0" stroke="#9a9a9a" stroke-width="2" stroke-dasharray="2 3"/>
<line x1="1723.0" y1="115.0" x2="1723.0" y2="163.0" stroke="#9a9a9a" stroke-width="2" stroke-dasharray="2 3"/>
<line x1="2428.0" y1="115.0" x2="2428.0" y2="163.0" stroke="#9a9a9a" stroke-width="2" stroke-dasharray="2 3"/>
<line x1="402.0" y1="178.0" x2="402.0" y2="226.0" stroke="#9a9a9a" stroke-width="2" stroke-dasharray="2 3"/>
<line x1="2521.0" y1="178.0" x2="2521.0" y2="226.0" stroke="#9a9a9a" stroke-width="2" stroke-dasharray="2 3"/>
<line x1="2947.0" y1="178.0" x2="2947.0" y2="226.0" stroke="#9a9a9a" stroke-width="2" stroke-dasharray="2 3"/>
<line x1="746.5" y1="181.0" x2="746.5" y2="228.0" stroke="#d0d0d0" stroke-width="1.2" />
<line x1="1215.5" y1="181.0" x2="1215.5" y2="228.0" stroke="#d0d0d0" stroke-width="1.2" />
<path d="M780.0 154.5 h10.0 l-5.0 6.0 z" fill="#777"/>
<path d="M1700.0 153.5 h10.0 l-5.0 6.0 z" fill="#777"/>
<path d="M2405.0 154.5 h10.0 l-5.0 6.0 z" fill="#777"/>
<path d="M2987.0 154.5 h10.0 l-5.0 6.0 z" fill="#777"/>
<path d="M381.0 213.5 h10.0 l-5.0 6.0 z" fill="#777"/>
<path d="M1674 152 h12 l-6 7 z" fill="#333"/>
<rect x="757.5" y="181.5" width="383.0" height="39.0" fill="#fcfcfc" stroke="#d8d8d8" stroke-width="1" />
<text x="762.0" y="210.0" font-size="23.0" fill="#333" textLength="148.0" lengthAdjust="spacingAndGlyphs" >Grand piano.d</text>
<path d="M1114.5 197.2 h11.0 l-5.5 6.6 z" fill="#666"/>
<rect x="1226.5" y="181.5" width="1102.0" height="46.0" fill="#f0f0f0" stroke="#d8d8d8" stroke-width="1" />
<text x="1236.0" y="210.0" font-size="23.0" fill="#333" textLength="489.0" lengthAdjust="spacingAndGlyphs" >C:\ELITECAD\Libraries17\en\Furniture 3D\Misc</text>
<rect x="2593.5" y="177.5" width="345.0" height="49.0" fill="#fcfcfc" stroke="#d8d8d8" stroke-width="1" />
<g transform="translate(2606.6 182.6) scale(0.920)" fill="none" stroke="#4a4a4a" stroke-width="2.6" stroke-linejoin="round"><path d="M2 8 H20 L14 28 Z" fill="#6a9ae0" stroke="#555" stroke-width="1.8"/><path d="M18 20 L30 5 L34 8 L22 22 Z" fill="#f0c860" stroke="#888" stroke-width="1.5"/><circle cx="23" cy="28" r="10" fill="#fff" stroke="#555" stroke-width="1.8"/><path d="M13 28 H33 M23 18 V38 M15 23 H31 M15 33 H31 M23 18 Q17 28 23 38 Q29 28 23 18" stroke="#555" stroke-width="1.3"/></g>
<text x="2661.0" y="209.0" font-size="23.0" fill="#333" textLength="95.0" lengthAdjust="spacingAndGlyphs" >Furniture</text>
<path d="M2913.5 197.2 h11.0 l-5.5 6.6 z" fill="#666"/>
<g transform="translate(18.0 356.0) scale(1.050)" fill="none" stroke="#4a4a4a" stroke-width="2.6" stroke-linejoin="round"><path d="M6 30 A7 7 0 0 1 2 18 A8 8 0 0 1 10 8 A9 9 0 0 1 26 6 A7 7 0 0 1 36 16 A7 7 0 0 1 34 30 A6 6 0 0 1 24 36 A8 8 0 0 1 12 38 A6 6 0 0 1 6 30 Z" stroke-width="2.2"/></g>
<g transform="translate(19.4 474.4) scale(0.980)" fill="none" stroke="#4a4a4a" stroke-width="2.6" stroke-linejoin="round"><path d="M3 3 H30 L36 9 V38 H9 L3 32 Z" fill="#d4d4d4"/><path d="M3 3 L9 9 H36 M9 9 V38" /></g>
<g transform="translate(78.4 474.4) scale(0.980)" fill="none" stroke="#4a4a4a" stroke-width="2.6" stroke-linejoin="round"><path d="M2 16 H22 L38 30 V35 H18 L2 21 Z" fill="#eee"/><path d="M2 16 V21 M18 30 V35 M2 16 L18 30 H38" /></g>
<g transform="translate(139.4 474.4) scale(0.980)" fill="none" stroke="#4a4a4a" stroke-width="2.6" stroke-linejoin="round"><rect x="-4" y="-4" width="48" height="48" fill="#d6d6d6" stroke="none"/><path d="M2 16 H28 L38 28 H12 Z" fill="#fff"/><path d="M7 16 H24 L30 23 H13 Z" fill="#b0b0b0" stroke-width="2"/></g>
<g transform="translate(198.4 474.4) scale(0.980)" fill="none" stroke="#4a4a4a" stroke-width="2.6" stroke-linejoin="round"><path d="M13 2 H22 L27 7 V38 H18 L13 33 Z" fill="#d4d4d4"/><path d="M13 2 L18 7 H27 M18 7 V38"/></g>
<g transform="translate(259.4 474.4) scale(0.980)" fill="none" stroke="#4a4a4a" stroke-width="2.6" stroke-linejoin="round"><path d="M2 5 H33 L38 10 V18 H8 L2 13 Z" fill="#d4d4d4"/><path d="M2 5 L8 10 H38 M8 10 V18"/></g>
<g transform="translate(19.4 534.4) scale(0.980)" fill="none" stroke="#4a4a4a" stroke-width="2.6" stroke-linejoin="round"><path d="M2 34 L14 10 H24 L38 34 H26 L19 20 L13 34 Z" fill="#f0aaa0" stroke-width="2.2"/><path d="M24 10 L12 34" stroke-width="2"/></g>
<g transform="translate(78.4 534.4) scale(0.980)" fill="none" stroke="#4a4a4a" stroke-width="2.6" stroke-linejoin="round"><rect x="4" y="4" width="34" height="34" fill="#fde3e0" stroke="none"/><path d="M2 38 L38 4"/><path d="M10 12 H28 V18 H10 Z" fill="#e05a4a" stroke-width="2"/><path d="M12 18 V30 H20" stroke-width="2"/></g>
<g transform="translate(139.4 534.4) scale(0.980)" fill="none" stroke="#4a4a4a" stroke-width="2.6" stroke-linejoin="round"><rect x="-4" y="-4" width="48" height="48" fill="#fde3e0" stroke="none"/><path d="M2 16 H28 L38 28 H12 Z" fill="#fff"/><path d="M7 16 H24 L30 23 H13 Z" fill="#b0b0b0" stroke-width="2"/></g>
<g transform="translate(198.4 534.4) scale(0.980)" fill="none" stroke="#4a4a4a" stroke-width="2.6" stroke-linejoin="round"><rect x="2" y="6" width="36" height="28" fill="#f0aaa0"/><path d="M2 6 L16 18 H24 L38 6 M2 34 L16 22 H24 L38 34 M16 18 V22 M24 18 V22" stroke-width="2"/><path d="M8 11 H32" stroke="#1a5fd0" stroke-width="2"/></g>
<g transform="translate(259.4 534.4) scale(0.980)" fill="none" stroke="#4a4a4a" stroke-width="2.6" stroke-linejoin="round"><path d="M2 36 L14 8 H26 L38 36 H30 L20 14 L10 36 Z M14 8 L4 36 M26 8 L18 36 M22 8 L14 30" stroke-width="2"/></g>
<g transform="translate(19.4 593.4) scale(0.980)" fill="none" stroke="#4a4a4a" stroke-width="2.6" stroke-linejoin="round"><path d="M5 36 L38 3 V36 Z" fill="#fde3e0" stroke="none"/><path d="M2 38 L38 4 M14 8 V26 M14 8 H22" stroke-width="2.2"/></g>
<g transform="translate(78.4 593.4) scale(0.980)" fill="none" stroke="#4a4a4a" stroke-width="2.6" stroke-linejoin="round"><rect x="0" y="0" width="40" height="40" fill="#fde3e0" stroke="none"/><rect x="0" y="20" width="40" height="20" fill="#d6d6d6" stroke="none"/><rect x="10" y="2" width="20" height="36" fill="#cfe0f5"/><path d="M20 2 V38"/></g>
<g transform="translate(139.4 593.4) scale(0.980)" fill="none" stroke="#4a4a4a" stroke-width="2.6" stroke-linejoin="round"><rect x="2" y="2" width="36" height="36" fill="#cfe0f5"/><path d="M14 2 V38 M26 2 V38 M2 14 H38 M2 26 H38"/></g>
<g transform="translate(198.4 593.4) scale(0.980)" fill="none" stroke="#4a4a4a" stroke-width="2.6" stroke-linejoin="round"><path d="M10 36 V3 H30 V36 M2 38 H38" stroke-width="2.2"/><path d="M16 20 H19" stroke-width="2"/></g>
<g transform="translate(259.4 593.4) scale(0.980)" fill="none" stroke="#4a4a4a" stroke-width="2.6" stroke-linejoin="round"><rect x="0" y="0" width="40" height="40" fill="#d6d6d6" stroke="none"/><path d="M8 6 H32 V34 H8 Z M26 6 V34 M26 30 L32 34" fill="#fff" stroke-width="2.4"/></g>
<g transform="translate(19.4 654.4) scale(0.980)" fill="none" stroke="#4a4a4a" stroke-width="2.6" stroke-linejoin="round"><path d="M2 36 V14 H8 V20 H15 V25 H22 V30 H29 V34 H38 V37 H2 Z" fill="#d4d4d4" stroke-width="2.2"/></g>
<g transform="translate(78.4 654.4) scale(0.980)" fill="none" stroke="#4a4a4a" stroke-width="2.6" stroke-linejoin="round"><path d="M2 37 V18 H8 V23 H15 V27 H22 V31 H29 V34 H38 V37 Z" fill="#d4d4d4" stroke-width="2.2"/><path d="M2 8 L8 2 L36 18 V36" stroke="#1a5fd0" stroke-width="2.2"/></g>
<g transform="translate(139.4 654.4) scale(0.980)" fill="none" stroke="#4a4a4a" stroke-width="2.6" stroke-linejoin="round"><path d="M2 2 H38 V38 H26 V30 Q26 22 20 22 Q14 22 14 30 V38 H2 Z" fill="#f0f0f0" stroke-width="2.4"/></g>
<g transform="translate(198.4 654.4) scale(0.980)" fill="none" stroke="#4a4a4a" stroke-width="2.6" stroke-linejoin="round"><path d="M2 2 H38 V38 H26 V30 Q26 22 20 22 Q14 22 14 30 V38 H2 Z" fill="#f0f0f0" stroke-width="2.4"/><text x="14" y="20" font-size="18" font-weight="bold" fill="#1a5fd0" stroke="none">&#931;</text></g>
<g transform="translate(259.4 654.4) scale(0.980)" fill="none" stroke="#4a4a4a" stroke-width="2.6" stroke-linejoin="round"><path d="M2 2 H38 V38 H26 V30 Q26 22 20 22 Q14 22 14 30 V38 H2 Z" fill="#f0f0f0" stroke-width="2.4"/><path d="M2 12 H38" stroke="#1a5fd0" stroke-width="3"/></g>
<g transform="translate(19.4 808.4) scale(0.980)" fill="none" stroke="#4a4a4a" stroke-width="2.6" stroke-linejoin="round"><rect x="2" y="6" width="36" height="28" fill="#f0aaa0"/><path d="M2 6 L18 20 L2 34 Z" fill="#e05a4a" stroke="none"/><path d="M2 20 H38" stroke-width="2"/></g>
<g transform="translate(78.4 808.4) scale(0.980)" fill="none" stroke="#4a4a4a" stroke-width="2.6" stroke-linejoin="round"><rect x="2" y="6" width="36" height="28" fill="#f0aaa0"/><path d="M2 6 L16 18 H24 L38 6 M2 34 L16 22 H24 L38 34 M16 18 V22 M24 18 V22" stroke-width="2"/><path d="M8 11 H32" stroke="#1a5fd0" stroke-width="2"/></g>
<g transform="translate(139.4 808.4) scale(0.980)" fill="none" stroke="#4a4a4a" stroke-width="2.6" stroke-linejoin="round"><path d="M8 20 H22 L30 38 H16 Z" fill="#fde3e0" stroke="none"/><path d="M2 8 H14 L22 22 H10 Z" fill="#b0b0b0" stroke="#999" stroke-width="2"/><path d="M12 38 L22 22 L30 38 M22 22 L12 38" stroke="#f0aaa0" stroke-width="2.4"/><circle cx="30" cy="8" r="3.5" stroke-width="2"/><circle cx="30" cy="18" r="3.5" stroke-width="2"/><path d="M20 6 L36 16 M20 14 L36 8" stroke-width="2"/></g>
<g transform="translate(198.4 808.4) scale(0.980)" fill="none" stroke="#4a4a4a" stroke-width="2.6" stroke-linejoin="round"><path d="M8 20 H22 L30 38 H16 Z" fill="#fde3e0" stroke="none"/><path d="M2 8 H14 L22 22 H10 Z" fill="#b0b0b0" stroke="#999" stroke-width="2"/><path d="M12 38 L22 22 L30 38 M22 22 L12 38" stroke="#f0aaa0" stroke-width="2.4"/><circle cx="32" cy="8" r="7" fill="#fff" stroke-width="1.5"/><path d="M32 6 V12 M32 3 V4" stroke="#1a5fd0" stroke-width="2.4"/></g>
<g transform="translate(259.4 808.4) scale(0.980)" fill="none" stroke="#4a4a4a" stroke-width="2.6" stroke-linejoin="round"><path d="M8 20 H22 L30 38 H16 Z" fill="#fde3e0" stroke="none"/><path d="M2 8 H14 L22 22 H10 Z" fill="#b0b0b0" stroke="#999" stroke-width="2"/><path d="M12 38 L22 22 L30 38 M22 22 L12 38" stroke="#f0aaa0" stroke-width="2.4"/><path d="M24 18 L34 4 L38 8 L28 20 Z" fill="#e05a4a" stroke="#fff" stroke-width="1.5"/></g>
<g transform="translate(19.4 866.4) scale(0.980)" fill="none" stroke="#4a4a4a" stroke-width="2.6" stroke-linejoin="round"><path d="M10 2 H24 L36 20 H26 L17 8 L8 20 H2 Z" fill="#f0aaa0" stroke-width="2"/><path d="M2 26 H24 L36 36 H14 Z" stroke-width="2"/><path d="M18 28 L28 34" stroke="#1a5fd0" stroke-width="3"/></g>
<g transform="translate(78.4 866.4) scale(0.980)" fill="none" stroke="#4a4a4a" stroke-width="2.6" stroke-linejoin="round"><rect x="2" y="12" width="34" height="24" fill="#f0aaa0" stroke-width="2"/><path d="M2 12 L19 26 L36 12" stroke-width="2"/><text x="4" y="40" font-size="20" font-weight="bold" fill="#1a5fd0" stroke="none">Z</text><circle cx="32" cy="8" r="7" fill="#fff" stroke-width="1.5"/><path d="M32 6 V12 M32 3 V4" stroke="#1a5fd0" stroke-width="2.4"/></g>
<g transform="translate(19.4 982.4) scale(0.980)" fill="none" stroke="#4a4a4a" stroke-width="2.6" stroke-linejoin="round"><text x="20" y="37" font-size="40" font-weight="bold" fill="#444" stroke="none" text-anchor="middle">A</text></g>
<g transform="translate(78.4 982.4) scale(0.980)" fill="none" stroke="#4a4a4a" stroke-width="2.6" stroke-linejoin="round"><path d="M2 2 V38 M20 2 V38 M38 2 V38 M4 10 H18 M22 10 H36" stroke-width="2"/><path d="M4 10 l5 -3 v6 z M18 10 l-5 -3 v6 z M22 10 l5 -3 v6 z M36 10 l-5 -3 v6 z" fill="#444" stroke="none"/></g>
<g transform="translate(139.4 982.4) scale(0.980)" fill="none" stroke="#4a4a4a" stroke-width="2.6" stroke-linejoin="round"><g stroke-width="2.2"><path d="M2 12 L12 2 M2 22 L22 2 M2 32 L32 2 M4 40 L40 4 M14 40 L40 14 M24 40 L40 24 M34 40 L40 34"/></g></g>
<g transform="translate(198.4 982.4) scale(0.980)" fill="none" stroke="#4a4a4a" stroke-width="2.6" stroke-linejoin="round"><rect x="8" y="8" width="24" height="24" fill="#fff" stroke="#1a5fd0" stroke-width="2.2"/><path d="M2 20 H8 M32 20 H38 M12 2 L14 8 M20 2 V8 M28 2 L26 8 M12 38 L14 32 M28 38 L26 32" stroke-width="2"/></g>
<g transform="translate(259.4 982.4) scale(0.980)" fill="none" stroke="#4a4a4a" stroke-width="2.6" stroke-linejoin="round"><rect x="18" y="14" width="20" height="24" fill="#fff" stroke-width="2"/><path d="M24 22 H34 M24 28 H34 M24 34 H34" stroke-width="1.8"/><rect x="2" y="2" width="22" height="20" fill="#444" stroke="none"/><text x="13" y="19" font-size="16" fill="#fff" stroke="none" text-anchor="middle">A</text></g>
<g transform="translate(19.4 1040.4) scale(0.980)" fill="none" stroke="#4a4a4a" stroke-width="2.6" stroke-linejoin="round"><path d="M2 12 H14 L32 28" stroke-width="2"/><path d="M36 32 L26 30 L32 24 Z" fill="#444" stroke="none"/></g>
<g transform="translate(78.4 1040.4) scale(0.980)" fill="none" stroke="#4a4a4a" stroke-width="2.6" stroke-linejoin="round"><text x="20" y="18" font-size="17" font-weight="bold" fill="#444" stroke="none" text-anchor="middle">+0.0</text><path d="M9 22 H31 L20 34 Z" fill="#444" stroke="none"/><path d="M6 38 H34" stroke-width="2.4"/></g>
<g transform="translate(139.4 1040.4) scale(0.980)" fill="none" stroke="#4a4a4a" stroke-width="2.6" stroke-linejoin="round"><text x="28" y="14" font-size="13" font-weight="bold" fill="#444" stroke="none" text-anchor="middle">+0.1</text><circle cx="14" cy="26" r="9" stroke-width="2"/><path d="M14 26 V17 A9 9 0 0 1 23 26 Z M14 26 V35 A9 9 0 0 1 5 26 Z" fill="#444" stroke="none"/><path d="M2 26 H26 M14 14 V38" stroke-width="1.8"/></g>
<g transform="translate(198.4 1040.4) scale(0.980)" fill="none" stroke="#4a4a4a" stroke-width="2.6" stroke-linejoin="round"><circle cx="20" cy="20" r="17" stroke-width="2"/><path d="M6 20 H34" stroke-width="2"/><path d="M4 20 l6 -4 v8 z M36 20 l-6 -4 v8 z" fill="#444" stroke="none"/></g>
<g transform="translate(259.4 1040.4) scale(0.980)" fill="none" stroke="#4a4a4a" stroke-width="2.6" stroke-linejoin="round"><path d="M2 14 Q26 14 30 38 M20 18 L36 4" stroke-width="2"/><path d="M20 18 l2 -7 l5 5 z" fill="#444" stroke="none"/></g>
<g transform="translate(19.4 1101.4) scale(0.980)" fill="none" stroke="#4a4a4a" stroke-width="2.6" stroke-linejoin="round"><path d="M2 4 V14 M4 6 Q30 8 32 36 M10 14 Q24 18 26 36 M22 38 H38" stroke-width="2"/><path d="M4 6 l6 -3 v7 z M32 36 l-4 -6 h8 z" fill="#444" stroke="none"/></g>
<g transform="translate(78.4 1101.4) scale(0.980)" fill="none" stroke="#4a4a4a" stroke-width="2.6" stroke-linejoin="round"><path d="M2 38 L28 8 M2 38 H38 M22 16 Q32 26 30 34" stroke-width="2"/><path d="M22 16 l7 1 l-4 5 z M30 34 l-5 -3 l6 -3 z" fill="#444" stroke="none"/></g>
<g transform="translate(139.4 1101.4) scale(0.980)" fill="none" stroke="#4a4a4a" stroke-width="2.6" stroke-linejoin="round"><path d="M2 16 H32 M34 2 V38" stroke-width="2"/><path d="M32 16 l-7 -4 v8 z" fill="#444" stroke="none"/></g>
<g transform="translate(198.4 1101.4) scale(0.980)" fill="none" stroke="#4a4a4a" stroke-width="2.6" stroke-linejoin="round"><path d="M2 2 V38 M38 2 V20 M28 22 V38 M4 10 H36 M4 30 H26" stroke-width="2"/><path d="M4 10 l6 -3 v6 z M36 10 l-6 -3 v6 z M4 30 l6 -3 v6 z M26 30 l-6 -3 v6 z" fill="#444" stroke="none"/></g>
<g transform="translate(259.4 1101.4) scale(0.980)" fill="none" stroke="#4a4a4a" stroke-width="2.6" stroke-linejoin="round"><path d="M8 20 H38" stroke-width="2"/><path d="M4 20 l8 -5 v10 z" fill="#444" stroke="none"/></g>
<g transform="translate(19.4 1216.4) scale(0.980)" fill="none" stroke="#4a4a4a" stroke-width="2.6" stroke-linejoin="round"><path d="M2 18 H24 L38 28 H16 Z" fill="#eee" stroke-width="2"/></g>
<g transform="translate(78.4 1216.4) scale(0.980)" fill="none" stroke="#4a4a4a" stroke-width="2.6" stroke-linejoin="round"><path d="M2 8 L8 4 H24 L22 14 L34 16 L38 20 V38 H18 L2 32 Z" fill="#d4d4d4" stroke-width="2.2"/><path d="M2 8 L18 14 V38 M18 14 H24" stroke-width="2"/></g>
<g transform="translate(139.4 1216.4) scale(0.980)" fill="none" stroke="#4a4a4a" stroke-width="2.6" stroke-linejoin="round"><path d="M2 8 L8 4 H24 L22 14 L34 16 L38 20 V38 H18 L2 32 Z" fill="#b0b0b0" stroke-width="2.2"/><path d="M2 8 L18 14 V38 M18 14 H38" stroke-width="2"/><path d="M2 8 L18 14 V38 L2 32 Z" fill="#d4d4d4" stroke-width="2"/></g>
<g transform="translate(198.4 1216.4) scale(0.980)" fill="none" stroke="#4a4a4a" stroke-width="2.6" stroke-linejoin="round"><path d="M2 24 Q2 6 20 6 Q38 6 38 24 V32 H28 V26 Q28 18 20 18 Q12 18 12 26 V32 H2 Z" fill="#d4d4d4" stroke-width="2.2"/><ellipse cx="20" cy="16" rx="9" ry="4" fill="#999" stroke="none"/><path d="M20 0 V40" stroke="#1a5fd0" stroke-width="2"/></g>
<g transform="translate(259.4 1216.4) scale(0.980)" fill="none" stroke="#4a4a4a" stroke-width="2.6" stroke-linejoin="round"><path d="M2 24 Q2 6 20 6 Q38 6 38 24 V32 H28 V26 Q28 18 20 18 Q12 18 12 26 V32 H2 Z" fill="#d4d4d4" stroke-width="2.2"/><ellipse cx="20" cy="16" rx="9" ry="4" fill="#999" stroke="none"/><path d="M20 0 V40" stroke="#1a5fd0" stroke-width="2"/></g>
<g transform="translate(19.4 1275.4) scale(0.980)" fill="none" stroke="#4a4a4a" stroke-width="2.6" stroke-linejoin="round"><path d="M2 8 L10 4 H26 Q34 8 36 16 V30 H24 V22 Q20 16 12 16 H2 Z" fill="#b0b0b0" stroke-width="2"/><path d="M10 12 H24 Q32 14 34 22 H26" stroke="#1a5fd0" stroke-width="2.4"/><rect x="24" y="22" width="14" height="14" fill="#fff" stroke="#1a5fd0" stroke-width="2.2"/></g>
<g transform="translate(78.4 1275.4) scale(0.980)" fill="none" stroke="#4a4a4a" stroke-width="2.6" stroke-linejoin="round"><path d="M2 12 L8 6 H20 Q32 6 34 18 L26 28 Q24 18 12 20 H2 Z" fill="#b0b0b0" stroke-width="2"/><path d="M4 12 V22 Q14 14 24 22" stroke="#1a5fd0" stroke-width="2.4"/><circle cx="30" cy="26" r="7" fill="#d8e4f8" stroke="#1a5fd0" stroke-width="2.2"/></g>
<g transform="translate(139.4 1275.4) scale(0.980)" fill="none" stroke="#4a4a4a" stroke-width="2.6" stroke-linejoin="round"><path d="M2 20 Q16 2 32 8 Q36 20 36 32 Q28 20 12 26 Z" fill="#ddd" stroke-width="2.2"/><path d="M14 14 Q24 14 28 30" stroke="#fff" stroke-width="2"/></g>
<g transform="translate(198.4 1275.4) scale(0.980)" fill="none" stroke="#4a4a4a" stroke-width="2.6" stroke-linejoin="round"><path d="M20 0 V40 M0 20 H40" stroke-width="2"/><rect x="4" y="2" width="10" height="12" stroke="#1a5fd0" stroke-width="2"/><rect x="4" y="26" width="10" height="10" stroke="#1a5fd0" stroke-width="2"/><path d="M24 26 H34 V38 H24 Z M24 26 L28 22 H38 V34 L34 38 M34 26 L38 22" fill="#ddd" stroke-width="1.8"/></g>
<g transform="translate(259.4 1275.4) scale(0.980)" fill="none" stroke="#4a4a4a" stroke-width="2.6" stroke-linejoin="round"><path d="M20 0 V40 M0 20 H40" stroke-width="2"/><rect x="4" y="2" width="10" height="12" stroke="#1a5fd0" stroke-width="2"/><rect x="4" y="26" width="10" height="10" stroke="#1a5fd0" stroke-width="2"/><path d="M26 2 L36 14 H26 Z" stroke="#1a5fd0" stroke-width="2"/><path d="M24 24 H32 L38 38 H30 Z" fill="#ccc" stroke-width="2"/></g>
<g transform="translate(19.4 1337.4) scale(0.980)" fill="none" stroke="#4a4a4a" stroke-width="2.6" stroke-linejoin="round"><rect x="2" y="2" width="22" height="14" fill="#fff" stroke-width="2"/><rect x="12" y="10" width="22" height="14" fill="#ddd" stroke-width="2"/><text x="20" y="39" font-size="13" font-weight="bold" fill="#444" stroke="none" text-anchor="middle">A&#8853;B</text></g>
<g transform="translate(78.4 1337.4) scale(0.980)" fill="none" stroke="#4a4a4a" stroke-width="2.6" stroke-linejoin="round"><path d="M0 28 H40" stroke="#e05a4a" stroke-width="1.8" stroke-dasharray="4 2"/><path d="M4 38 L36 8" stroke="#7cc35a" stroke-width="1.8" stroke-dasharray="4 2"/><path d="M20 2 V38" stroke="#1a5fd0" stroke-width="1.8" stroke-dasharray="4 2"/><ellipse cx="20" cy="20" rx="12" ry="5" stroke-width="2"/><ellipse cx="20" cy="28" rx="12" ry="5" stroke-width="2"/></g>
<g transform="translate(139.4 1337.4) scale(0.980)" fill="none" stroke="#4a4a4a" stroke-width="2.6" stroke-linejoin="round"><path d="M0 28 H40" stroke="#e05a4a" stroke-width="1.8" stroke-dasharray="4 2"/><path d="M4 38 L36 6" stroke="#7cc35a" stroke-width="1.8" stroke-dasharray="4 2"/><path d="M2 38 H24 M24 38 V24 M24 24 L36 4" stroke="#1a5fd0" stroke-width="2.2"/><circle cx="4" cy="38" r="2.5" fill="#1a5fd0" stroke="none"/><circle cx="24" cy="38" r="2.5" fill="#1a5fd0" stroke="none"/><circle cx="26" cy="18" r="2.5" fill="#1a5fd0" stroke="none"/><circle cx="34" cy="6" r="2.5" fill="#1a5fd0" stroke="none"/></g>
<g transform="translate(198.4 1337.4) scale(0.980)" fill="none" stroke="#4a4a4a" stroke-width="2.6" stroke-linejoin="round"><path d="M0 28 H40" stroke="#e05a4a" stroke-width="1.8"/><path d="M26 22 L38 10" stroke="#7cc35a" stroke-width="1.8"/><path d="M20 2 V40" stroke-width="2"/><path d="M2 38 Q18 34 18 20 M6 12 L14 4" stroke="#1a5fd0" stroke-width="2.2"/><path d="M24 18 V26" stroke="#1a5fd0" stroke-width="2"/></g>
<g transform="translate(19.4 1490.4) scale(0.980)" fill="none" stroke="#4a4a4a" stroke-width="2.6" stroke-linejoin="round"><g transform="translate(-2 0) scale(1.0)"><circle cx="15" cy="6" r="4.5" fill="#eee" stroke-width="2.2"/><path d="M14 13 Q12 18 11 24 M13 15 Q8 19 6 24 M15 15 Q19 19 22 22 M11 24 Q10 31 5 37 M12 25 Q17 30 21 37" stroke="#444" stroke-width="6.5" stroke-linecap="round"/><path d="M14 13 Q12 18 11 24 M13 15 Q8 19 6 24 M15 15 Q19 19 22 22 M11 24 Q10 31 5 37 M12 25 Q17 30 21 37" stroke="#e8e8e8" stroke-width="2.6" stroke-linecap="round"/></g><circle cx="30" cy="10" r="8" fill="#f0f0f0" stroke-width="1.6"/><path d="M24.8 7.6 h10.4 M24.8 12.8 h10.4 M28.4 3.5999999999999996 v7.2 M31.6 9.2 v7.2" stroke-width="1.6"/></g>
<g transform="translate(78.4 1490.4) scale(0.980)" fill="none" stroke="#4a4a4a" stroke-width="2.6" stroke-linejoin="round"><g transform="translate(4 0) scale(1.0)"><circle cx="15" cy="6" r="4.5" fill="#eee" stroke-width="2.2"/><path d="M14 13 Q12 18 11 24 M13 15 Q8 19 6 24 M15 15 Q19 19 22 22 M11 24 Q10 31 5 37 M12 25 Q17 30 21 37" stroke="#444" stroke-width="6.5" stroke-linecap="round"/><path d="M14 13 Q12 18 11 24 M13 15 Q8 19 6 24 M15 15 Q19 19 22 22 M11 24 Q10 31 5 37 M12 25 Q17 30 21 37" stroke="#e8e8e8" stroke-width="2.6" stroke-linecap="round"/></g></g>
<g transform="translate(139.4 1490.4) scale(0.980)" fill="none" stroke="#4a4a4a" stroke-width="2.6" stroke-linejoin="round"><rect x="2" y="18" width="22" height="18" rx="4" fill="#eee" stroke="#888" stroke-width="2.2"/><path d="M24 24 L32 18 V36 L24 30 Z" fill="#eee" stroke="#888" stroke-width="2.2"/><path d="M30 2 V20 M21 11 H39" stroke="#7cc35a" stroke-width="5"/></g>
<g transform="translate(198.4 1490.4) scale(0.980)" fill="none" stroke="#4a4a4a" stroke-width="2.6" stroke-linejoin="round"><rect x="8" y="18" width="22" height="18" rx="4" fill="#eee" stroke="#888" stroke-width="2.2"/><path d="M30 24 L38 18 V36 L30 30 Z" fill="#eee" stroke="#888" stroke-width="2.2"/><path d="M2 10 L10 3 V7 H20 V13 H10 V17 Z" fill="#ddd" stroke="#888" stroke-width="1.8"/></g>
<g transform="translate(259.4 1490.4) scale(0.980)" fill="none" stroke="#4a4a4a" stroke-width="2.6" stroke-linejoin="round"><rect x="2" y="18" width="22" height="18" rx="4" fill="#eee" stroke="#888" stroke-width="2.2"/><path d="M24 24 L32 18 V36 L24 30 Z" fill="#eee" stroke="#888" stroke-width="2.2"/><path d="M38 10 L30 3 V7 H20 V13 H30 V17 Z" fill="#ddd" stroke="#888" stroke-width="1.8"/></g>
<g transform="translate(19.4 1545.4) scale(0.980)" fill="none" stroke="#4a4a4a" stroke-width="2.6" stroke-linejoin="round"><path d="M2 34 Q8 4 14 14 Q20 38 28 34 L36 28" stroke="#1a5fd0" stroke-width="2.4"/><circle cx="8" cy="10" r="2.8" fill="#1a5fd0" stroke="none"/><circle cx="22" cy="34" r="2.8" fill="#1a5fd0" stroke="none"/><circle cx="36" cy="28" r="2.8" fill="#1a5fd0" stroke="none"/><circle cx="30" cy="10" r="8" fill="#ccc" stroke="#999" stroke-width="1.5"/><path d="M26 11 A4 4 0 1 1 31 14" stroke="#444" stroke-width="1.8"/></g>
<g transform="translate(78.4 1545.4) scale(0.980)" fill="none" stroke="#4a4a4a" stroke-width="2.6" stroke-linejoin="round"><path d="M2 34 Q8 4 14 14 Q20 38 28 34 L36 28" stroke="#1a5fd0" stroke-width="2.4"/><circle cx="8" cy="10" r="2.8" fill="#1a5fd0" stroke="none"/><circle cx="22" cy="34" r="2.8" fill="#1a5fd0" stroke="none"/><circle cx="36" cy="28" r="2.8" fill="#1a5fd0" stroke="none"/><circle cx="30" cy="10" r="8" fill="#ccc" stroke="#999" stroke-width="1.5"/><path d="M28 6 L34 10 L28 14 Z" fill="#444" stroke="none"/></g>
<g transform="translate(139.4 1545.4) scale(0.980)" fill="none" stroke="#4a4a4a" stroke-width="2.6" stroke-linejoin="round"><path d="M2 34 Q8 4 14 14 Q20 38 28 34 L36 28" stroke="#1a5fd0" stroke-width="2.4"/><circle cx="8" cy="10" r="2.8" fill="#1a5fd0" stroke="none"/><circle cx="22" cy="34" r="2.8" fill="#1a5fd0" stroke="none"/><circle cx="36" cy="28" r="2.8" fill="#1a5fd0" stroke="none"/><circle cx="30" cy="10" r="7" fill="#f0aaa0" stroke="#c06060" stroke-width="1.5"/></g>
<g transform="translate(198.4 1545.4) scale(0.980)" fill="none" stroke="#4a4a4a" stroke-width="2.6" stroke-linejoin="round"><path d="M2 34 Q8 4 14 14 Q20 38 28 34 L36 28" stroke="#1a5fd0" stroke-width="2.4"/><circle cx="8" cy="10" r="2.8" fill="#1a5fd0" stroke="none"/><circle cx="22" cy="34" r="2.8" fill="#1a5fd0" stroke="none"/><circle cx="36" cy="28" r="2.8" fill="#1a5fd0" stroke="none"/><path d="M30 2 V20 M21 11 H39" stroke="#7cc35a" stroke-width="5"/></g>
<g transform="translate(259.4 1545.4) scale(0.980)" fill="none" stroke="#4a4a4a" stroke-width="2.6" stroke-linejoin="round"><path d="M2 34 Q8 4 14 14 Q20 38 28 34 L36 28" stroke="#1a5fd0" stroke-width="2.4"/><circle cx="8" cy="10" r="2.8" fill="#1a5fd0" stroke="none"/><circle cx="22" cy="34" r="2.8" fill="#1a5fd0" stroke="none"/><circle cx="36" cy="28" r="2.8" fill="#1a5fd0" stroke="none"/><circle cx="12" cy="10" r="6" fill="#ccc" stroke="#777" stroke-width="2.5" stroke-dasharray="2 2"/><path d="M30 2 V20 M21 11 H39" stroke="#7cc35a" stroke-width="5"/></g>
<g transform="translate(19.4 1612.4) scale(0.980)" fill="none" stroke="#4a4a4a" stroke-width="2.6" stroke-linejoin="round"><rect x="2" y="4" width="36" height="30" fill="#fff" stroke-width="2.4"/><rect x="5" y="7" width="30" height="24" fill="#d8e8f8" stroke="none"/><path d="M5 31 L16 20 L22 26 L35 14 V31 Z" fill="#7cc35a" stroke="#444" stroke-width="2"/><circle cx="12" cy="13" r="3" fill="#f0c040" stroke="none"/></g>
<g transform="translate(78.4 1612.4) scale(0.980)" fill="none" stroke="#4a4a4a" stroke-width="2.6" stroke-linejoin="round"><rect x="2" y="12" width="14" height="28" fill="#eee" stroke="none"/><path d="M2 12 V40 M16 12 V40" stroke-width="2.2" stroke-dasharray="3 2"/><path d="M4 24 H14 M4 30 H14" stroke-width="2"/><path d="M6 28 Q12 -4 20 18 Q26 32 36 22" stroke="#1a5fd0" stroke-width="2.2"/><circle cx="36" cy="22" r="2.5" fill="#1a5fd0" stroke="none"/></g>
<g transform="translate(139.4 1612.4) scale(0.980)" fill="none" stroke="#4a4a4a" stroke-width="2.6" stroke-linejoin="round"><rect x="0" y="32" width="40" height="8" fill="#d6d6d6" stroke="none"/><path d="M2 31 H38 M4 14 L16 27 L26 17" stroke-width="2.2"/><path d="M2 12 L10 12 L4 19 Z" fill="#444" stroke="none"/><path d="M33 1 V15 M26 8 H40 M28 3 L38 13 M38 3 L28 13" stroke="#e8b840" stroke-width="2"/></g>
<g transform="translate(198.4 1612.4) scale(0.980)" fill="none" stroke="#4a4a4a" stroke-width="2.6" stroke-linejoin="round"><rect x="0" y="32" width="40" height="8" fill="#d6d6d6" stroke="none"/><path d="M2 31 H38 M4 14 L16 27 L26 17" stroke-width="2.2"/><path d="M2 12 L10 12 L4 19 Z" fill="#444" stroke="none"/><path d="M28 12 A7 7 0 1 1 36 8" stroke="#1a5fd0" stroke-width="2.4"/><path d="M38 2 L38 10 L31 8 Z" fill="#1a5fd0" stroke="none"/></g>
<g transform="translate(259.4 1612.4) scale(0.980)" fill="none" stroke="#4a4a4a" stroke-width="2.6" stroke-linejoin="round"><rect x="0" y="32" width="40" height="8" fill="#d6d6d6" stroke="none"/><path d="M2 31 H38 M4 14 L16 27 L26 17" stroke-width="2.2"/><path d="M2 12 L10 12 L4 19 Z" fill="#444" stroke="none"/><path d="M26 2 L38 14 M38 2 L26 14" stroke="#e05a4a" stroke-width="4.5"/></g>
<g transform="translate(19.4 1671.4) scale(0.980)" fill="none" stroke="#4a4a4a" stroke-width="2.6" stroke-linejoin="round"><g transform="translate(-2 0) scale(1.0)"><circle cx="15" cy="6" r="4.5" fill="#eee" stroke-width="2.2"/><path d="M14 13 Q12 18 11 24 M13 15 Q8 19 6 24 M15 15 Q19 19 22 22 M11 24 Q10 31 5 37 M12 25 Q17 30 21 37" stroke="#444" stroke-width="6.5" stroke-linecap="round"/><path d="M14 13 Q12 18 11 24 M13 15 Q8 19 6 24 M15 15 Q19 19 22 22 M11 24 Q10 31 5 37 M12 25 Q17 30 21 37" stroke="#e8e8e8" stroke-width="2.6" stroke-linecap="round"/></g><rect x="22" y="6" width="16" height="10" rx="3" fill="#ddd" stroke-width="2"/></g>
<g transform="translate(19.4 1786.4) scale(0.980)" fill="none" stroke="#4a4a4a" stroke-width="2.6" stroke-linejoin="round"><rect x="6" y="2" width="28" height="36" rx="2" fill="#eee" stroke-width="2.2"/><rect x="10" y="6" width="20" height="6" fill="#555" stroke="none"/><g fill="#777" stroke="none"><rect x="10" y="16" width="5" height="3"/><rect x="18" y="16" width="5" height="3"/><rect x="10" y="23" width="5" height="3"/><rect x="18" y="23" width="5" height="3"/><rect x="10" y="30" width="5" height="3"/><rect x="18" y="30" width="5" height="3"/></g><rect x="26" y="22" width="5" height="12" fill="#6a9ae0" stroke="none"/></g>
<g transform="translate(78.4 1786.4) scale(0.980)" fill="none" stroke="#4a4a4a" stroke-width="2.6" stroke-linejoin="round"><rect x="2" y="2" width="24" height="34" fill="#eee" stroke-width="2"/><path d="M2 6 V34" stroke-width="2" stroke-dasharray="2 3"/><rect x="8" y="8" width="14" height="4" stroke-width="1.8"/><rect x="18" y="20" width="18" height="18" fill="#ddd" stroke-width="2"/><path d="M18 26 H36 M18 32 H36" stroke-width="1.8"/><circle cx="22" cy="23" r="1" fill="#1a5fd0" stroke="none"/></g>
<g transform="translate(139.4 1786.4) scale(0.980)" fill="none" stroke="#4a4a4a" stroke-width="2.6" stroke-linejoin="round"><rect x="8" y="2" width="24" height="34" fill="#eee" stroke-width="2"/><path d="M8 6 V34" stroke-width="2" stroke-dasharray="2 3"/><rect x="14" y="8" width="14" height="4" stroke-width="1.8"/></g>
<g transform="translate(198.4 1786.4) scale(0.980)" fill="none" stroke="#4a4a4a" stroke-width="2.6" stroke-linejoin="round"><path d="M2 8 H32 V38 H26 V30 Q26 24 20 24 Q14 24 14 30 V38 H2 Z" fill="#f0f0f0" stroke-width="2.2"/><rect x="20" y="2" width="20" height="16" fill="#fff" stroke="none"/><text x="30" y="15" font-size="13" font-weight="bold" fill="#1a5fd0" stroke="none" text-anchor="middle">m&#178;</text></g>
<g transform="translate(259.4 1786.4) scale(0.980)" fill="none" stroke="#4a4a4a" stroke-width="2.6" stroke-linejoin="round"><path d="M2 8 H32 V38 H2 Z" fill="#fff" stroke="#7cc35a" stroke-width="2.6"/><path d="M2 22 H32 M14 38 Q14 28 20 28 Q26 28 26 38 M10 22 Q10 14 16 14" stroke-width="2"/><rect x="20" y="2" width="20" height="14" fill="#fff" stroke="none"/><text x="30" y="15" font-size="13" font-weight="bold" fill="#1a5fd0" stroke="none" text-anchor="middle">m&#178;</text></g>
<g transform="translate(19.4 1845.4) scale(0.980)" fill="none" stroke="#4a4a4a" stroke-width="2.6" stroke-linejoin="round"><path d="M2 6 H30 V38 H24 V32 Q24 26 18 26 Q12 26 12 32 V38 H2 Z" fill="#f0f0f0" stroke-width="2.2"/><path d="M20 10 L26 16 L38 2" stroke="#4a7ad0" stroke-width="3"/></g>
<g transform="translate(78.4 1845.4) scale(0.980)" fill="none" stroke="#4a4a4a" stroke-width="2.6" stroke-linejoin="round"><rect x="2" y="6" width="14" height="16" fill="#fff" stroke="#7cc35a" stroke-width="2.2"/><rect x="2" y="22" width="14" height="16" fill="#fff" stroke="#60b0e0" stroke-width="2.2"/><rect x="16" y="22" width="16" height="16" fill="#fff" stroke="#e8c050" stroke-width="2.2"/><path d="M2 22 H32 M16 22 V38" stroke-width="1.5"/><path d="M20 10 L26 16 L38 2" stroke="#4a7ad0" stroke-width="3"/></g>
<g transform="translate(139.4 1845.4) scale(0.980)" fill="none" stroke="#4a4a4a" stroke-width="2.6" stroke-linejoin="round"><rect x="2" y="6" width="14" height="16" fill="#fff" stroke="#7cc35a" stroke-width="2.2"/><rect x="2" y="22" width="14" height="16" fill="#fff" stroke="#60b0e0" stroke-width="2.2"/><rect x="16" y="22" width="16" height="16" fill="#fff" stroke="#e8c050" stroke-width="2.2"/><path d="M2 22 H32 M16 22 V38" stroke-width="1.5"/><path d="M22 16 L34 2 L38 6 L26 20 Z" fill="#e05a4a" stroke="#fff" stroke-width="1.5"/></g>
<rect x="1242.5" y="2003.5" width="51.0" height="52.0" fill="#c8c8c8" stroke="#3a6ab0" stroke-width="1.2" />
<rect x="1958.5" y="2003.5" width="51.0" height="52.0" fill="#c8c8c8" stroke="#3a6ab0" stroke-width="1.2" />
<rect x="2012.5" y="2003.5" width="51.0" height="52.0" fill="#c8c8c8" stroke="#3a6ab0" stroke-width="1.2" />
<rect x="2068.5" y="2003.5" width="51.0" height="52.0" fill="#c8c8c8" stroke="#3a6ab0" stroke-width="1.2" />
<rect x="2122.5" y="2003.5" width="51.0" height="52.0" fill="#c8c8c8" stroke="#3a6ab0" stroke-width="1.2" />
<g transform="translate(368.0 2009.0) scale(1.000)" fill="none" stroke="#4a4a4a" stroke-width="2.6" stroke-linejoin="round"><rect x="2" y="12" width="30" height="26" fill="#cfe0f5" stroke-width="2.4"/><circle cx="29" cy="11" r="9" fill="#f0f0f0" stroke-width="1.6"/><path d="M23.15 8.3 h11.700000000000001 M23.15 14.15 h11.700000000000001 M27.2 3.8 v8.1 M30.8 10.1 v8.1" stroke-width="1.6"/></g>
<g transform="translate(422.0 2009.0) scale(1.000)" fill="none" stroke="#4a4a4a" stroke-width="2.6" stroke-linejoin="round"><rect x="3" y="4" width="32" height="32" stroke-dasharray="4 3" stroke-width="2.2"/><circle cx="3" cy="36" r="2.5" fill="#1a5fd0" stroke="none"/><circle cx="35" cy="4" r="2.5" fill="#1a5fd0" stroke="none"/><circle cx="16" cy="16" r="7" stroke-width="2.2"/><path d="M21 21 L28 28" stroke-width="2.6"/></g>
<g transform="translate(478.0 2009.0) scale(1.000)" fill="none" stroke="#4a4a4a" stroke-width="2.6" stroke-linejoin="round"><circle cx="12" cy="26" r="8" stroke-width="2.2"/><path d="M18 32 L25 39" stroke-width="2.6"/><path d="M24 8 L31 2 V6 H38 V11 H31 V15 Z" fill="#ddd" stroke="#888" stroke-width="1.6"/></g>
<g transform="translate(534.0 2009.0) scale(1.000)" fill="none" stroke="#4a4a4a" stroke-width="2.6" stroke-linejoin="round"><rect x="14" y="8" width="20" height="16" fill="#cfe0f5" stroke="#888" stroke-width="2"/><path d="M19 2 H29 L24 7 Z M38 11 V21 L33 16 Z" fill="#1a5fd0" stroke="none"/><circle cx="12" cy="28" r="8" fill="#fff" stroke-width="2.2"/><path d="M18 34 L24 40" stroke-width="2.6"/></g>
<g transform="translate(588.0 2009.0) scale(1.000)" fill="none" stroke="#4a4a4a" stroke-width="2.6" stroke-linejoin="round"><rect x="2" y="4" width="36" height="30" rx="3" fill="#cfe0f5" stroke-width="2.4"/><path d="M6 9 H13 L6 16 Z M34 9 H27 L34 16 Z M6 29 H13 L6 22 Z M34 29 H27 L34 22 Z" fill="#1a5fd0" stroke="none"/></g>
<g transform="translate(642.0 2009.0) scale(1.000)" fill="none" stroke="#4a4a4a" stroke-width="2.6" stroke-linejoin="round"><g transform="translate(4 0) scale(1.0)"><circle cx="15" cy="6" r="4.5" fill="#eee" stroke-width="2.2"/><path d="M14 13 Q12 18 11 24 M13 15 Q8 19 6 24 M15 15 Q19 19 22 22 M11 24 Q10 31 5 37 M12 25 Q17 30 21 37" stroke="#444" stroke-width="6.5" stroke-linecap="round"/><path d="M14 13 Q12 18 11 24 M13 15 Q8 19 6 24 M15 15 Q19 19 22 22 M11 24 Q10 31 5 37 M12 25 Q17 30 21 37" stroke="#e8e8e8" stroke-width="2.6" stroke-linecap="round"/></g></g>
<g transform="translate(698.0 2009.0) scale(1.000)" fill="none" stroke="#4a4a4a" stroke-width="2.6" stroke-linejoin="round"><path d="M2 18 Q2 12 8 12 H32 Q38 12 38 18 V26 Q38 30 32 30 H27 L23 24 H17 L13 30 H8 Q2 30 2 26 Z" fill="#ddd" stroke-width="2.4"/><rect x="15" y="9" width="10" height="4" fill="#444" stroke="none"/></g>
<g transform="translate(753.0 2009.0) scale(1.000)" fill="none" stroke="#4a4a4a" stroke-width="2.6" stroke-linejoin="round"><rect x="2" y="4" width="36" height="30" stroke-width="2.2"/><path d="M24 34 V24 H38" stroke-width="2.2"/></g>
<g transform="translate(808.0 2009.0) scale(1.000)" fill="none" stroke="#4a4a4a" stroke-width="2.6" stroke-linejoin="round"><rect x="6" y="2" width="32" height="28" stroke-width="2"/><path d="M12 16 H20 M20 10 V22 M22 16 H32" stroke="#e05a4a" stroke-width="1.8" stroke-dasharray="3 2"/><path d="M21 10 V15" stroke="#7cc35a" stroke-width="1.8"/><circle cx="8" cy="32" r="6" fill="#fff" stroke-width="2"/><path d="M8 28 V36 M4 32 H12" stroke-width="2"/></g>
<g transform="translate(862.0 2009.0) scale(1.000)" fill="none" stroke="#4a4a4a" stroke-width="2.6" stroke-linejoin="round"><path d="M4 20 H30 V32 H4 Z" fill="#aaa" stroke-width="2"/><path d="M9 14 H24 V20 M9 28 H25 V38 H9 Z" fill="#fff" stroke-width="2"/><path d="M26 22 L38 4 L41 7 L29 25 Z" fill="#6a9ae0" stroke="#444" stroke-width="1.6"/></g>
<g transform="translate(916.0 2009.0) scale(1.000)" fill="none" stroke="#4a4a4a" stroke-width="2.6" stroke-linejoin="round"><path d="M2 8 L8 3 H28 L34 10 V30 H8 L2 24 Z" fill="#888" stroke-width="2.2"/><path d="M2 8 L8 14 H34 M8 14 V30" stroke-width="2"/><path d="M14 22 H34 M14 22 V38 H30" stroke="#222" stroke-width="2" stroke-dasharray="3 2"/><circle cx="14" cy="38" r="2.5" fill="#1a5fd0" stroke="none"/><circle cx="38" cy="22" r="2.5" fill="#1a5fd0" stroke="none"/></g>
<g transform="translate(972.0 2009.0) scale(1.000)" fill="none" stroke="#4a4a4a" stroke-width="2.6" stroke-linejoin="round"><path d="M2 8 L8 3 H30 L38 10 V34 H10 L2 28 Z" fill="#ccc" stroke="none"/><path d="M10 12 H38 V34 H10 Z" fill="#999" stroke="none"/></g>
<g transform="translate(1027.0 2009.0) scale(1.000)" fill="none" stroke="#4a4a4a" stroke-width="2.6" stroke-linejoin="round"><path d="M2 8 L8 3 H30 L38 10 V34 H10 L2 28 Z" fill="#aaa" stroke-width="2.2"/><path d="M2 8 L10 12 H38 M10 12 V34" stroke-width="2"/><path d="M10 12 H38 V34 H10 Z" fill="#888" stroke-width="2"/></g>
<g transform="translate(1082.0 2009.0) scale(1.000)" fill="none" stroke="#4a4a4a" stroke-width="2.6" stroke-linejoin="round"><path d="M2 8 L8 3 H30 L38 10 V34 H10 L2 28 Z M2 8 L10 12 H38 M10 12 V34" stroke-width="2.2"/></g>
<g transform="translate(1138.0 2009.0) scale(1.000)" fill="none" stroke="#4a4a4a" stroke-width="2.6" stroke-linejoin="round"><path d="M2 8 L8 3 H30 L38 10 V34 H10 L2 28 Z M2 8 L10 12 H38 M10 12 V34 M8 3 V24 L2 28 M8 24 H30 L38 34 M30 3 V24" stroke-width="2"/></g>
<g transform="translate(1194.0 2009.0) scale(1.000)" fill="none" stroke="#4a4a4a" stroke-width="2.6" stroke-linejoin="round"><defs><radialGradient id="sph" cx="0.35" cy="0.35"><stop offset="0" stop-color="#fff"/><stop offset="1" stop-color="#999"/></radialGradient></defs><circle cx="16" cy="26" r="13" fill="url(#sph)" stroke="#666" stroke-width="2"/><circle cx="33" cy="7" r="6" fill="#fff" stroke-width="2"/><path d="M33 1 A6 6 0 0 1 33 13 Z" fill="#444" stroke="none"/></g>
<g transform="translate(1248.0 2009.0) scale(1.000)" fill="none" stroke="#4a4a4a" stroke-width="2.6" stroke-linejoin="round"><path d="M4 38 V22 L16 16 M16 16 H32 M16 16 V8" stroke-width="2.2"/><rect x="18" y="18" width="12" height="12" fill="#bbb" stroke="none"/><circle cx="33" cy="7" r="6" fill="#fff" stroke-width="2"/><path d="M33 1 A6 6 0 0 1 33 13 Z" fill="#444" stroke="none"/></g>
<g transform="translate(1305.0 2009.0) scale(1.000)" fill="none" stroke="#4a4a4a" stroke-width="2.6" stroke-linejoin="round"><path d="M4 38 V16" stroke="#2a9ad8" stroke-width="2"/><path d="M4 38 H30" stroke="#e05a4a" stroke-width="2"/><path d="M4 38 L20 22" stroke="#7cc35a" stroke-width="2"/><circle cx="30" cy="8" r="6" fill="#fff" stroke-width="2"/><path d="M30 2 A6 6 0 0 1 30 14 Z" fill="#444" stroke="none"/></g>
<g transform="translate(1357.0 2009.0) scale(1.000)" fill="none" stroke="#4a4a4a" stroke-width="2.6" stroke-linejoin="round"><path d="M14 4 V22" stroke="#2a9ad8" stroke-width="2"/><path d="M14 22 H38" stroke="#e05a4a" stroke-width="2"/><path d="M14 22 L30 8" stroke="#7cc35a" stroke-width="2"/><circle cx="8" cy="32" r="6" fill="#fff" stroke-width="2"/><path d="M8 28 V36 M4 32 H12" stroke-width="2"/></g>
<g transform="translate(1409.0 2009.0) scale(1.000)" fill="none" stroke="#4a4a4a" stroke-width="2.6" stroke-linejoin="round"><rect x="2" y="2" width="8" height="38" fill="#bbb" stroke="none"/><path d="M8 38 V10 L20 2 V30 Z" fill="#fff" stroke-width="2.6"/><path d="M16 22 H38" stroke="#2a9ad8" stroke-width="2"/><path d="M16 22 L34 6" stroke="#e05a4a" stroke-width="2"/></g>
<g transform="translate(1467.0 2009.0) scale(1.000)" fill="none" stroke="#4a4a4a" stroke-width="2.6" stroke-linejoin="round"><path d="M4 38 V16" stroke="#2a9ad8" stroke-width="2"/><path d="M4 38 H30" stroke="#e05a4a" stroke-width="2"/><path d="M4 38 L20 22" stroke="#7cc35a" stroke-width="2"/><path d="M4 38 H38" stroke="#e05a4a" stroke-width="2"/><circle cx="4" cy="38" r="2.8" fill="#1a5fd0" stroke="none"/><circle cx="34" cy="38" r="2.8" fill="#1a5fd0" stroke="none"/><circle cx="16" cy="26" r="2.8" fill="#1a5fd0" stroke="none"/></g>
<g transform="translate(1521.0 2009.0) scale(1.000)" fill="none" stroke="#4a4a4a" stroke-width="2.6" stroke-linejoin="round"><path d="M22 4 V20" stroke="#2a9ad8" stroke-width="2"/><path d="M22 20 H38" stroke="#e05a4a" stroke-width="2"/><path d="M22 20 L34 10" stroke="#7cc35a" stroke-width="2"/><circle cx="22" cy="20" r="2.8" fill="#1a5fd0" stroke="none"/><path d="M4 38 L16 26" stroke-width="2.2"/><path d="M18 24 L10 26 L16 32 Z" fill="#444" stroke="none"/></g>
<g transform="translate(1577.0 2009.0) scale(1.000)" fill="none" stroke="#4a4a4a" stroke-width="2.6" stroke-linejoin="round"><path d="M6 4 V38" stroke="#2a9ad8" stroke-width="2"/><path d="M6 38 H38" stroke="#e05a4a" stroke-width="2"/><path d="M6 38 L28 16" stroke="#7cc35a" stroke-width="2"/><circle cx="6" cy="10" r="2.8" fill="#1a5fd0" stroke="none"/><circle cx="6" cy="38" r="2.8" fill="#1a5fd0" stroke="none"/></g>
<g transform="translate(1633.0 2009.0) scale(1.000)" fill="none" stroke="#4a4a4a" stroke-width="2.6" stroke-linejoin="round"><path d="M4 10 V38" stroke="#2a9ad8" stroke-width="2"/><path d="M4 38 H32" stroke="#e05a4a" stroke-width="2"/><path d="M4 38 L26 16" stroke="#7cc35a" stroke-width="2"/><path d="M22 6 L28 2 V10 Z" fill="#6a9ae0" stroke="#555" stroke-width="1"/><path d="M38 6 L32 2 V10 Z" fill="#7cc35a" stroke="#555" stroke-width="1"/><path d="M28 6 H32" stroke="#555" stroke-width="2"/></g>
<g transform="translate(1687.0 2009.0) scale(1.000)" fill="none" stroke="#4a4a4a" stroke-width="2.6" stroke-linejoin="round"><path d="M2 10 L10 2 H38 V30 L30 38 H2 Z M2 10 H30 V38 M30 10 L38 2" stroke="#bbb" stroke-width="2"/><path d="M2 22 H30 L38 14" stroke="#444" stroke-width="2.6"/><path d="M20 6 V36" stroke="#1a5fd0" stroke-width="2"/><path d="M16 10 L20 4 L24 10 Z M16 32 L20 38 L24 32 Z" fill="#1a5fd0" stroke="none"/></g>
<g transform="translate(1743.0 2009.0) scale(1.000)" fill="none" stroke="#4a4a4a" stroke-width="2.6" stroke-linejoin="round"><path d="M2 6 L8 2 H20 V14 L14 18 H2 Z M2 6 H14 V18 M14 6 L20 2" stroke="#1a5fd0" stroke-width="2.2"/><circle cx="20" cy="18" r="2.5" fill="#1a5fd0" stroke="none"/><path d="M24 26 L30 20 L38 28 L32 36 L26 32 Z" stroke-width="2.2"/><path d="M8 34 Q14 40 22 36 M34 12 Q38 16 36 20" stroke-width="1.8"/></g>
<g transform="translate(1797.0 2009.0) scale(1.000)" fill="none" stroke="#4a4a4a" stroke-width="2.6" stroke-linejoin="round"><path d="M20 22 L4 4" stroke="#7cc35a" stroke-width="2.2"/><path d="M20 22 L36 4" stroke="#e05a4a" stroke-width="2.2"/><path d="M2 2 L8 4 L4 8 Z" fill="#7cc35a" stroke="none"/><path d="M38 2 L32 4 L36 8 Z" fill="#e05a4a" stroke="none"/><circle cx="20" cy="22" r="2.8" fill="#1a5fd0" stroke="none"/><path d="M10 28 Q20 42 30 28" stroke="#1a5fd0" stroke-width="2.4"/><path d="M30 24 L34 30 L27 30 Z" fill="#1a5fd0" stroke="none"/></g>
<g transform="translate(1853.0 2009.0) scale(1.000)" fill="none" stroke="#4a4a4a" stroke-width="2.6" stroke-linejoin="round"><path d="M20 18 L30 10 L38 20 L28 32 Z" stroke-width="2.2"/><circle cx="28" cy="22" r="2.5" fill="#1a5fd0" stroke="none"/><circle cx="8" cy="10" r="2.5" fill="#1a5fd0" stroke="none"/><path d="M18 2 L20 10 M2 22 L10 24" stroke-width="2"/></g>
<g transform="translate(1908.0 2009.0) scale(1.000)" fill="none" stroke="#4a4a4a" stroke-width="2.6" stroke-linejoin="round"><rect x="2" y="22" width="3.5" height="3.5" fill="#1a5fd0" stroke="none"/><rect x="2" y="29" width="3.5" height="3.5" fill="#1a5fd0" stroke="none"/><rect x="2" y="36" width="3.5" height="3.5" fill="#1a5fd0" stroke="none"/><rect x="9" y="22" width="3.5" height="3.5" fill="#1a5fd0" stroke="none"/><rect x="9" y="29" width="3.5" height="3.5" fill="#1a5fd0" stroke="none"/><rect x="9" y="36" width="3.5" height="3.5" fill="#1a5fd0" stroke="none"/><rect x="16" y="22" width="3.5" height="3.5" fill="#1a5fd0" stroke="none"/><rect x="16" y="29" width="3.5" height="3.5" fill="#1a5fd0" stroke="none"/><rect x="16" y="36" width="3.5" height="3.5" fill="#1a5fd0" stroke="none"/><rect x="23" y="22" width="3.5" height="3.5" fill="#1a5fd0" stroke="none"/><rect x="23" y="29" width="3.5" height="3.5" fill="#1a5fd0" stroke="none"/><rect x="23" y="36" width="3.5" height="3.5" fill="#1a5fd0" stroke="none"/><rect x="30" y="22" width="3.5" height="3.5" fill="#1a5fd0" stroke="none"/><rect x="30" y="29" width="3.5" height="3.5" fill="#1a5fd0" stroke="none"/><rect x="30" y="36" width="3.5" height="3.5" fill="#1a5fd0" stroke="none"/><rect x="37" y="22" width="3.5" height="3.5" fill="#1a5fd0" stroke="none"/><rect x="37" y="29" width="3.5" height="3.5" fill="#1a5fd0" stroke="none"/><rect x="37" y="36" width="3.5" height="3.5" fill="#1a5fd0" stroke="none"/><circle cx="33" cy="7" r="6" fill="#fff" stroke-width="2"/><path d="M33 1 A6 6 0 0 1 33 13 Z" fill="#444" stroke="none"/></g>
<g transform="translate(1964.0 2009.0) scale(1.000)" fill="none" stroke="#4a4a4a" stroke-width="2.6" stroke-linejoin="round"><text x="17" y="37" font-size="30" font-weight="bold" fill="#444" stroke="none" text-anchor="middle">A</text><circle cx="33" cy="7" r="6" fill="#fff" stroke-width="2"/><path d="M33 1 A6 6 0 0 1 33 13 Z" fill="#444" stroke="none"/></g>
<g transform="translate(2018.0 2009.0) scale(1.000)" fill="none" stroke="#4a4a4a" stroke-width="2.6" stroke-linejoin="round"><path d="M2 22 H14 L32 36" stroke-width="2.2"/><path d="M36 38 L26 36 L32 30 Z" fill="#444" stroke="none"/><circle cx="33" cy="7" r="6" fill="#fff" stroke-width="2"/><path d="M33 1 A6 6 0 0 1 33 13 Z" fill="#444" stroke="none"/></g>
<g transform="translate(2074.0 2009.0) scale(1.000)" fill="none" stroke="#4a4a4a" stroke-width="2.6" stroke-linejoin="round"><path d="M4 18 V38 M34 18 V38 M6 26 H32" stroke-width="2.4"/><path d="M6 26 l6 -4 v8 z M32 26 l-6 -4 v8 z" fill="#444" stroke="none"/><circle cx="33" cy="7" r="6" fill="#fff" stroke-width="2"/><path d="M33 1 A6 6 0 0 1 33 13 Z" fill="#444" stroke="none"/></g>
<g transform="translate(2128.0 2009.0) scale(1.000)" fill="none" stroke="#4a4a4a" stroke-width="2.6" stroke-linejoin="round"><path d="M2 36 L12 22 M8 36 L18 22 M14 36 L24 22 M20 36 L30 22 M26 36 L36 22" stroke-width="2.4"/><circle cx="33" cy="7" r="6" fill="#fff" stroke-width="2"/><path d="M33 1 A6 6 0 0 1 33 13 Z" fill="#444" stroke="none"/></g>
<g transform="translate(2486.6 2012.6) scale(0.920)" fill="none" stroke="#4a4a4a" stroke-width="2.6" stroke-linejoin="round"><path d="M2 16 H38 V30 H2 Z M2 23 H38 M2 30 L10 16 M6 30 L14 16" fill="#bbb" stroke-width="2.2"/><path d="M8 16 V30" stroke-width="2"/><path d="M20 2 V40" stroke="#1a5fd0" stroke-width="3.5"/></g>
<rect x="2912.0" y="2011.0" width="39.0" height="39.0" fill="#d0d0d0" />
<rect x="2917.0" y="2016.0" width="29.0" height="29.0" fill="#f4aaa4" stroke="#e8c050" stroke-width="2" />
<path d="M2938 2018 V2040 H2920" fill="none" stroke="#d04040" stroke-width="2"/>
<g transform="translate(3340.6 310.6) scale(0.920)" fill="none" stroke="#4a4a4a" stroke-width="2.6" stroke-linejoin="round"><rect x="6" y="2" width="28" height="36" fill="#fff" stroke-width="2"/><path d="M6 6 V36" stroke-dasharray="2 3" stroke-width="2"/><path d="M12 20 L20 13 L28 20 Z" fill="#f0aaa0" stroke="#e07060" stroke-width="1.6"/><path d="M14 20 V27 H26 V20" stroke="#e07060" stroke-width="1.6"/></g>
<g transform="translate(3405.6 310.6) scale(0.920)" fill="none" stroke="#4a4a4a" stroke-width="2.6" stroke-linejoin="round"><path d="M2 8 L8 4 H30 V34 L24 38 H2 Z" fill="#ccc" stroke-width="2.2"/><path d="M2 16 H24 M2 24 H24 M2 32 H24 M24 8 V38 M2 8 H24 L30 4" stroke-width="2"/><circle cx="31" cy="9" r="8" fill="#f0f0f0" stroke-width="1.6"/><path d="M25.8 6.6 h10.4 M25.8 11.8 h10.4 M29.4 2.5999999999999996 v7.2 M32.6 8.2 v7.2" stroke-width="1.6"/></g>
<g transform="translate(3469.6 310.6) scale(0.920)" fill="none" stroke="#4a4a4a" stroke-width="2.6" stroke-linejoin="round"><path d="M2 22 L8 16 H38 L32 22 Z M2 30 L8 24 H38 L32 30 Z M2 38 L8 32 H38 L32 38 Z" stroke="#555" stroke-width="2"/><path d="M20 2 V30" stroke="#1a5fd0" stroke-width="2"/><path d="M16 8 L20 2 L24 8 Z" fill="#1a5fd0" stroke="none"/><path d="M2 38 H32 L38 32" stroke="#1a5fd0" stroke-width="2.4"/></g>
<line x1="3523.5" y1="300.0" x2="3523.5" y2="358.0" stroke="#d8d8d8" stroke-width="1" />
<g transform="translate(3539.6 310.6) scale(0.920)" fill="none" stroke="#4a4a4a" stroke-width="2.6" stroke-linejoin="round"><rect x="3" y="3" width="34" height="34" rx="4" fill="#cfe0f5" stroke="#555" stroke-width="2.4"/><path d="M10 12 H30 M10 20 H30 M10 28 H30 M10 10 V30 H30 V10 Z" stroke="#1a5fd0" stroke-width="2"/></g>
<g transform="translate(3603.6 310.6) scale(0.920)" fill="none" stroke="#4a4a4a" stroke-width="2.6" stroke-linejoin="round"><path d="M4 2 V8 H10 M16 14 V20 H22 M28 26 V32 H34" stroke-width="1.8"/><path d="M8 4 H16 L18 6 V12 H8 Z M20 16 H28 L30 18 V24 H20 Z M32 28 H38 V36 H30 Z" fill="#efd08a" stroke-width="1.6"/></g>
<line x1="3657.5" y1="300.0" x2="3657.5" y2="358.0" stroke="#d8d8d8" stroke-width="1" />
<g transform="translate(3673.6 310.6) scale(0.920)" fill="none" stroke="#4a4a4a" stroke-width="2.6" stroke-linejoin="round"><rect x="3" y="3" width="34" height="34" fill="#666" stroke="#555" stroke-width="2.4"/><path d="M3 37 L37 3 V37 Z" fill="#fff" stroke="none"/><path d="M24 30 L34 20 V30 Z" fill="#444" stroke="none"/></g>
<path d="M3343 393 L3351 384 H3371 L3377 393 Z" fill="#a8d8a0" stroke="#a8d8a0"/>
<g transform="translate(3412.0 374.0) scale(0.700)" fill="none" stroke="#4a4a4a" stroke-width="2.6" stroke-linejoin="round"><path d="M4 8 L10 4 H34 V32 L30 36 H4 Z" fill="#ddd" stroke-width="2"/><path d="M4 14 H30 M4 22 H30 M4 30 H30 M30 8 V36 M4 8 H30 L34 4" stroke-width="1.8"/></g>
<g transform="translate(3478.0 374.0) scale(0.700)" fill="none" stroke="#4a4a4a" stroke-width="2.6" stroke-linejoin="round"><path d="M4 8 L10 4 H34 V32 L30 36 H4 Z" fill="#f2f2f2" stroke="#bbb" stroke-width="2"/><path d="M4 14 H30 M4 22 H30 M4 30 H30 M30 8 V36 M4 8 H30 L34 4" stroke="#bbb" stroke-width="1.8"/></g>
<path d="M3411 446 L3416 440 H3439 L3442 446 Z M3477 446 L3482 440 H3505 L3508 446 Z" fill="none" stroke="#c8c8c8" stroke-width="1.3"/>
<path d="M3414 460 V488 M3414 485 H3440" stroke="#a8d8a0" stroke-width="5" fill="none"/><path d="M3428 475 h8 l-4 4 z" fill="#aaa"/>
<path d="M3480 460 V488 M3480 485 H3506" stroke="#d8d8d8" stroke-width="5" fill="none"/><path d="M3494 475 h8 l-4 4 z" fill="#aaa"/>
<path d="M3414 499 V527 M3414 524 H3440" stroke="#a8d8a0" stroke-width="5" fill="none"/><path d="M3428 514 h8 l-4 4 z" fill="#aaa"/>
<path d="M3480 499 V527 M3480 524 H3506" stroke="#d8d8d8" stroke-width="5" fill="none"/><path d="M3494 514 h8 l-4 4 z" fill="#aaa"/>
<path d="M3414 579 V607 M3414 604 H3440" stroke="#a8d8a0" stroke-width="5" fill="none"/><path d="M3428 594 h8 l-4 4 z" fill="#aaa"/>
<path d="M3480 579 V607 M3480 604 H3506" stroke="#d8d8d8" stroke-width="5" fill="none"/><path d="M3494 594 h8 l-4 4 z" fill="#aaa"/>
<path d="M3414 539 V567 M3414 564 H3440" stroke="#6a8ad8" stroke-width="5" fill="none"/><path d="M3428 554 h8 l-4 4 z" fill="#aaa"/><path d="M3430 551 l8 -10 l2 2 l-8 10 z" fill="none" stroke="#555" stroke-width="1.3"/>
<path d="M3480 539 V567 M3480 564 H3506" stroke="#a8d8a0" stroke-width="5" fill="none"/><path d="M3494 554 h8 l-4 4 z" fill="#aaa"/>
<path d="M3343 1055 V1090 M3350 1055 V1090 M3343 1080 H3378 M3343 1085 H3378 M3358 1068 h12 l-6 6 z" fill="#444" stroke="#444" stroke-width="2"/>
<g transform="translate(3483.0 1054.0) scale(0.900)" fill="none" stroke="#4a4a4a" stroke-width="2.6" stroke-linejoin="round"><rect x="4" y="6" width="26" height="32" fill="#fff" stroke-width="2"/><path d="M9 14 H25 M9 20 H25 M9 26 H25 M9 32 H20" stroke-width="1.8"/><rect x="28" y="2" width="8" height="14" fill="#f0c860" stroke="#888" stroke-width="1.5"/></g>
<g transform="translate(3633.0 1054.0) scale(0.900)" fill="none" stroke="#4a4a4a" stroke-width="2.6" stroke-linejoin="round"><path d="M4 36 L30 10" stroke="#7cc35a" stroke-width="2"/><path d="M4 4 V36 H38" stroke="#e05a4a" stroke-width="2"/><path d="M4 4 V36" stroke="#2a9ad8" stroke-width="2"/><path d="M22 6 L28 2 V10 Z" fill="#6a9ae0" stroke="#555" stroke-width="1"/><path d="M38 6 L32 2 V10 Z" fill="#7cc35a" stroke="#555" stroke-width="1"/></g>
<g transform="translate(3342.0 1178.0) scale(0.900)" fill="none" stroke="#4a4a4a" stroke-width="2.6" stroke-linejoin="round"><rect x="5" y="5" width="30" height="30" fill="#fff" stroke-width="2.4"/><path d="M10 30 L30 10" stroke="#1a5fd0" stroke-width="2.6"/><path d="M30 10 L22 11 L29 18 Z M10 30 L11 22 L18 29 Z" fill="#1a5fd0" stroke="none"/><circle cx="20" cy="20" r="2" fill="#1a5fd0" stroke="none"/></g>
<g transform="translate(3411.0 1178.0) scale(0.900)" fill="none" stroke="#4a4a4a" stroke-width="2.6" stroke-linejoin="round"><circle cx="20" cy="21" r="16" stroke-width="2.4"/><path d="M20 10 V22 L27 28" stroke-width="2.4"/><path d="M2 14 L6 20 L10 14" stroke="#f0f0f0" stroke-width="4"/></g>
<path d="M3384 1230 V1250 Q3416 1262 3449 1250 V1230 Z" fill="#c8c8c8" stroke="#999"/>
<path d="M3541 1230 Q3578 1268 3615 1230 Z" fill="#e02020"/><path d="M3565 1235 Q3578 1245 3592 1235" fill="none" stroke="#333" stroke-width="3"/>
<path d="M3406 1372 Q3412 1366 3418 1370 Q3424 1368 3425 1376 Q3420 1392 3424 1410 Q3430 1430 3426 1446 Q3424 1462 3428 1472 L3412 1474 Q3408 1455 3410 1440 Q3412 1420 3406 1405 Q3402 1388 3406 1372 Z" fill="#d0a878" stroke="#b08858" stroke-width="1"/><path d="M3414 1380 V1392 M3416 1420 V1432" stroke="#fff" stroke-width="2"/><path d="M3403 1470 L3430 1468 L3433 1476 L3406 1478 Z" fill="#7a1818"/>
<path d="M3545.8 1418.3 L3546.7 1400.4 Q3550 1391 3555.7 1390.5 L3568.2 1389.6 L3586.2 1395.9 L3601.4 1383.8 L3610.9 1392.8 L3591.6 1411.2 L3611.3 1413.9 L3627.5 1422.8 L3632.4 1435.8 L3626.6 1439 L3584.4 1450.7 L3579 1449.8 L3562.8 1434.5 Z" fill="#03203c"/><path d="M3571 1429 L3580 1420 M3585 1432 L3590 1418 L3611 1420" fill="none" stroke="#7a6a50" stroke-width="2.5"/><path d="M3583.5 1445.3 L3625.7 1436.3 L3626.6 1439 L3584.4 1449.8 Z" fill="#b8d8f0"/><path d="M3580 1450 V1466 M3601 1447 V1463 M3605 1447 V1463 M3618 1443 V1455 M3562.5 1435 V1441" stroke="#03203c" stroke-width="2.8"/><path d="M3602 1400 L3615 1414" stroke="#8aa" stroke-width="1"/>
<path d="M3379 1631 L3461 1612 L3482 1641 H3379 Z" fill="#9a9a9a"/><path d="M3337 1608 L3360 1603 L3379 1610 V1641 H3337 Z" fill="#a05a18"/><path d="M3358 1612 L3379 1610 V1641 H3358 Z" fill="#c8c8c8"/><circle cx="3368" cy="1632" r="5" fill="#555"/><path d="M3441 1580 L3462 1573 L3482 1578 V1641 H3441 Z" fill="#a05a18"/><path d="M3462 1581 L3482 1578 V1641 H3462 Z" fill="#bdbdbd"/><circle cx="3472" cy="1600" r="4" fill="#555"/><circle cx="3472" cy="1625" r="6" fill="#444"/>
<path d="M3536 1588 L3588 1573 L3636 1611 V1641 H3536 Z" fill="#050505"/><path d="M3580 1628 H3625" stroke="#444" stroke-width="2"/><circle cx="3628" cy="1634" r="3" fill="#333"/>
<path d="M3346 1656 L3364 1660 V1700 L3346 1694 Z" fill="#f5dca0" stroke="#666" stroke-width="2"/><path d="M3364 1660 H3372 V1692 H3364" fill="none" stroke="#666" stroke-width="2"/><path d="M3372 1652 V1672 M3362 1662 H3382" stroke="#7cc35a" stroke-width="5"/>
<path d="M3405 1664 L3429 1688 M3429 1664 L3405 1688" stroke="#bbb" stroke-width="6"/>
<path d="M3342 2076 H3378 V2104 H3342 Z M3342 2084 H3358 V2104 M3364 2084 H3374 V2090 H3364 Z" fill="none" stroke="#444" stroke-width="2.2"/>
<path d="M3432 2074 H3442 V2106 H3432 Z M3432 2082 H3442 M3432 2098 H3442 M3446 2076 L3454 2074 L3462 2104 L3454 2106 Z" fill="none" stroke="#444" stroke-width="2.2"/>
<path d="M3516 2088 L3526 2078 L3536 2088 L3526 2098 Z M3528 2096 L3538 2086 L3546 2094 L3536 2104 Z" fill="none" stroke="#444" stroke-width="2.2"/>
<defs><radialGradient id="bsph" cx="0.35" cy="0.3"><stop offset="0" stop-color="#d8e8ff"/><stop offset="1" stop-color="#2a6ad0"/></radialGradient></defs><circle cx="3620" cy="2090" r="14" fill="url(#bsph)" stroke="#555" stroke-width="1.5"/>
<path d="M3690 2082 L3707 2073 L3724 2082 L3707 2091 Z M3692 2088 L3690 2090 L3707 2099 L3724 2090 L3722 2088 M3692 2096 L3690 2098 L3707 2107 L3724 2098 L3722 2096" fill="#fff" stroke="#444" stroke-width="2"/>
</svg></body></html>
